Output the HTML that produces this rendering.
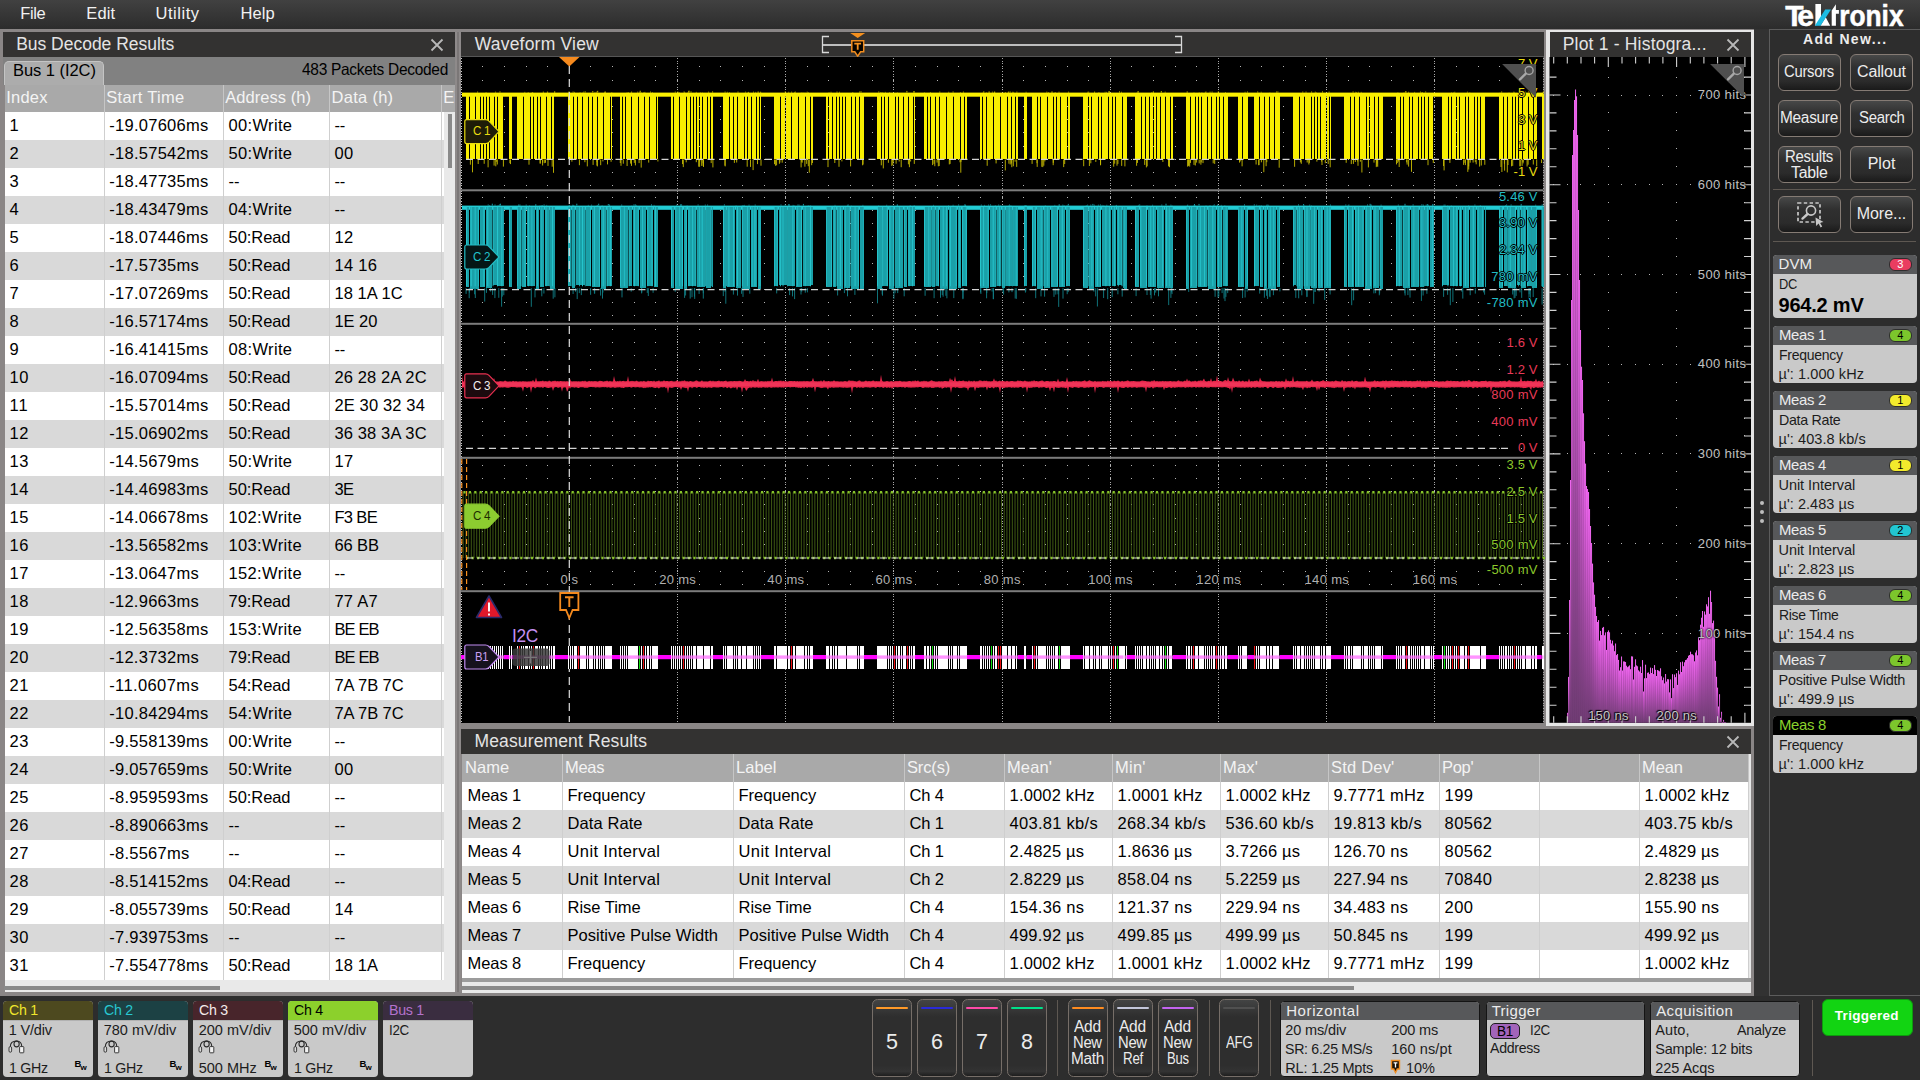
<!DOCTYPE html><html><head><meta charset="utf-8"><title>scope</title><style>
html,body{margin:0;padding:0}
body{width:1920px;height:1080px;overflow:hidden;position:relative;background:#2d2d2d;font-family:"Liberation Sans",sans-serif;}
.t{position:absolute;white-space:pre;line-height:20px;height:20px;}
svg{position:absolute;overflow:visible}
</style></head><body>
<div style="position:absolute;left:0px;top:0px;width:1920px;height:29px;background:linear-gradient(#414141,#2c2c2c);"></div>
<span class="t" style="left:20.30px;top:3.30px;font-size:16.5px;letter-spacing:-0.372px;color:#f2f2f2;">File</span>
<span class="t" style="left:86.30px;top:3.30px;font-size:16.5px;letter-spacing:0.154px;color:#f2f2f2;">Edit</span>
<span class="t" style="left:155.50px;top:3.30px;font-size:16.5px;letter-spacing:0.541px;color:#f2f2f2;">Utility</span>
<span class="t" style="left:240.50px;top:3.30px;font-size:16.5px;letter-spacing:0.065px;color:#f2f2f2;">Help</span>
<div style="position:absolute;left:0px;top:29px;width:1754px;height:967px;background:#8a8686;"></div>
<div style="position:absolute;left:1754px;top:29px;width:15px;height:967px;background:#323232;"></div>
<div style="position:absolute;left:3px;top:32px;width:452px;height:24.5px;background:#333231;"></div>
<span class="t" style="left:16.20px;top:34.00px;font-size:17.5px;letter-spacing:-0.022px;color:#e4e4e4;">Bus Decode Results</span>
<svg style="left:430px;top:38px" width="14" height="14"><path d="M1.5 1.5L12.5 12.5M12.5 1.5L1.5 12.5" stroke="#b8b8b8" stroke-width="1.8" fill="none"/></svg>
<div style="position:absolute;left:3px;top:56.5px;width:452px;height:28px;background:#818181;"></div>
<div style="position:absolute;left:4px;top:61px;width:100px;height:24px;background:#acacac;border-radius:5px 5px 0 0;border:1px solid #c4c4c4;border-bottom:none;box-sizing:border-box;"></div>
<span class="t" style="left:13.00px;top:59.80px;font-size:16.5px;letter-spacing:-0.055px;color:#000;">Bus 1 (I2C)</span>
<span class="t" style="left:301.72px;top:59.30px;font-size:16.5px;letter-spacing:-0.300px;color:#000;transform:scaleX(0.9375);transform-origin:0 50%;">483 Packets Decoded</span>
<div style="position:absolute;left:5px;top:84.5px;width:450px;height:27.5px;background:#a9a9a9;"></div>
<span class="t" style="left:6.30px;top:87.30px;font-size:16.5px;letter-spacing:0.186px;color:#f4f4f4;">Index</span>
<span class="t" style="left:106.30px;top:87.30px;font-size:16.5px;letter-spacing:0.294px;color:#f4f4f4;">Start Time</span>
<span class="t" style="left:225.30px;top:87.30px;font-size:16.5px;letter-spacing:0.040px;color:#f4f4f4;">Address (h)</span>
<span class="t" style="left:331.60px;top:87.30px;font-size:16.5px;letter-spacing:0.274px;color:#f4f4f4;">Data (h)</span>
<div style="position:absolute;left:441px;top:84.5px;width:13.5px;height:27px;overflow:hidden">
<span class="t" style="left:2.30px;top:2.80px;font-size:16.5px;letter-spacing:-0.021px;color:#f4f4f4;">Error</span>
</div>
<div style="position:absolute;left:5px;top:112px;width:439px;height:868px;background:#fff;"></div>
<div style="position:absolute;left:444px;top:112px;width:10.5px;height:880px;background:#e9e9e9;"></div>
<div style="position:absolute;left:5px;top:980px;width:439px;height:12px;background:#e9e9e9;"></div>
<span class="t" style="left:9.60px;top:115.30px;font-size:16.5px;letter-spacing:0.367px;color:#000;">1</span>
<span class="t" style="left:109.20px;top:115.30px;font-size:16.5px;letter-spacing:0.282px;color:#000;">-19.07606ms</span>
<span class="t" style="left:228.60px;top:115.30px;font-size:16.5px;letter-spacing:0.326px;color:#000;">00:Write</span>
<span class="t" style="left:334.40px;top:115.30px;font-size:16.5px;letter-spacing:-0.082px;color:#000;">--</span>
<div style="position:absolute;left:5px;top:140px;width:439px;height:28px;background:#d9d9d9;"></div>
<span class="t" style="left:9.60px;top:143.30px;font-size:16.5px;letter-spacing:0.367px;color:#000;">2</span>
<span class="t" style="left:109.20px;top:143.30px;font-size:16.5px;letter-spacing:0.282px;color:#000;">-18.57542ms</span>
<span class="t" style="left:228.60px;top:143.30px;font-size:16.5px;letter-spacing:0.326px;color:#000;">50:Write</span>
<span class="t" style="left:334.40px;top:143.30px;font-size:16.5px;letter-spacing:0.367px;color:#000;">00</span>
<span class="t" style="left:9.60px;top:171.30px;font-size:16.5px;letter-spacing:0.367px;color:#000;">3</span>
<span class="t" style="left:109.20px;top:171.30px;font-size:16.5px;letter-spacing:0.282px;color:#000;">-18.47735ms</span>
<span class="t" style="left:228.60px;top:171.30px;font-size:16.5px;letter-spacing:-0.082px;color:#000;">--</span>
<span class="t" style="left:334.40px;top:171.30px;font-size:16.5px;letter-spacing:-0.082px;color:#000;">--</span>
<div style="position:absolute;left:5px;top:196px;width:439px;height:28px;background:#d9d9d9;"></div>
<span class="t" style="left:9.60px;top:199.30px;font-size:16.5px;letter-spacing:0.367px;color:#000;">4</span>
<span class="t" style="left:109.20px;top:199.30px;font-size:16.5px;letter-spacing:0.282px;color:#000;">-18.43479ms</span>
<span class="t" style="left:228.60px;top:199.30px;font-size:16.5px;letter-spacing:0.326px;color:#000;">04:Write</span>
<span class="t" style="left:334.40px;top:199.30px;font-size:16.5px;letter-spacing:-0.082px;color:#000;">--</span>
<span class="t" style="left:9.60px;top:227.30px;font-size:16.5px;letter-spacing:0.367px;color:#000;">5</span>
<span class="t" style="left:109.20px;top:227.30px;font-size:16.5px;letter-spacing:0.282px;color:#000;">-18.07446ms</span>
<span class="t" style="left:228.60px;top:227.30px;font-size:16.5px;letter-spacing:-0.079px;color:#000;">50:Read</span>
<span class="t" style="left:334.40px;top:227.30px;font-size:16.5px;letter-spacing:0.367px;color:#000;">12</span>
<div style="position:absolute;left:5px;top:252px;width:439px;height:28px;background:#d9d9d9;"></div>
<span class="t" style="left:9.60px;top:255.30px;font-size:16.5px;letter-spacing:0.367px;color:#000;">6</span>
<span class="t" style="left:109.20px;top:255.30px;font-size:16.5px;letter-spacing:0.274px;color:#000;">-17.5735ms</span>
<span class="t" style="left:228.60px;top:255.30px;font-size:16.5px;letter-spacing:-0.079px;color:#000;">50:Read</span>
<span class="t" style="left:334.40px;top:255.30px;font-size:16.5px;letter-spacing:0.330px;color:#000;">14 16</span>
<span class="t" style="left:9.60px;top:283.30px;font-size:16.5px;letter-spacing:0.367px;color:#000;">7</span>
<span class="t" style="left:109.20px;top:283.30px;font-size:16.5px;letter-spacing:0.282px;color:#000;">-17.07269ms</span>
<span class="t" style="left:228.60px;top:283.30px;font-size:16.5px;letter-spacing:-0.079px;color:#000;">50:Read</span>
<span class="t" style="left:334.40px;top:283.30px;font-size:16.5px;letter-spacing:0.070px;color:#000;">18 1A 1C</span>
<div style="position:absolute;left:5px;top:308px;width:439px;height:28px;background:#d9d9d9;"></div>
<span class="t" style="left:9.60px;top:311.30px;font-size:16.5px;letter-spacing:0.367px;color:#000;">8</span>
<span class="t" style="left:109.20px;top:311.30px;font-size:16.5px;letter-spacing:0.282px;color:#000;">-16.57174ms</span>
<span class="t" style="left:228.60px;top:311.30px;font-size:16.5px;letter-spacing:-0.079px;color:#000;">50:Read</span>
<span class="t" style="left:334.40px;top:311.30px;font-size:16.5px;letter-spacing:-0.049px;color:#000;">1E 20</span>
<span class="t" style="left:9.60px;top:339.30px;font-size:16.5px;letter-spacing:0.367px;color:#000;">9</span>
<span class="t" style="left:109.20px;top:339.30px;font-size:16.5px;letter-spacing:0.282px;color:#000;">-16.41415ms</span>
<span class="t" style="left:228.60px;top:339.30px;font-size:16.5px;letter-spacing:0.326px;color:#000;">08:Write</span>
<span class="t" style="left:334.40px;top:339.30px;font-size:16.5px;letter-spacing:-0.082px;color:#000;">--</span>
<div style="position:absolute;left:5px;top:364px;width:439px;height:28px;background:#d9d9d9;"></div>
<span class="t" style="left:9.60px;top:367.30px;font-size:16.5px;letter-spacing:0.367px;color:#000;">10</span>
<span class="t" style="left:109.20px;top:367.30px;font-size:16.5px;letter-spacing:0.282px;color:#000;">-16.07094ms</span>
<span class="t" style="left:228.60px;top:367.30px;font-size:16.5px;letter-spacing:-0.079px;color:#000;">50:Read</span>
<span class="t" style="left:334.40px;top:367.30px;font-size:16.5px;letter-spacing:0.134px;color:#000;">26 28 2A 2C</span>
<span class="t" style="left:9.60px;top:395.30px;font-size:16.5px;letter-spacing:0.979px;color:#000;">11</span>
<span class="t" style="left:109.20px;top:395.30px;font-size:16.5px;letter-spacing:0.282px;color:#000;">-15.57014ms</span>
<span class="t" style="left:228.60px;top:395.30px;font-size:16.5px;letter-spacing:-0.079px;color:#000;">50:Read</span>
<span class="t" style="left:334.40px;top:395.30px;font-size:16.5px;letter-spacing:0.145px;color:#000;">2E 30 32 34</span>
<div style="position:absolute;left:5px;top:420px;width:439px;height:28px;background:#d9d9d9;"></div>
<span class="t" style="left:9.60px;top:423.30px;font-size:16.5px;letter-spacing:0.367px;color:#000;">12</span>
<span class="t" style="left:109.20px;top:423.30px;font-size:16.5px;letter-spacing:0.282px;color:#000;">-15.06902ms</span>
<span class="t" style="left:228.60px;top:423.30px;font-size:16.5px;letter-spacing:-0.079px;color:#000;">50:Read</span>
<span class="t" style="left:334.40px;top:423.30px;font-size:16.5px;letter-spacing:0.134px;color:#000;">36 38 3A 3C</span>
<span class="t" style="left:9.60px;top:451.30px;font-size:16.5px;letter-spacing:0.367px;color:#000;">13</span>
<span class="t" style="left:109.20px;top:451.30px;font-size:16.5px;letter-spacing:0.274px;color:#000;">-14.5679ms</span>
<span class="t" style="left:228.60px;top:451.30px;font-size:16.5px;letter-spacing:0.326px;color:#000;">50:Write</span>
<span class="t" style="left:334.40px;top:451.30px;font-size:16.5px;letter-spacing:0.367px;color:#000;">17</span>
<div style="position:absolute;left:5px;top:476px;width:439px;height:28px;background:#d9d9d9;"></div>
<span class="t" style="left:9.60px;top:479.30px;font-size:16.5px;letter-spacing:0.367px;color:#000;">14</span>
<span class="t" style="left:109.20px;top:479.30px;font-size:16.5px;letter-spacing:0.282px;color:#000;">-14.46983ms</span>
<span class="t" style="left:228.60px;top:479.30px;font-size:16.5px;letter-spacing:-0.079px;color:#000;">50:Read</span>
<span class="t" style="left:334.40px;top:479.30px;font-size:16.5px;letter-spacing:-0.580px;color:#000;">3E</span>
<span class="t" style="left:9.60px;top:507.30px;font-size:16.5px;letter-spacing:0.367px;color:#000;">15</span>
<span class="t" style="left:109.20px;top:507.30px;font-size:16.5px;letter-spacing:0.282px;color:#000;">-14.06678ms</span>
<span class="t" style="left:228.60px;top:507.30px;font-size:16.5px;letter-spacing:0.331px;color:#000;">102:Write</span>
<span class="t" style="left:334.40px;top:507.30px;font-size:16.5px;letter-spacing:-0.629px;color:#000;">F3 BE</span>
<div style="position:absolute;left:5px;top:532px;width:439px;height:28px;background:#d9d9d9;"></div>
<span class="t" style="left:9.60px;top:535.30px;font-size:16.5px;letter-spacing:0.367px;color:#000;">16</span>
<span class="t" style="left:109.20px;top:535.30px;font-size:16.5px;letter-spacing:0.282px;color:#000;">-13.56582ms</span>
<span class="t" style="left:228.60px;top:535.30px;font-size:16.5px;letter-spacing:0.331px;color:#000;">103:Write</span>
<span class="t" style="left:334.40px;top:535.30px;font-size:16.5px;letter-spacing:-0.102px;color:#000;">66 BB</span>
<span class="t" style="left:9.60px;top:563.30px;font-size:16.5px;letter-spacing:0.367px;color:#000;">17</span>
<span class="t" style="left:109.20px;top:563.30px;font-size:16.5px;letter-spacing:0.274px;color:#000;">-13.0647ms</span>
<span class="t" style="left:228.60px;top:563.30px;font-size:16.5px;letter-spacing:0.331px;color:#000;">152:Write</span>
<span class="t" style="left:334.40px;top:563.30px;font-size:16.5px;letter-spacing:-0.082px;color:#000;">--</span>
<div style="position:absolute;left:5px;top:588px;width:439px;height:28px;background:#d9d9d9;"></div>
<span class="t" style="left:9.60px;top:591.30px;font-size:16.5px;letter-spacing:0.367px;color:#000;">18</span>
<span class="t" style="left:109.20px;top:591.30px;font-size:16.5px;letter-spacing:0.274px;color:#000;">-12.9663ms</span>
<span class="t" style="left:228.60px;top:591.30px;font-size:16.5px;letter-spacing:-0.079px;color:#000;">79:Read</span>
<span class="t" style="left:334.40px;top:591.30px;font-size:16.5px;letter-spacing:0.290px;color:#000;">77 A7</span>
<span class="t" style="left:9.60px;top:619.30px;font-size:16.5px;letter-spacing:0.367px;color:#000;">19</span>
<span class="t" style="left:109.20px;top:619.30px;font-size:16.5px;letter-spacing:0.282px;color:#000;">-12.56358ms</span>
<span class="t" style="left:228.60px;top:619.30px;font-size:16.5px;letter-spacing:0.331px;color:#000;">153:Write</span>
<span class="t" style="left:334.40px;top:619.30px;font-size:16.5px;letter-spacing:-0.860px;color:#000;">BE EB</span>
<div style="position:absolute;left:5px;top:644px;width:439px;height:28px;background:#d9d9d9;"></div>
<span class="t" style="left:9.60px;top:647.30px;font-size:16.5px;letter-spacing:0.367px;color:#000;">20</span>
<span class="t" style="left:109.20px;top:647.30px;font-size:16.5px;letter-spacing:0.274px;color:#000;">-12.3732ms</span>
<span class="t" style="left:228.60px;top:647.30px;font-size:16.5px;letter-spacing:-0.079px;color:#000;">79:Read</span>
<span class="t" style="left:334.40px;top:647.30px;font-size:16.5px;letter-spacing:-0.860px;color:#000;">BE EB</span>
<span class="t" style="left:9.60px;top:675.30px;font-size:16.5px;letter-spacing:0.367px;color:#000;">21</span>
<span class="t" style="left:109.20px;top:675.30px;font-size:16.5px;letter-spacing:0.396px;color:#000;">-11.0607ms</span>
<span class="t" style="left:228.60px;top:675.30px;font-size:16.5px;letter-spacing:-0.079px;color:#000;">54:Read</span>
<span class="t" style="left:334.40px;top:675.30px;font-size:16.5px;letter-spacing:-0.065px;color:#000;">7A 7B 7C</span>
<div style="position:absolute;left:5px;top:700px;width:439px;height:28px;background:#d9d9d9;"></div>
<span class="t" style="left:9.60px;top:703.30px;font-size:16.5px;letter-spacing:0.367px;color:#000;">22</span>
<span class="t" style="left:109.20px;top:703.30px;font-size:16.5px;letter-spacing:0.282px;color:#000;">-10.84294ms</span>
<span class="t" style="left:228.60px;top:703.30px;font-size:16.5px;letter-spacing:0.326px;color:#000;">54:Write</span>
<span class="t" style="left:334.40px;top:703.30px;font-size:16.5px;letter-spacing:-0.065px;color:#000;">7A 7B 7C</span>
<span class="t" style="left:9.60px;top:731.30px;font-size:16.5px;letter-spacing:0.367px;color:#000;">23</span>
<span class="t" style="left:109.20px;top:731.30px;font-size:16.5px;letter-spacing:0.282px;color:#000;">-9.558139ms</span>
<span class="t" style="left:228.60px;top:731.30px;font-size:16.5px;letter-spacing:0.326px;color:#000;">00:Write</span>
<span class="t" style="left:334.40px;top:731.30px;font-size:16.5px;letter-spacing:-0.082px;color:#000;">--</span>
<div style="position:absolute;left:5px;top:756px;width:439px;height:28px;background:#d9d9d9;"></div>
<span class="t" style="left:9.60px;top:759.30px;font-size:16.5px;letter-spacing:0.367px;color:#000;">24</span>
<span class="t" style="left:109.20px;top:759.30px;font-size:16.5px;letter-spacing:0.282px;color:#000;">-9.057659ms</span>
<span class="t" style="left:228.60px;top:759.30px;font-size:16.5px;letter-spacing:0.326px;color:#000;">50:Write</span>
<span class="t" style="left:334.40px;top:759.30px;font-size:16.5px;letter-spacing:0.367px;color:#000;">00</span>
<span class="t" style="left:9.60px;top:787.30px;font-size:16.5px;letter-spacing:0.367px;color:#000;">25</span>
<span class="t" style="left:109.20px;top:787.30px;font-size:16.5px;letter-spacing:0.282px;color:#000;">-8.959593ms</span>
<span class="t" style="left:228.60px;top:787.30px;font-size:16.5px;letter-spacing:-0.079px;color:#000;">50:Read</span>
<span class="t" style="left:334.40px;top:787.30px;font-size:16.5px;letter-spacing:-0.082px;color:#000;">--</span>
<div style="position:absolute;left:5px;top:812px;width:439px;height:28px;background:#d9d9d9;"></div>
<span class="t" style="left:9.60px;top:815.30px;font-size:16.5px;letter-spacing:0.367px;color:#000;">26</span>
<span class="t" style="left:109.20px;top:815.30px;font-size:16.5px;letter-spacing:0.282px;color:#000;">-8.890663ms</span>
<span class="t" style="left:228.60px;top:815.30px;font-size:16.5px;letter-spacing:-0.082px;color:#000;">--</span>
<span class="t" style="left:334.40px;top:815.30px;font-size:16.5px;letter-spacing:-0.082px;color:#000;">--</span>
<span class="t" style="left:9.60px;top:843.30px;font-size:16.5px;letter-spacing:0.367px;color:#000;">27</span>
<span class="t" style="left:109.20px;top:843.30px;font-size:16.5px;letter-spacing:0.263px;color:#000;">-8.5567ms</span>
<span class="t" style="left:228.60px;top:843.30px;font-size:16.5px;letter-spacing:-0.082px;color:#000;">--</span>
<span class="t" style="left:334.40px;top:843.30px;font-size:16.5px;letter-spacing:-0.082px;color:#000;">--</span>
<div style="position:absolute;left:5px;top:868px;width:439px;height:28px;background:#d9d9d9;"></div>
<span class="t" style="left:9.60px;top:871.30px;font-size:16.5px;letter-spacing:0.367px;color:#000;">28</span>
<span class="t" style="left:109.20px;top:871.30px;font-size:16.5px;letter-spacing:0.282px;color:#000;">-8.514152ms</span>
<span class="t" style="left:228.60px;top:871.30px;font-size:16.5px;letter-spacing:-0.079px;color:#000;">04:Read</span>
<span class="t" style="left:334.40px;top:871.30px;font-size:16.5px;letter-spacing:-0.082px;color:#000;">--</span>
<span class="t" style="left:9.60px;top:899.30px;font-size:16.5px;letter-spacing:0.367px;color:#000;">29</span>
<span class="t" style="left:109.20px;top:899.30px;font-size:16.5px;letter-spacing:0.282px;color:#000;">-8.055739ms</span>
<span class="t" style="left:228.60px;top:899.30px;font-size:16.5px;letter-spacing:-0.079px;color:#000;">50:Read</span>
<span class="t" style="left:334.40px;top:899.30px;font-size:16.5px;letter-spacing:0.367px;color:#000;">14</span>
<div style="position:absolute;left:5px;top:924px;width:439px;height:28px;background:#d9d9d9;"></div>
<span class="t" style="left:9.60px;top:927.30px;font-size:16.5px;letter-spacing:0.367px;color:#000;">30</span>
<span class="t" style="left:109.20px;top:927.30px;font-size:16.5px;letter-spacing:0.282px;color:#000;">-7.939753ms</span>
<span class="t" style="left:228.60px;top:927.30px;font-size:16.5px;letter-spacing:-0.082px;color:#000;">--</span>
<span class="t" style="left:334.40px;top:927.30px;font-size:16.5px;letter-spacing:-0.082px;color:#000;">--</span>
<span class="t" style="left:9.60px;top:955.30px;font-size:16.5px;letter-spacing:0.367px;color:#000;">31</span>
<span class="t" style="left:109.20px;top:955.30px;font-size:16.5px;letter-spacing:0.282px;color:#000;">-7.554778ms</span>
<span class="t" style="left:228.60px;top:955.30px;font-size:16.5px;letter-spacing:-0.079px;color:#000;">50:Read</span>
<span class="t" style="left:334.40px;top:955.30px;font-size:16.5px;letter-spacing:0.108px;color:#000;">18 1A</span>
<div style="position:absolute;left:104px;top:84.5px;width:1px;height:27.5px;background:#c6c6c6;"></div>
<div style="position:absolute;left:104px;top:112px;width:1px;height:868px;background:#cfcfcf;"></div>
<div style="position:absolute;left:223px;top:84.5px;width:1px;height:27.5px;background:#c6c6c6;"></div>
<div style="position:absolute;left:223px;top:112px;width:1px;height:868px;background:#cfcfcf;"></div>
<div style="position:absolute;left:329px;top:84.5px;width:1px;height:27.5px;background:#c6c6c6;"></div>
<div style="position:absolute;left:329px;top:112px;width:1px;height:868px;background:#cfcfcf;"></div>
<div style="position:absolute;left:441px;top:84.5px;width:1px;height:27.5px;background:#c6c6c6;"></div>
<div style="position:absolute;left:441px;top:112px;width:1px;height:868px;background:#cfcfcf;"></div>
<div style="position:absolute;left:448px;top:114px;width:4px;height:53.5px;background:#8a8a8a;"></div>
<div style="position:absolute;left:4px;top:986px;width:216px;height:4px;background:#8a8a8a;"></div>
<div style="position:absolute;left:455px;top:32px;width:6px;height:960px;background:#8e8a8a;"></div>
<div style="position:absolute;left:457.2px;top:32px;width:2.2px;height:960px;background:#7b7777;"></div>
<div style="position:absolute;left:461px;top:32px;width:1082.5px;height:25px;background:#333231;"></div>
<div style="position:absolute;left:461px;top:56px;width:1082.5px;height:1px;background:#565656;"></div>
<span class="t" style="left:474.70px;top:34.00px;font-size:17.5px;letter-spacing:0.209px;color:#e4e4e4;">Waveform View</span>
<svg style="left:0;top:0" width="1920" height="60"><path d="M829 36.5H822.5V52.5H829M1175 36.5H1181.5V52.5H1175" stroke="#d8d8d8" stroke-width="1.3" fill="none"/><path d="M823 45H1181" stroke="#bebebe" stroke-width="1.8"/><path d="M850.2 33H865.2L857.7 38Z" fill="#f5901e"/><path d="M851.8 40.7H863.7V51.8H860.6L857.7 56.2L854.8 51.8H851.8Z" fill="#050300" stroke="#f08c1e" stroke-width="1.5"/><path d="M854.3 43.6H861.1M857.7 43.6V49.8" stroke="#f59220" stroke-width="1.8" fill="none"/></svg>
<svg style="left:0;top:0" width="1920" height="730" viewBox="0 0 1920 730"><rect x="461" y="57" width="1082.5" height="666" fill="#000"/><path d="M482 66.5h1M504 66.5h1M526 66.5h1M547 66.5h1M569 66.5h1M590 66.5h1M612 66.5h1M634 66.5h1M655 66.5h1M677 66.5h1M699 66.5h1M720 66.5h1M742 66.5h1M764 66.5h1M785 66.5h1M807 66.5h1M828 66.5h1M850 66.5h1M872 66.5h1M893 66.5h1M915 66.5h1M937 66.5h1M958 66.5h1M980 66.5h1M1002 66.5h1M1023 66.5h1M1045 66.5h1M1067 66.5h1M1088 66.5h1M1110 66.5h1M1131 66.5h1M1153 66.5h1M1175 66.5h1M1196 66.5h1M1218 66.5h1M1240 66.5h1M1261 66.5h1M1283 66.5h1M1305 66.5h1M1326 66.5h1M1348 66.5h1M1369 66.5h1M1391 66.5h1M1413 66.5h1M1434 66.5h1M1456 66.5h1M1478 66.5h1M1499 66.5h1M1521 66.5h1M482 80.5h1M504 80.5h1M526 80.5h1M547 80.5h1M569 80.5h1M590 80.5h1M612 80.5h1M634 80.5h1M655 80.5h1M677 80.5h1M699 80.5h1M720 80.5h1M742 80.5h1M764 80.5h1M785 80.5h1M807 80.5h1M828 80.5h1M850 80.5h1M872 80.5h1M893 80.5h1M915 80.5h1M937 80.5h1M958 80.5h1M980 80.5h1M1002 80.5h1M1023 80.5h1M1045 80.5h1M1067 80.5h1M1088 80.5h1M1110 80.5h1M1131 80.5h1M1153 80.5h1M1175 80.5h1M1196 80.5h1M1218 80.5h1M1240 80.5h1M1261 80.5h1M1283 80.5h1M1305 80.5h1M1326 80.5h1M1348 80.5h1M1369 80.5h1M1391 80.5h1M1413 80.5h1M1434 80.5h1M1456 80.5h1M1478 80.5h1M1499 80.5h1M1521 80.5h1M482 93.5h1M504 93.5h1M526 93.5h1M547 93.5h1M569 93.5h1M590 93.5h1M612 93.5h1M634 93.5h1M655 93.5h1M677 93.5h1M699 93.5h1M720 93.5h1M742 93.5h1M764 93.5h1M785 93.5h1M807 93.5h1M828 93.5h1M850 93.5h1M872 93.5h1M893 93.5h1M915 93.5h1M937 93.5h1M958 93.5h1M980 93.5h1M1002 93.5h1M1023 93.5h1M1045 93.5h1M1067 93.5h1M1088 93.5h1M1110 93.5h1M1131 93.5h1M1153 93.5h1M1175 93.5h1M1196 93.5h1M1218 93.5h1M1240 93.5h1M1261 93.5h1M1283 93.5h1M1305 93.5h1M1326 93.5h1M1348 93.5h1M1369 93.5h1M1391 93.5h1M1413 93.5h1M1434 93.5h1M1456 93.5h1M1478 93.5h1M1499 93.5h1M1521 93.5h1M482 106.5h1M504 106.5h1M526 106.5h1M547 106.5h1M569 106.5h1M590 106.5h1M612 106.5h1M634 106.5h1M655 106.5h1M677 106.5h1M699 106.5h1M720 106.5h1M742 106.5h1M764 106.5h1M785 106.5h1M807 106.5h1M828 106.5h1M850 106.5h1M872 106.5h1M893 106.5h1M915 106.5h1M937 106.5h1M958 106.5h1M980 106.5h1M1002 106.5h1M1023 106.5h1M1045 106.5h1M1067 106.5h1M1088 106.5h1M1110 106.5h1M1131 106.5h1M1153 106.5h1M1175 106.5h1M1196 106.5h1M1218 106.5h1M1240 106.5h1M1261 106.5h1M1283 106.5h1M1305 106.5h1M1326 106.5h1M1348 106.5h1M1369 106.5h1M1391 106.5h1M1413 106.5h1M1434 106.5h1M1456 106.5h1M1478 106.5h1M1499 106.5h1M1521 106.5h1M482 119.5h1M504 119.5h1M526 119.5h1M547 119.5h1M569 119.5h1M590 119.5h1M612 119.5h1M634 119.5h1M655 119.5h1M677 119.5h1M699 119.5h1M720 119.5h1M742 119.5h1M764 119.5h1M785 119.5h1M807 119.5h1M828 119.5h1M850 119.5h1M872 119.5h1M893 119.5h1M915 119.5h1M937 119.5h1M958 119.5h1M980 119.5h1M1002 119.5h1M1023 119.5h1M1045 119.5h1M1067 119.5h1M1088 119.5h1M1110 119.5h1M1131 119.5h1M1153 119.5h1M1175 119.5h1M1196 119.5h1M1218 119.5h1M1240 119.5h1M1261 119.5h1M1283 119.5h1M1305 119.5h1M1326 119.5h1M1348 119.5h1M1369 119.5h1M1391 119.5h1M1413 119.5h1M1434 119.5h1M1456 119.5h1M1478 119.5h1M1499 119.5h1M1521 119.5h1M482 132.5h1M504 132.5h1M526 132.5h1M547 132.5h1M569 132.5h1M590 132.5h1M612 132.5h1M634 132.5h1M655 132.5h1M677 132.5h1M699 132.5h1M720 132.5h1M742 132.5h1M764 132.5h1M785 132.5h1M807 132.5h1M828 132.5h1M850 132.5h1M872 132.5h1M893 132.5h1M915 132.5h1M937 132.5h1M958 132.5h1M980 132.5h1M1002 132.5h1M1023 132.5h1M1045 132.5h1M1067 132.5h1M1088 132.5h1M1110 132.5h1M1131 132.5h1M1153 132.5h1M1175 132.5h1M1196 132.5h1M1218 132.5h1M1240 132.5h1M1261 132.5h1M1283 132.5h1M1305 132.5h1M1326 132.5h1M1348 132.5h1M1369 132.5h1M1391 132.5h1M1413 132.5h1M1434 132.5h1M1456 132.5h1M1478 132.5h1M1499 132.5h1M1521 132.5h1M482 146.5h1M504 146.5h1M526 146.5h1M547 146.5h1M569 146.5h1M590 146.5h1M612 146.5h1M634 146.5h1M655 146.5h1M677 146.5h1M699 146.5h1M720 146.5h1M742 146.5h1M764 146.5h1M785 146.5h1M807 146.5h1M828 146.5h1M850 146.5h1M872 146.5h1M893 146.5h1M915 146.5h1M937 146.5h1M958 146.5h1M980 146.5h1M1002 146.5h1M1023 146.5h1M1045 146.5h1M1067 146.5h1M1088 146.5h1M1110 146.5h1M1131 146.5h1M1153 146.5h1M1175 146.5h1M1196 146.5h1M1218 146.5h1M1240 146.5h1M1261 146.5h1M1283 146.5h1M1305 146.5h1M1326 146.5h1M1348 146.5h1M1369 146.5h1M1391 146.5h1M1413 146.5h1M1434 146.5h1M1456 146.5h1M1478 146.5h1M1499 146.5h1M1521 146.5h1M482 159.5h1M504 159.5h1M526 159.5h1M547 159.5h1M569 159.5h1M590 159.5h1M612 159.5h1M634 159.5h1M655 159.5h1M677 159.5h1M699 159.5h1M720 159.5h1M742 159.5h1M764 159.5h1M785 159.5h1M807 159.5h1M828 159.5h1M850 159.5h1M872 159.5h1M893 159.5h1M915 159.5h1M937 159.5h1M958 159.5h1M980 159.5h1M1002 159.5h1M1023 159.5h1M1045 159.5h1M1067 159.5h1M1088 159.5h1M1110 159.5h1M1131 159.5h1M1153 159.5h1M1175 159.5h1M1196 159.5h1M1218 159.5h1M1240 159.5h1M1261 159.5h1M1283 159.5h1M1305 159.5h1M1326 159.5h1M1348 159.5h1M1369 159.5h1M1391 159.5h1M1413 159.5h1M1434 159.5h1M1456 159.5h1M1478 159.5h1M1499 159.5h1M1521 159.5h1M482 172.5h1M504 172.5h1M526 172.5h1M547 172.5h1M569 172.5h1M590 172.5h1M612 172.5h1M634 172.5h1M655 172.5h1M677 172.5h1M699 172.5h1M720 172.5h1M742 172.5h1M764 172.5h1M785 172.5h1M807 172.5h1M828 172.5h1M850 172.5h1M872 172.5h1M893 172.5h1M915 172.5h1M937 172.5h1M958 172.5h1M980 172.5h1M1002 172.5h1M1023 172.5h1M1045 172.5h1M1067 172.5h1M1088 172.5h1M1110 172.5h1M1131 172.5h1M1153 172.5h1M1175 172.5h1M1196 172.5h1M1218 172.5h1M1240 172.5h1M1261 172.5h1M1283 172.5h1M1305 172.5h1M1326 172.5h1M1348 172.5h1M1369 172.5h1M1391 172.5h1M1413 172.5h1M1434 172.5h1M1456 172.5h1M1478 172.5h1M1499 172.5h1M1521 172.5h1M482 185.5h1M504 185.5h1M526 185.5h1M547 185.5h1M569 185.5h1M590 185.5h1M612 185.5h1M634 185.5h1M655 185.5h1M677 185.5h1M699 185.5h1M720 185.5h1M742 185.5h1M764 185.5h1M785 185.5h1M807 185.5h1M828 185.5h1M850 185.5h1M872 185.5h1M893 185.5h1M915 185.5h1M937 185.5h1M958 185.5h1M980 185.5h1M1002 185.5h1M1023 185.5h1M1045 185.5h1M1067 185.5h1M1088 185.5h1M1110 185.5h1M1131 185.5h1M1153 185.5h1M1175 185.5h1M1196 185.5h1M1218 185.5h1M1240 185.5h1M1261 185.5h1M1283 185.5h1M1305 185.5h1M1326 185.5h1M1348 185.5h1M1369 185.5h1M1391 185.5h1M1413 185.5h1M1434 185.5h1M1456 185.5h1M1478 185.5h1M1499 185.5h1M1521 185.5h1M482 197.5h1M504 197.5h1M526 197.5h1M547 197.5h1M569 197.5h1M590 197.5h1M612 197.5h1M634 197.5h1M655 197.5h1M677 197.5h1M699 197.5h1M720 197.5h1M742 197.5h1M764 197.5h1M785 197.5h1M807 197.5h1M828 197.5h1M850 197.5h1M872 197.5h1M893 197.5h1M915 197.5h1M937 197.5h1M958 197.5h1M980 197.5h1M1002 197.5h1M1023 197.5h1M1045 197.5h1M1067 197.5h1M1088 197.5h1M1110 197.5h1M1131 197.5h1M1153 197.5h1M1175 197.5h1M1196 197.5h1M1218 197.5h1M1240 197.5h1M1261 197.5h1M1283 197.5h1M1305 197.5h1M1326 197.5h1M1348 197.5h1M1369 197.5h1M1391 197.5h1M1413 197.5h1M1434 197.5h1M1456 197.5h1M1478 197.5h1M1499 197.5h1M1521 197.5h1M482 210.5h1M504 210.5h1M526 210.5h1M547 210.5h1M569 210.5h1M590 210.5h1M612 210.5h1M634 210.5h1M655 210.5h1M677 210.5h1M699 210.5h1M720 210.5h1M742 210.5h1M764 210.5h1M785 210.5h1M807 210.5h1M828 210.5h1M850 210.5h1M872 210.5h1M893 210.5h1M915 210.5h1M937 210.5h1M958 210.5h1M980 210.5h1M1002 210.5h1M1023 210.5h1M1045 210.5h1M1067 210.5h1M1088 210.5h1M1110 210.5h1M1131 210.5h1M1153 210.5h1M1175 210.5h1M1196 210.5h1M1218 210.5h1M1240 210.5h1M1261 210.5h1M1283 210.5h1M1305 210.5h1M1326 210.5h1M1348 210.5h1M1369 210.5h1M1391 210.5h1M1413 210.5h1M1434 210.5h1M1456 210.5h1M1478 210.5h1M1499 210.5h1M1521 210.5h1M482 223.5h1M504 223.5h1M526 223.5h1M547 223.5h1M569 223.5h1M590 223.5h1M612 223.5h1M634 223.5h1M655 223.5h1M677 223.5h1M699 223.5h1M720 223.5h1M742 223.5h1M764 223.5h1M785 223.5h1M807 223.5h1M828 223.5h1M850 223.5h1M872 223.5h1M893 223.5h1M915 223.5h1M937 223.5h1M958 223.5h1M980 223.5h1M1002 223.5h1M1023 223.5h1M1045 223.5h1M1067 223.5h1M1088 223.5h1M1110 223.5h1M1131 223.5h1M1153 223.5h1M1175 223.5h1M1196 223.5h1M1218 223.5h1M1240 223.5h1M1261 223.5h1M1283 223.5h1M1305 223.5h1M1326 223.5h1M1348 223.5h1M1369 223.5h1M1391 223.5h1M1413 223.5h1M1434 223.5h1M1456 223.5h1M1478 223.5h1M1499 223.5h1M1521 223.5h1M482 236.5h1M504 236.5h1M526 236.5h1M547 236.5h1M569 236.5h1M590 236.5h1M612 236.5h1M634 236.5h1M655 236.5h1M677 236.5h1M699 236.5h1M720 236.5h1M742 236.5h1M764 236.5h1M785 236.5h1M807 236.5h1M828 236.5h1M850 236.5h1M872 236.5h1M893 236.5h1M915 236.5h1M937 236.5h1M958 236.5h1M980 236.5h1M1002 236.5h1M1023 236.5h1M1045 236.5h1M1067 236.5h1M1088 236.5h1M1110 236.5h1M1131 236.5h1M1153 236.5h1M1175 236.5h1M1196 236.5h1M1218 236.5h1M1240 236.5h1M1261 236.5h1M1283 236.5h1M1305 236.5h1M1326 236.5h1M1348 236.5h1M1369 236.5h1M1391 236.5h1M1413 236.5h1M1434 236.5h1M1456 236.5h1M1478 236.5h1M1499 236.5h1M1521 236.5h1M482 249.5h1M504 249.5h1M526 249.5h1M547 249.5h1M569 249.5h1M590 249.5h1M612 249.5h1M634 249.5h1M655 249.5h1M677 249.5h1M699 249.5h1M720 249.5h1M742 249.5h1M764 249.5h1M785 249.5h1M807 249.5h1M828 249.5h1M850 249.5h1M872 249.5h1M893 249.5h1M915 249.5h1M937 249.5h1M958 249.5h1M980 249.5h1M1002 249.5h1M1023 249.5h1M1045 249.5h1M1067 249.5h1M1088 249.5h1M1110 249.5h1M1131 249.5h1M1153 249.5h1M1175 249.5h1M1196 249.5h1M1218 249.5h1M1240 249.5h1M1261 249.5h1M1283 249.5h1M1305 249.5h1M1326 249.5h1M1348 249.5h1M1369 249.5h1M1391 249.5h1M1413 249.5h1M1434 249.5h1M1456 249.5h1M1478 249.5h1M1499 249.5h1M1521 249.5h1M482 263.5h1M504 263.5h1M526 263.5h1M547 263.5h1M569 263.5h1M590 263.5h1M612 263.5h1M634 263.5h1M655 263.5h1M677 263.5h1M699 263.5h1M720 263.5h1M742 263.5h1M764 263.5h1M785 263.5h1M807 263.5h1M828 263.5h1M850 263.5h1M872 263.5h1M893 263.5h1M915 263.5h1M937 263.5h1M958 263.5h1M980 263.5h1M1002 263.5h1M1023 263.5h1M1045 263.5h1M1067 263.5h1M1088 263.5h1M1110 263.5h1M1131 263.5h1M1153 263.5h1M1175 263.5h1M1196 263.5h1M1218 263.5h1M1240 263.5h1M1261 263.5h1M1283 263.5h1M1305 263.5h1M1326 263.5h1M1348 263.5h1M1369 263.5h1M1391 263.5h1M1413 263.5h1M1434 263.5h1M1456 263.5h1M1478 263.5h1M1499 263.5h1M1521 263.5h1M482 276.5h1M504 276.5h1M526 276.5h1M547 276.5h1M569 276.5h1M590 276.5h1M612 276.5h1M634 276.5h1M655 276.5h1M677 276.5h1M699 276.5h1M720 276.5h1M742 276.5h1M764 276.5h1M785 276.5h1M807 276.5h1M828 276.5h1M850 276.5h1M872 276.5h1M893 276.5h1M915 276.5h1M937 276.5h1M958 276.5h1M980 276.5h1M1002 276.5h1M1023 276.5h1M1045 276.5h1M1067 276.5h1M1088 276.5h1M1110 276.5h1M1131 276.5h1M1153 276.5h1M1175 276.5h1M1196 276.5h1M1218 276.5h1M1240 276.5h1M1261 276.5h1M1283 276.5h1M1305 276.5h1M1326 276.5h1M1348 276.5h1M1369 276.5h1M1391 276.5h1M1413 276.5h1M1434 276.5h1M1456 276.5h1M1478 276.5h1M1499 276.5h1M1521 276.5h1M482 289.5h1M504 289.5h1M526 289.5h1M547 289.5h1M569 289.5h1M590 289.5h1M612 289.5h1M634 289.5h1M655 289.5h1M677 289.5h1M699 289.5h1M720 289.5h1M742 289.5h1M764 289.5h1M785 289.5h1M807 289.5h1M828 289.5h1M850 289.5h1M872 289.5h1M893 289.5h1M915 289.5h1M937 289.5h1M958 289.5h1M980 289.5h1M1002 289.5h1M1023 289.5h1M1045 289.5h1M1067 289.5h1M1088 289.5h1M1110 289.5h1M1131 289.5h1M1153 289.5h1M1175 289.5h1M1196 289.5h1M1218 289.5h1M1240 289.5h1M1261 289.5h1M1283 289.5h1M1305 289.5h1M1326 289.5h1M1348 289.5h1M1369 289.5h1M1391 289.5h1M1413 289.5h1M1434 289.5h1M1456 289.5h1M1478 289.5h1M1499 289.5h1M1521 289.5h1M482 302.5h1M504 302.5h1M526 302.5h1M547 302.5h1M569 302.5h1M590 302.5h1M612 302.5h1M634 302.5h1M655 302.5h1M677 302.5h1M699 302.5h1M720 302.5h1M742 302.5h1M764 302.5h1M785 302.5h1M807 302.5h1M828 302.5h1M850 302.5h1M872 302.5h1M893 302.5h1M915 302.5h1M937 302.5h1M958 302.5h1M980 302.5h1M1002 302.5h1M1023 302.5h1M1045 302.5h1M1067 302.5h1M1088 302.5h1M1110 302.5h1M1131 302.5h1M1153 302.5h1M1175 302.5h1M1196 302.5h1M1218 302.5h1M1240 302.5h1M1261 302.5h1M1283 302.5h1M1305 302.5h1M1326 302.5h1M1348 302.5h1M1369 302.5h1M1391 302.5h1M1413 302.5h1M1434 302.5h1M1456 302.5h1M1478 302.5h1M1499 302.5h1M1521 302.5h1M482 315.5h1M504 315.5h1M526 315.5h1M547 315.5h1M569 315.5h1M590 315.5h1M612 315.5h1M634 315.5h1M655 315.5h1M677 315.5h1M699 315.5h1M720 315.5h1M742 315.5h1M764 315.5h1M785 315.5h1M807 315.5h1M828 315.5h1M850 315.5h1M872 315.5h1M893 315.5h1M915 315.5h1M937 315.5h1M958 315.5h1M980 315.5h1M1002 315.5h1M1023 315.5h1M1045 315.5h1M1067 315.5h1M1088 315.5h1M1110 315.5h1M1131 315.5h1M1153 315.5h1M1175 315.5h1M1196 315.5h1M1218 315.5h1M1240 315.5h1M1261 315.5h1M1283 315.5h1M1305 315.5h1M1326 315.5h1M1348 315.5h1M1369 315.5h1M1391 315.5h1M1413 315.5h1M1434 315.5h1M1456 315.5h1M1478 315.5h1M1499 315.5h1M1521 315.5h1M482 329.5h1M504 329.5h1M526 329.5h1M547 329.5h1M569 329.5h1M590 329.5h1M612 329.5h1M634 329.5h1M655 329.5h1M677 329.5h1M699 329.5h1M720 329.5h1M742 329.5h1M764 329.5h1M785 329.5h1M807 329.5h1M828 329.5h1M850 329.5h1M872 329.5h1M893 329.5h1M915 329.5h1M937 329.5h1M958 329.5h1M980 329.5h1M1002 329.5h1M1023 329.5h1M1045 329.5h1M1067 329.5h1M1088 329.5h1M1110 329.5h1M1131 329.5h1M1153 329.5h1M1175 329.5h1M1196 329.5h1M1218 329.5h1M1240 329.5h1M1261 329.5h1M1283 329.5h1M1305 329.5h1M1326 329.5h1M1348 329.5h1M1369 329.5h1M1391 329.5h1M1413 329.5h1M1434 329.5h1M1456 329.5h1M1478 329.5h1M1499 329.5h1M1521 329.5h1M482 342.5h1M504 342.5h1M526 342.5h1M547 342.5h1M569 342.5h1M590 342.5h1M612 342.5h1M634 342.5h1M655 342.5h1M677 342.5h1M699 342.5h1M720 342.5h1M742 342.5h1M764 342.5h1M785 342.5h1M807 342.5h1M828 342.5h1M850 342.5h1M872 342.5h1M893 342.5h1M915 342.5h1M937 342.5h1M958 342.5h1M980 342.5h1M1002 342.5h1M1023 342.5h1M1045 342.5h1M1067 342.5h1M1088 342.5h1M1110 342.5h1M1131 342.5h1M1153 342.5h1M1175 342.5h1M1196 342.5h1M1218 342.5h1M1240 342.5h1M1261 342.5h1M1283 342.5h1M1305 342.5h1M1326 342.5h1M1348 342.5h1M1369 342.5h1M1391 342.5h1M1413 342.5h1M1434 342.5h1M1456 342.5h1M1478 342.5h1M1499 342.5h1M1521 342.5h1M482 355.5h1M504 355.5h1M526 355.5h1M547 355.5h1M569 355.5h1M590 355.5h1M612 355.5h1M634 355.5h1M655 355.5h1M677 355.5h1M699 355.5h1M720 355.5h1M742 355.5h1M764 355.5h1M785 355.5h1M807 355.5h1M828 355.5h1M850 355.5h1M872 355.5h1M893 355.5h1M915 355.5h1M937 355.5h1M958 355.5h1M980 355.5h1M1002 355.5h1M1023 355.5h1M1045 355.5h1M1067 355.5h1M1088 355.5h1M1110 355.5h1M1131 355.5h1M1153 355.5h1M1175 355.5h1M1196 355.5h1M1218 355.5h1M1240 355.5h1M1261 355.5h1M1283 355.5h1M1305 355.5h1M1326 355.5h1M1348 355.5h1M1369 355.5h1M1391 355.5h1M1413 355.5h1M1434 355.5h1M1456 355.5h1M1478 355.5h1M1499 355.5h1M1521 355.5h1M482 369.5h1M504 369.5h1M526 369.5h1M547 369.5h1M569 369.5h1M590 369.5h1M612 369.5h1M634 369.5h1M655 369.5h1M677 369.5h1M699 369.5h1M720 369.5h1M742 369.5h1M764 369.5h1M785 369.5h1M807 369.5h1M828 369.5h1M850 369.5h1M872 369.5h1M893 369.5h1M915 369.5h1M937 369.5h1M958 369.5h1M980 369.5h1M1002 369.5h1M1023 369.5h1M1045 369.5h1M1067 369.5h1M1088 369.5h1M1110 369.5h1M1131 369.5h1M1153 369.5h1M1175 369.5h1M1196 369.5h1M1218 369.5h1M1240 369.5h1M1261 369.5h1M1283 369.5h1M1305 369.5h1M1326 369.5h1M1348 369.5h1M1369 369.5h1M1391 369.5h1M1413 369.5h1M1434 369.5h1M1456 369.5h1M1478 369.5h1M1499 369.5h1M1521 369.5h1M482 382.5h1M504 382.5h1M526 382.5h1M547 382.5h1M569 382.5h1M590 382.5h1M612 382.5h1M634 382.5h1M655 382.5h1M677 382.5h1M699 382.5h1M720 382.5h1M742 382.5h1M764 382.5h1M785 382.5h1M807 382.5h1M828 382.5h1M850 382.5h1M872 382.5h1M893 382.5h1M915 382.5h1M937 382.5h1M958 382.5h1M980 382.5h1M1002 382.5h1M1023 382.5h1M1045 382.5h1M1067 382.5h1M1088 382.5h1M1110 382.5h1M1131 382.5h1M1153 382.5h1M1175 382.5h1M1196 382.5h1M1218 382.5h1M1240 382.5h1M1261 382.5h1M1283 382.5h1M1305 382.5h1M1326 382.5h1M1348 382.5h1M1369 382.5h1M1391 382.5h1M1413 382.5h1M1434 382.5h1M1456 382.5h1M1478 382.5h1M1499 382.5h1M1521 382.5h1M482 395.5h1M504 395.5h1M526 395.5h1M547 395.5h1M569 395.5h1M590 395.5h1M612 395.5h1M634 395.5h1M655 395.5h1M677 395.5h1M699 395.5h1M720 395.5h1M742 395.5h1M764 395.5h1M785 395.5h1M807 395.5h1M828 395.5h1M850 395.5h1M872 395.5h1M893 395.5h1M915 395.5h1M937 395.5h1M958 395.5h1M980 395.5h1M1002 395.5h1M1023 395.5h1M1045 395.5h1M1067 395.5h1M1088 395.5h1M1110 395.5h1M1131 395.5h1M1153 395.5h1M1175 395.5h1M1196 395.5h1M1218 395.5h1M1240 395.5h1M1261 395.5h1M1283 395.5h1M1305 395.5h1M1326 395.5h1M1348 395.5h1M1369 395.5h1M1391 395.5h1M1413 395.5h1M1434 395.5h1M1456 395.5h1M1478 395.5h1M1499 395.5h1M1521 395.5h1M482 408.5h1M504 408.5h1M526 408.5h1M547 408.5h1M569 408.5h1M590 408.5h1M612 408.5h1M634 408.5h1M655 408.5h1M677 408.5h1M699 408.5h1M720 408.5h1M742 408.5h1M764 408.5h1M785 408.5h1M807 408.5h1M828 408.5h1M850 408.5h1M872 408.5h1M893 408.5h1M915 408.5h1M937 408.5h1M958 408.5h1M980 408.5h1M1002 408.5h1M1023 408.5h1M1045 408.5h1M1067 408.5h1M1088 408.5h1M1110 408.5h1M1131 408.5h1M1153 408.5h1M1175 408.5h1M1196 408.5h1M1218 408.5h1M1240 408.5h1M1261 408.5h1M1283 408.5h1M1305 408.5h1M1326 408.5h1M1348 408.5h1M1369 408.5h1M1391 408.5h1M1413 408.5h1M1434 408.5h1M1456 408.5h1M1478 408.5h1M1499 408.5h1M1521 408.5h1M482 421.5h1M504 421.5h1M526 421.5h1M547 421.5h1M569 421.5h1M590 421.5h1M612 421.5h1M634 421.5h1M655 421.5h1M677 421.5h1M699 421.5h1M720 421.5h1M742 421.5h1M764 421.5h1M785 421.5h1M807 421.5h1M828 421.5h1M850 421.5h1M872 421.5h1M893 421.5h1M915 421.5h1M937 421.5h1M958 421.5h1M980 421.5h1M1002 421.5h1M1023 421.5h1M1045 421.5h1M1067 421.5h1M1088 421.5h1M1110 421.5h1M1131 421.5h1M1153 421.5h1M1175 421.5h1M1196 421.5h1M1218 421.5h1M1240 421.5h1M1261 421.5h1M1283 421.5h1M1305 421.5h1M1326 421.5h1M1348 421.5h1M1369 421.5h1M1391 421.5h1M1413 421.5h1M1434 421.5h1M1456 421.5h1M1478 421.5h1M1499 421.5h1M1521 421.5h1M482 435.5h1M504 435.5h1M526 435.5h1M547 435.5h1M569 435.5h1M590 435.5h1M612 435.5h1M634 435.5h1M655 435.5h1M677 435.5h1M699 435.5h1M720 435.5h1M742 435.5h1M764 435.5h1M785 435.5h1M807 435.5h1M828 435.5h1M850 435.5h1M872 435.5h1M893 435.5h1M915 435.5h1M937 435.5h1M958 435.5h1M980 435.5h1M1002 435.5h1M1023 435.5h1M1045 435.5h1M1067 435.5h1M1088 435.5h1M1110 435.5h1M1131 435.5h1M1153 435.5h1M1175 435.5h1M1196 435.5h1M1218 435.5h1M1240 435.5h1M1261 435.5h1M1283 435.5h1M1305 435.5h1M1326 435.5h1M1348 435.5h1M1369 435.5h1M1391 435.5h1M1413 435.5h1M1434 435.5h1M1456 435.5h1M1478 435.5h1M1499 435.5h1M1521 435.5h1M482 448.5h1M504 448.5h1M526 448.5h1M547 448.5h1M569 448.5h1M590 448.5h1M612 448.5h1M634 448.5h1M655 448.5h1M677 448.5h1M699 448.5h1M720 448.5h1M742 448.5h1M764 448.5h1M785 448.5h1M807 448.5h1M828 448.5h1M850 448.5h1M872 448.5h1M893 448.5h1M915 448.5h1M937 448.5h1M958 448.5h1M980 448.5h1M1002 448.5h1M1023 448.5h1M1045 448.5h1M1067 448.5h1M1088 448.5h1M1110 448.5h1M1131 448.5h1M1153 448.5h1M1175 448.5h1M1196 448.5h1M1218 448.5h1M1240 448.5h1M1261 448.5h1M1283 448.5h1M1305 448.5h1M1326 448.5h1M1348 448.5h1M1369 448.5h1M1391 448.5h1M1413 448.5h1M1434 448.5h1M1456 448.5h1M1478 448.5h1M1499 448.5h1M1521 448.5h1M482 465.5h1M504 465.5h1M526 465.5h1M547 465.5h1M569 465.5h1M590 465.5h1M612 465.5h1M634 465.5h1M655 465.5h1M677 465.5h1M699 465.5h1M720 465.5h1M742 465.5h1M764 465.5h1M785 465.5h1M807 465.5h1M828 465.5h1M850 465.5h1M872 465.5h1M893 465.5h1M915 465.5h1M937 465.5h1M958 465.5h1M980 465.5h1M1002 465.5h1M1023 465.5h1M1045 465.5h1M1067 465.5h1M1088 465.5h1M1110 465.5h1M1131 465.5h1M1153 465.5h1M1175 465.5h1M1196 465.5h1M1218 465.5h1M1240 465.5h1M1261 465.5h1M1283 465.5h1M1305 465.5h1M1326 465.5h1M1348 465.5h1M1369 465.5h1M1391 465.5h1M1413 465.5h1M1434 465.5h1M1456 465.5h1M1478 465.5h1M1499 465.5h1M1521 465.5h1M482 478.5h1M504 478.5h1M526 478.5h1M547 478.5h1M569 478.5h1M590 478.5h1M612 478.5h1M634 478.5h1M655 478.5h1M677 478.5h1M699 478.5h1M720 478.5h1M742 478.5h1M764 478.5h1M785 478.5h1M807 478.5h1M828 478.5h1M850 478.5h1M872 478.5h1M893 478.5h1M915 478.5h1M937 478.5h1M958 478.5h1M980 478.5h1M1002 478.5h1M1023 478.5h1M1045 478.5h1M1067 478.5h1M1088 478.5h1M1110 478.5h1M1131 478.5h1M1153 478.5h1M1175 478.5h1M1196 478.5h1M1218 478.5h1M1240 478.5h1M1261 478.5h1M1283 478.5h1M1305 478.5h1M1326 478.5h1M1348 478.5h1M1369 478.5h1M1391 478.5h1M1413 478.5h1M1434 478.5h1M1456 478.5h1M1478 478.5h1M1499 478.5h1M1521 478.5h1M482 491.5h1M504 491.5h1M526 491.5h1M547 491.5h1M569 491.5h1M590 491.5h1M612 491.5h1M634 491.5h1M655 491.5h1M677 491.5h1M699 491.5h1M720 491.5h1M742 491.5h1M764 491.5h1M785 491.5h1M807 491.5h1M828 491.5h1M850 491.5h1M872 491.5h1M893 491.5h1M915 491.5h1M937 491.5h1M958 491.5h1M980 491.5h1M1002 491.5h1M1023 491.5h1M1045 491.5h1M1067 491.5h1M1088 491.5h1M1110 491.5h1M1131 491.5h1M1153 491.5h1M1175 491.5h1M1196 491.5h1M1218 491.5h1M1240 491.5h1M1261 491.5h1M1283 491.5h1M1305 491.5h1M1326 491.5h1M1348 491.5h1M1369 491.5h1M1391 491.5h1M1413 491.5h1M1434 491.5h1M1456 491.5h1M1478 491.5h1M1499 491.5h1M1521 491.5h1M482 504.5h1M504 504.5h1M526 504.5h1M547 504.5h1M569 504.5h1M590 504.5h1M612 504.5h1M634 504.5h1M655 504.5h1M677 504.5h1M699 504.5h1M720 504.5h1M742 504.5h1M764 504.5h1M785 504.5h1M807 504.5h1M828 504.5h1M850 504.5h1M872 504.5h1M893 504.5h1M915 504.5h1M937 504.5h1M958 504.5h1M980 504.5h1M1002 504.5h1M1023 504.5h1M1045 504.5h1M1067 504.5h1M1088 504.5h1M1110 504.5h1M1131 504.5h1M1153 504.5h1M1175 504.5h1M1196 504.5h1M1218 504.5h1M1240 504.5h1M1261 504.5h1M1283 504.5h1M1305 504.5h1M1326 504.5h1M1348 504.5h1M1369 504.5h1M1391 504.5h1M1413 504.5h1M1434 504.5h1M1456 504.5h1M1478 504.5h1M1499 504.5h1M1521 504.5h1M482 518.5h1M504 518.5h1M526 518.5h1M547 518.5h1M569 518.5h1M590 518.5h1M612 518.5h1M634 518.5h1M655 518.5h1M677 518.5h1M699 518.5h1M720 518.5h1M742 518.5h1M764 518.5h1M785 518.5h1M807 518.5h1M828 518.5h1M850 518.5h1M872 518.5h1M893 518.5h1M915 518.5h1M937 518.5h1M958 518.5h1M980 518.5h1M1002 518.5h1M1023 518.5h1M1045 518.5h1M1067 518.5h1M1088 518.5h1M1110 518.5h1M1131 518.5h1M1153 518.5h1M1175 518.5h1M1196 518.5h1M1218 518.5h1M1240 518.5h1M1261 518.5h1M1283 518.5h1M1305 518.5h1M1326 518.5h1M1348 518.5h1M1369 518.5h1M1391 518.5h1M1413 518.5h1M1434 518.5h1M1456 518.5h1M1478 518.5h1M1499 518.5h1M1521 518.5h1M482 531.5h1M504 531.5h1M526 531.5h1M547 531.5h1M569 531.5h1M590 531.5h1M612 531.5h1M634 531.5h1M655 531.5h1M677 531.5h1M699 531.5h1M720 531.5h1M742 531.5h1M764 531.5h1M785 531.5h1M807 531.5h1M828 531.5h1M850 531.5h1M872 531.5h1M893 531.5h1M915 531.5h1M937 531.5h1M958 531.5h1M980 531.5h1M1002 531.5h1M1023 531.5h1M1045 531.5h1M1067 531.5h1M1088 531.5h1M1110 531.5h1M1131 531.5h1M1153 531.5h1M1175 531.5h1M1196 531.5h1M1218 531.5h1M1240 531.5h1M1261 531.5h1M1283 531.5h1M1305 531.5h1M1326 531.5h1M1348 531.5h1M1369 531.5h1M1391 531.5h1M1413 531.5h1M1434 531.5h1M1456 531.5h1M1478 531.5h1M1499 531.5h1M1521 531.5h1M482 544.5h1M504 544.5h1M526 544.5h1M547 544.5h1M569 544.5h1M590 544.5h1M612 544.5h1M634 544.5h1M655 544.5h1M677 544.5h1M699 544.5h1M720 544.5h1M742 544.5h1M764 544.5h1M785 544.5h1M807 544.5h1M828 544.5h1M850 544.5h1M872 544.5h1M893 544.5h1M915 544.5h1M937 544.5h1M958 544.5h1M980 544.5h1M1002 544.5h1M1023 544.5h1M1045 544.5h1M1067 544.5h1M1088 544.5h1M1110 544.5h1M1131 544.5h1M1153 544.5h1M1175 544.5h1M1196 544.5h1M1218 544.5h1M1240 544.5h1M1261 544.5h1M1283 544.5h1M1305 544.5h1M1326 544.5h1M1348 544.5h1M1369 544.5h1M1391 544.5h1M1413 544.5h1M1434 544.5h1M1456 544.5h1M1478 544.5h1M1499 544.5h1M1521 544.5h1M482 557.5h1M504 557.5h1M526 557.5h1M547 557.5h1M569 557.5h1M590 557.5h1M612 557.5h1M634 557.5h1M655 557.5h1M677 557.5h1M699 557.5h1M720 557.5h1M742 557.5h1M764 557.5h1M785 557.5h1M807 557.5h1M828 557.5h1M850 557.5h1M872 557.5h1M893 557.5h1M915 557.5h1M937 557.5h1M958 557.5h1M980 557.5h1M1002 557.5h1M1023 557.5h1M1045 557.5h1M1067 557.5h1M1088 557.5h1M1110 557.5h1M1131 557.5h1M1153 557.5h1M1175 557.5h1M1196 557.5h1M1218 557.5h1M1240 557.5h1M1261 557.5h1M1283 557.5h1M1305 557.5h1M1326 557.5h1M1348 557.5h1M1369 557.5h1M1391 557.5h1M1413 557.5h1M1434 557.5h1M1456 557.5h1M1478 557.5h1M1499 557.5h1M1521 557.5h1M482 571.5h1M504 571.5h1M526 571.5h1M547 571.5h1M569 571.5h1M590 571.5h1M612 571.5h1M634 571.5h1M655 571.5h1M677 571.5h1M699 571.5h1M720 571.5h1M742 571.5h1M764 571.5h1M785 571.5h1M807 571.5h1M828 571.5h1M850 571.5h1M872 571.5h1M893 571.5h1M915 571.5h1M937 571.5h1M958 571.5h1M980 571.5h1M1002 571.5h1M1023 571.5h1M1045 571.5h1M1067 571.5h1M1088 571.5h1M1110 571.5h1M1131 571.5h1M1153 571.5h1M1175 571.5h1M1196 571.5h1M1218 571.5h1M1240 571.5h1M1261 571.5h1M1283 571.5h1M1305 571.5h1M1326 571.5h1M1348 571.5h1M1369 571.5h1M1391 571.5h1M1413 571.5h1M1434 571.5h1M1456 571.5h1M1478 571.5h1M1499 571.5h1M1521 571.5h1M482 584.5h1M504 584.5h1M526 584.5h1M547 584.5h1M569 584.5h1M590 584.5h1M612 584.5h1M634 584.5h1M655 584.5h1M677 584.5h1M699 584.5h1M720 584.5h1M742 584.5h1M764 584.5h1M785 584.5h1M807 584.5h1M828 584.5h1M850 584.5h1M872 584.5h1M893 584.5h1M915 584.5h1M937 584.5h1M958 584.5h1M980 584.5h1M1002 584.5h1M1023 584.5h1M1045 584.5h1M1067 584.5h1M1088 584.5h1M1110 584.5h1M1131 584.5h1M1153 584.5h1M1175 584.5h1M1196 584.5h1M1218 584.5h1M1240 584.5h1M1261 584.5h1M1283 584.5h1M1305 584.5h1M1326 584.5h1M1348 584.5h1M1369 584.5h1M1391 584.5h1M1413 584.5h1M1434 584.5h1M1456 584.5h1M1478 584.5h1M1499 584.5h1M1521 584.5h1" stroke="#b4b4b4" stroke-width="1" fill="none" shape-rendering="crispEdges"/><path d="M461.5 58V722" stroke="#a8a8a8" stroke-width="1" stroke-dasharray="1 1.6" fill="none" shape-rendering="crispEdges"/><path d="M677.5 58V722" stroke="#a8a8a8" stroke-width="1" stroke-dasharray="1 1.6" fill="none" shape-rendering="crispEdges"/><path d="M785.5 58V722" stroke="#a8a8a8" stroke-width="1" stroke-dasharray="1 1.6" fill="none" shape-rendering="crispEdges"/><path d="M893.5 58V722" stroke="#a8a8a8" stroke-width="1" stroke-dasharray="1 1.6" fill="none" shape-rendering="crispEdges"/><path d="M1002.5 58V722" stroke="#a8a8a8" stroke-width="1" stroke-dasharray="1 1.6" fill="none" shape-rendering="crispEdges"/><path d="M1110.5 58V722" stroke="#a8a8a8" stroke-width="1" stroke-dasharray="1 1.6" fill="none" shape-rendering="crispEdges"/><path d="M1218.5 58V722" stroke="#a8a8a8" stroke-width="1" stroke-dasharray="1 1.6" fill="none" shape-rendering="crispEdges"/><path d="M1326.5 58V722" stroke="#a8a8a8" stroke-width="1" stroke-dasharray="1 1.6" fill="none" shape-rendering="crispEdges"/><path d="M1434.5 58V722" stroke="#a8a8a8" stroke-width="1" stroke-dasharray="1 1.6" fill="none" shape-rendering="crispEdges"/><path d="M1543.5 58V722" stroke="#a8a8a8" stroke-width="1" stroke-dasharray="1 1.6" fill="none" shape-rendering="crispEdges"/><path d="M461.5 58V722" stroke="#c8c8c8" stroke-width="1" stroke-dasharray="1 1.6" fill="none" shape-rendering="crispEdges"/><rect x="462" y="92.6" width="1081.5" height="4.1" fill="#fbf000"/><path d="M466.0 94h3.0V159.4h-3.0zM470.0 94h5.0V159.4h-5.0zM476.0 94h4.0V159.4h-4.0zM481.0 94h2.0V159.4h-2.0zM484.0 94h2.0V159.4h-2.0zM487.0 94h2.0V159.4h-2.0zM490.0 94h4.0V159.4h-4.0zM495.0 94h2.0V159.4h-2.0zM498.0 94h5.0V159.4h-5.0zM509.0 94h3.0V159.4h-3.0zM517.0 94h6.0V159.4h-6.0zM524.0 94h6.0V159.4h-6.0zM531.0 94h2.0V159.4h-2.0zM534.0 94h3.0V159.4h-3.0zM538.0 94h2.0V159.4h-2.0zM541.0 94h5.0V159.4h-5.0zM547.0 94h4.0V159.4h-4.0zM552.0 94h2.0V159.4h-2.0zM568.0 94h5.0V159.4h-5.0zM574.0 94h3.0V159.4h-3.0zM578.0 94h4.0V159.4h-4.0zM583.0 94h5.0V159.4h-5.0zM589.0 94h3.0V159.4h-3.0zM593.0 94h4.0V159.4h-4.0zM598.0 94h5.0V159.4h-5.0zM604.0 94h6.0V159.4h-6.0zM611.0 94h1.0V159.4h-1.0zM620.0 94h2.0V159.4h-2.0zM623.0 94h2.0V159.4h-2.0zM626.0 94h5.0V159.4h-5.0zM632.0 94h6.0V159.4h-6.0zM639.0 94h5.0V159.4h-5.0zM645.0 94h4.0V159.4h-4.0zM650.0 94h6.0V159.4h-6.0zM657.0 94h1.0V159.4h-1.0zM671.0 94h2.0V159.4h-2.0zM674.0 94h5.0V159.4h-5.0zM680.0 94h6.0V159.4h-6.0zM687.0 94h3.0V159.4h-3.0zM691.0 94h2.0V159.4h-2.0zM694.0 94h2.0V159.4h-2.0zM697.0 94h2.0V159.4h-2.0zM700.0 94h2.0V159.4h-2.0zM703.0 94h4.0V159.4h-4.0zM708.0 94h2.0V159.4h-2.0zM711.0 94h2.0V159.4h-2.0zM723.0 94h6.0V159.4h-6.0zM730.0 94h3.0V159.4h-3.0zM734.0 94h3.0V159.4h-3.0zM738.0 94h6.0V159.4h-6.0zM745.0 94h2.0V159.4h-2.0zM748.0 94h3.0V159.4h-3.0zM752.0 94h4.0V159.4h-4.0zM757.0 94h2.0V159.4h-2.0zM760.0 94h1.0V159.4h-1.0zM774.0 94h6.0V159.4h-6.0zM781.0 94h4.0V159.4h-4.0zM786.0 94h5.0V159.4h-5.0zM792.0 94h6.0V159.4h-6.0zM799.0 94h6.0V159.4h-6.0zM806.0 94h4.0V159.4h-4.0zM811.0 94h2.0V159.4h-2.0zM826.0 94h2.0V159.4h-2.0zM829.0 94h3.0V159.4h-3.0zM833.0 94h3.0V159.4h-3.0zM837.0 94h2.0V159.4h-2.0zM840.0 94h2.0V159.4h-2.0zM843.0 94h2.0V159.4h-2.0zM846.0 94h5.0V159.4h-5.0zM852.0 94h3.0V159.4h-3.0zM856.0 94h3.0V159.4h-3.0zM860.0 94h4.0V159.4h-4.0zM877.0 94h4.0V159.4h-4.0zM882.0 94h2.0V159.4h-2.0zM885.0 94h3.0V159.4h-3.0zM889.0 94h6.0V159.4h-6.0zM896.0 94h2.0V159.4h-2.0zM899.0 94h4.0V159.4h-4.0zM904.0 94h4.0V159.4h-4.0zM909.0 94h4.0V159.4h-4.0zM914.0 94h1.0V159.4h-1.0zM924.0 94h3.0V159.4h-3.0zM928.0 94h2.0V159.4h-2.0zM931.0 94h4.0V159.4h-4.0zM936.0 94h3.0V159.4h-3.0zM940.0 94h6.0V159.4h-6.0zM947.0 94h6.0V159.4h-6.0zM954.0 94h6.0V159.4h-6.0zM961.0 94h3.0V159.4h-3.0zM965.0 94h2.0V159.4h-2.0zM980.0 94h2.0V159.4h-2.0zM983.0 94h3.0V159.4h-3.0zM987.0 94h6.0V159.4h-6.0zM994.0 94h6.0V159.4h-6.0zM1001.0 94h6.0V159.4h-6.0zM1008.0 94h3.0V159.4h-3.0zM1012.0 94h3.0V159.4h-3.0zM1016.0 94h2.0V159.4h-2.0zM1024.0 94h3.0V159.4h-3.0zM1032.0 94h5.0V159.4h-5.0zM1038.0 94h2.0V159.4h-2.0zM1041.0 94h6.0V159.4h-6.0zM1048.0 94h5.0V159.4h-5.0zM1054.0 94h2.0V159.4h-2.0zM1057.0 94h3.0V159.4h-3.0zM1061.0 94h6.0V159.4h-6.0zM1068.0 94h2.0V159.4h-2.0zM1083.0 94h5.0V159.4h-5.0zM1089.0 94h2.0V159.4h-2.0zM1092.0 94h6.0V159.4h-6.0zM1099.0 94h2.0V159.4h-2.0zM1102.0 94h6.0V159.4h-6.0zM1109.0 94h3.0V159.4h-3.0zM1113.0 94h2.0V159.4h-2.0zM1116.0 94h6.0V159.4h-6.0zM1123.0 94h1.0V159.4h-1.0zM1124.0 94h3.0V159.4h-3.0zM1135.0 94h6.0V159.4h-6.0zM1142.0 94h3.0V159.4h-3.0zM1146.0 94h3.0V159.4h-3.0zM1150.0 94h3.0V159.4h-3.0zM1154.0 94h2.0V159.4h-2.0zM1157.0 94h3.0V159.4h-3.0zM1161.0 94h4.0V159.4h-4.0zM1166.0 94h4.0V159.4h-4.0zM1171.0 94h2.0V159.4h-2.0zM1186.0 94h4.0V159.4h-4.0zM1191.0 94h4.0V159.4h-4.0zM1196.0 94h2.0V159.4h-2.0zM1199.0 94h2.0V159.4h-2.0zM1202.0 94h5.0V159.4h-5.0zM1208.0 94h3.0V159.4h-3.0zM1212.0 94h4.0V159.4h-4.0zM1217.0 94h2.0V159.4h-2.0zM1220.0 94h3.0V159.4h-3.0zM1224.0 94h4.0V159.4h-4.0zM1238.0 94h4.0V159.4h-4.0zM1243.0 94h5.0V159.4h-5.0zM1254.0 94h5.0V159.4h-5.0zM1260.0 94h4.0V159.4h-4.0zM1265.0 94h4.0V159.4h-4.0zM1270.0 94h4.0V159.4h-4.0zM1275.0 94h5.0V159.4h-5.0zM1293.0 94h6.0V159.4h-6.0zM1300.0 94h4.0V159.4h-4.0zM1305.0 94h6.0V159.4h-6.0zM1312.0 94h2.0V159.4h-2.0zM1315.0 94h2.0V159.4h-2.0zM1318.0 94h2.0V159.4h-2.0zM1321.0 94h5.0V159.4h-5.0zM1327.0 94h2.0V159.4h-2.0zM1330.0 94h1.0V159.4h-1.0zM1344.0 94h6.0V159.4h-6.0zM1351.0 94h3.0V159.4h-3.0zM1355.0 94h4.0V159.4h-4.0zM1360.0 94h6.0V159.4h-6.0zM1367.0 94h2.0V159.4h-2.0zM1370.0 94h4.0V159.4h-4.0zM1375.0 94h3.0V159.4h-3.0zM1379.0 94h4.0V159.4h-4.0zM1396.0 94h4.0V159.4h-4.0zM1401.0 94h2.0V159.4h-2.0zM1404.0 94h5.0V159.4h-5.0zM1410.0 94h2.0V159.4h-2.0zM1413.0 94h5.0V159.4h-5.0zM1419.0 94h2.0V159.4h-2.0zM1422.0 94h2.0V159.4h-2.0zM1425.0 94h3.0V159.4h-3.0zM1429.0 94h4.0V159.4h-4.0zM1442.0 94h6.0V159.4h-6.0zM1449.0 94h2.0V159.4h-2.0zM1452.0 94h4.0V159.4h-4.0zM1457.0 94h2.0V159.4h-2.0zM1460.0 94h5.0V159.4h-5.0zM1466.0 94h2.0V159.4h-2.0zM1469.0 94h5.0V159.4h-5.0zM1475.0 94h2.0V159.4h-2.0zM1478.0 94h2.0V159.4h-2.0zM1481.0 94h4.0V159.4h-4.0zM1499.0 94h4.0V159.4h-4.0zM1504.0 94h3.0V159.4h-3.0zM1508.0 94h4.0V159.4h-4.0zM1513.0 94h2.0V159.4h-2.0zM1516.0 94h2.0V159.4h-2.0zM1519.0 94h3.0V159.4h-3.0zM1523.0 94h5.0V159.4h-5.0zM1529.0 94h4.0V159.4h-4.0zM1534.0 94h3.0V159.4h-3.0zM1542.0 94h2.0V159.4h-2.0z" fill="#f8ee00" shape-rendering="crispEdges"/><path d="M470.4 159.4v5.3M472.5 159.4v12.9M478.2 159.4v4.6M484.2 159.4v4.4M488.1 159.4v7.9M494.1 159.4v6.2M495.8 159.4v6.9M496.3 159.4v2.4M497.3 159.4v5.1M503.4 159.4v7.2M509.9 159.4v3.8M510.5 159.4v4.7M529.0 159.4v5.3M540.2 159.4v3.9M540.2 159.4v4.3M542.6 159.4v3.2M542.6 159.4v6.1M544.3 159.4v3.8M545.5 159.4v3.4M548.0 159.4v6.5M552.2 159.4v7.3M553.5 159.4v13.4M571.9 159.4v2.3M579.4 159.4v5.8M584.9 159.4v2.8M587.3 159.4v7.0M593.1 159.4v5.5M596.9 159.4v6.2M597.0 159.4v2.8M597.4 159.4v7.0M600.7 159.4v5.8M602.9 159.4v2.0M607.5 159.4v5.0M611.1 159.4v2.4M620.3 159.4v3.6M621.0 159.4v6.4M623.3 159.4v4.3M627.1 159.4v6.6M630.6 159.4v4.2M631.5 159.4v6.5M634.3 159.4v3.5M635.4 159.4v6.0M639.1 159.4v3.7M641.2 159.4v8.2M648.7 159.4v3.2M657.9 159.4v2.1M682.5 159.4v4.7M683.3 159.4v7.7M686.2 159.4v2.9M696.3 159.4v2.8M698.7 159.4v7.3M699.6 159.4v7.4M699.7 159.4v2.0M701.7 159.4v6.5M703.1 159.4v3.9M703.1 159.4v6.5M703.5 159.4v7.6M711.2 159.4v3.7M712.9 159.4v8.0M724.9 159.4v6.2M725.2 159.4v7.0M734.4 159.4v3.5M736.7 159.4v3.1M747.2 159.4v7.3M750.5 159.4v7.5M753.1 159.4v10.7M757.5 159.4v4.7M761.0 159.4v6.3M774.5 159.4v4.8M775.6 159.4v6.4M776.6 159.4v5.9M779.4 159.4v4.4M779.9 159.4v3.2M782.2 159.4v3.3M801.1 159.4v8.0M801.8 159.4v2.5M802.1 159.4v3.4M804.9 159.4v7.3M806.7 159.4v4.5M808.3 159.4v6.8M809.3 159.4v13.3M811.7 159.4v5.8M812.5 159.4v3.6M828.0 159.4v7.7M834.8 159.4v3.6M839.0 159.4v7.4M841.9 159.4v2.0M850.6 159.4v7.0M862.6 159.4v5.9M863.1 159.4v5.1M881.3 159.4v5.9M883.3 159.4v9.0M888.4 159.4v3.4M891.8 159.4v6.5M892.8 159.4v5.8M893.2 159.4v2.4M896.1 159.4v4.3M899.2 159.4v2.1M901.2 159.4v7.8M908.4 159.4v4.9M909.4 159.4v7.8M910.6 159.4v2.1M914.3 159.4v4.5M932.6 159.4v5.7M934.0 159.4v4.5M934.8 159.4v6.8M937.1 159.4v3.2M938.3 159.4v6.9M939.2 159.4v6.6M949.3 159.4v5.0M950.1 159.4v4.5M960.0 159.4v2.9M960.8 159.4v13.3M961.0 159.4v2.4M987.2 159.4v6.4M996.1 159.4v4.0M1005.3 159.4v11.0M1008.9 159.4v4.3M1010.2 159.4v5.1M1011.3 159.4v4.1M1011.8 159.4v7.8M1013.3 159.4v6.9M1015.1 159.4v2.3M1016.7 159.4v7.5M1032.1 159.4v4.5M1037.0 159.4v3.8M1037.2 159.4v7.5M1041.8 159.4v7.4M1042.8 159.4v7.7M1043.8 159.4v6.3M1044.9 159.4v2.0M1053.2 159.4v5.8M1053.3 159.4v3.4M1063.7 159.4v7.7M1064.7 159.4v4.6M1083.7 159.4v6.8M1089.4 159.4v6.6M1090.8 159.4v3.9M1095.8 159.4v2.5M1100.5 159.4v5.9M1100.6 159.4v5.3M1113.7 159.4v7.3M1114.7 159.4v4.3M1117.0 159.4v6.3M1117.9 159.4v4.5M1121.7 159.4v6.5M1124.9 159.4v7.0M1136.6 159.4v6.4M1137.5 159.4v3.5M1144.7 159.4v5.5M1146.4 159.4v8.0M1147.2 159.4v6.9M1162.9 159.4v2.6M1168.6 159.4v7.0M1168.8 159.4v6.4M1169.5 159.4v7.8M1187.6 159.4v7.2M1188.6 159.4v6.7M1188.9 159.4v5.6M1189.7 159.4v7.2M1190.5 159.4v3.5M1194.0 159.4v5.5M1195.3 159.4v6.1M1196.6 159.4v3.2M1199.2 159.4v4.0M1200.9 159.4v5.3M1201.2 159.4v3.0M1203.0 159.4v3.7M1213.2 159.4v3.9M1214.7 159.4v4.5M1239.5 159.4v3.2M1240.3 159.4v2.0M1242.1 159.4v6.9M1256.1 159.4v5.1M1258.7 159.4v5.8M1259.0 159.4v5.7M1261.4 159.4v2.9M1263.8 159.4v12.8M1266.1 159.4v6.8M1266.8 159.4v2.8M1279.2 159.4v8.3M1294.6 159.4v7.4M1300.4 159.4v3.0M1301.3 159.4v4.4M1307.2 159.4v3.1M1308.9 159.4v5.1M1309.3 159.4v3.5M1316.9 159.4v2.2M1321.6 159.4v2.2M1322.0 159.4v5.6M1325.3 159.4v3.8M1328.2 159.4v4.6M1330.2 159.4v7.9M1346.2 159.4v3.4M1351.3 159.4v4.7M1353.4 159.4v4.5M1355.3 159.4v2.6M1357.7 159.4v2.2M1358.0 159.4v6.4M1360.4 159.4v2.3M1361.9 159.4v13.1M1368.4 159.4v8.0M1374.0 159.4v3.2M1376.3 159.4v7.7M1376.9 159.4v6.7M1377.1 159.4v4.1M1377.7 159.4v7.4M1396.5 159.4v5.0M1397.3 159.4v3.6M1398.6 159.4v2.2M1399.2 159.4v7.6M1406.7 159.4v3.0M1407.1 159.4v5.2M1408.6 159.4v7.2M1411.5 159.4v12.4M1428.0 159.4v5.8M1433.3 159.4v3.6M1443.5 159.4v6.6M1444.1 159.4v11.0M1449.9 159.4v3.5M1463.6 159.4v5.5M1464.9 159.4v3.4M1465.4 159.4v5.7M1467.8 159.4v12.5M1468.7 159.4v10.1M1468.7 159.4v7.0M1470.2 159.4v3.3M1473.1 159.4v3.2M1475.3 159.4v2.8M1476.2 159.4v4.9M1479.6 159.4v7.2M1481.3 159.4v6.1M1484.8 159.4v5.4M1501.0 159.4v7.6M1501.9 159.4v12.6M1504.4 159.4v4.4M1504.6 159.4v11.3M1507.3 159.4v13.0M1508.0 159.4v5.6M1511.5 159.4v6.9M1512.7 159.4v6.5M1520.0 159.4v6.7M1520.1 159.4v7.1M1522.1 159.4v6.5M1523.0 159.4v2.6M1523.1 159.4v4.0M1527.1 159.4v7.1M1528.1 159.4v5.3M1533.3 159.4v5.1M1536.7 159.4v7.8M1541.6 159.4v3.6" stroke="#c8bc00" stroke-width="0.9" fill="none"/><path d="M477.6 92.6v-1.0M486.1 92.6v-0.6M495.6 92.6v-0.9M500.0 92.6v-1.2M524.8 92.6v-0.7M528.2 92.6v-0.6M532.1 92.6v-0.4M532.7 92.6v-0.6M543.3 92.6v-1.0M543.4 92.6v-0.3M547.4 92.6v-0.9M547.7 92.6v-0.8M554.5 92.6v-1.0M554.8 92.6v-1.1M569.0 92.6v-0.8M569.1 92.6v-1.1M573.1 92.6v-1.0M574.5 92.6v-0.7M580.1 92.6v-0.5M582.3 92.6v-0.3M583.7 92.6v-0.9M585.2 92.6v-1.2M592.8 92.6v-1.5M595.0 92.6v-0.7M596.7 92.6v-0.9M597.7 92.6v-1.8M604.5 92.6v-0.8M605.4 92.6v-1.0M605.4 92.6v-0.7M611.8 92.6v-0.5M627.1 92.6v-0.5M628.5 92.6v-0.5M631.2 92.6v-0.4M631.6 92.6v-1.0M637.7 92.6v-0.9M639.8 92.6v-0.7M640.2 92.6v-1.9M641.1 92.6v-0.5M643.9 92.6v-0.6M644.9 92.6v-0.7M650.5 92.6v-1.0M652.3 92.6v-0.6M675.3 92.6v-1.0M677.7 92.6v-1.0M678.2 92.6v-0.7M679.3 92.6v-0.5M684.1 92.6v-1.1M684.8 92.6v-0.5M687.8 92.6v-0.4M688.6 92.6v-1.2M689.0 92.6v-2.0M691.0 92.6v-1.2M696.3 92.6v-0.7M700.3 92.6v-0.4M702.3 92.6v-0.3M708.6 92.6v-0.9M712.6 92.6v-1.2M725.1 92.6v-1.0M727.3 92.6v-0.8M729.5 92.6v-0.5M738.0 92.6v-1.0M745.6 92.6v-0.9M748.1 92.6v-0.6M748.5 92.6v-0.7M753.5 92.6v-0.9M755.7 92.6v-0.7M757.8 92.6v-0.9M758.6 92.6v-0.9M760.6 92.6v-0.7M760.7 92.6v-0.8M785.3 92.6v-1.3M788.7 92.6v-0.8M791.6 92.6v-0.9M794.5 92.6v-0.7M795.5 92.6v-0.9M801.2 92.6v-0.4M803.0 92.6v-0.4M805.0 92.6v-0.3M807.2 92.6v-0.9M808.4 92.6v-0.5M829.0 92.6v-0.5M831.0 92.6v-0.8M837.0 92.6v-1.0M839.5 92.6v-0.8M852.8 92.6v-0.6M859.6 92.6v-1.0M861.0 92.6v-1.3M878.8 92.6v-1.1M880.6 92.6v-0.5M881.5 92.6v-0.3M882.8 92.6v-0.5M885.4 92.6v-0.7M889.7 92.6v-0.6M897.4 92.6v-0.4M906.9 92.6v-1.7M914.0 92.6v-1.5M914.0 92.6v-1.2M924.4 92.6v-0.4M930.4 92.6v-0.6M939.8 92.6v-1.0M948.7 92.6v-0.8M953.1 92.6v-1.1M960.4 92.6v-0.5M963.4 92.6v-1.0M983.2 92.6v-0.5M983.8 92.6v-1.3M986.4 92.6v-0.4M989.1 92.6v-0.8M989.1 92.6v-1.1M992.4 92.6v-0.9M994.3 92.6v-0.7M994.6 92.6v-0.9M994.8 92.6v-0.8M1005.5 92.6v-0.6M1008.3 92.6v-0.7M1008.5 92.6v-0.9M1010.1 92.6v-1.1M1012.7 92.6v-0.8M1013.7 92.6v-0.7M1016.9 92.6v-1.0M1026.1 92.6v-0.8M1046.8 92.6v-0.9M1048.4 92.6v-0.6M1051.9 92.6v-0.9M1052.1 92.6v-1.0M1055.2 92.6v-0.3M1055.2 92.6v-0.5M1059.0 92.6v-0.9M1068.6 92.6v-0.9M1087.8 92.6v-0.8M1088.7 92.6v-0.9M1094.5 92.6v-0.4M1094.6 92.6v-1.0M1098.9 92.6v-0.6M1105.1 92.6v-0.8M1106.5 92.6v-0.7M1108.8 92.6v-0.9M1109.0 92.6v-1.4M1109.5 92.6v-1.0M1119.5 92.6v-1.2M1121.5 92.6v-0.8M1137.1 92.6v-0.4M1138.1 92.6v-0.7M1138.1 92.6v-1.6M1151.7 92.6v-0.4M1152.2 92.6v-0.3M1153.3 92.6v-1.0M1153.5 92.6v-1.0M1161.3 92.6v-1.6M1165.2 92.6v-0.9M1187.2 92.6v-1.2M1187.2 92.6v-0.3M1194.0 92.6v-0.4M1199.2 92.6v-0.4M1201.9 92.6v-0.4M1205.3 92.6v-0.7M1206.0 92.6v-1.0M1210.1 92.6v-0.9M1212.1 92.6v-1.0M1218.2 92.6v-0.8M1218.4 92.6v-1.2M1225.5 92.6v-0.6M1245.1 92.6v-0.8M1247.4 92.6v-1.1M1257.7 92.6v-1.1M1259.0 92.6v-0.3M1261.2 92.6v-0.8M1269.9 92.6v-0.3M1276.6 92.6v-1.1M1277.9 92.6v-1.1M1302.8 92.6v-1.0M1306.0 92.6v-1.0M1311.6 92.6v-1.1M1315.3 92.6v-0.9M1316.2 92.6v-0.5M1322.5 92.6v-1.2M1329.1 92.6v-1.0M1353.1 92.6v-1.1M1355.7 92.6v-0.8M1356.5 92.6v-0.5M1358.3 92.6v-0.8M1361.2 92.6v-0.7M1397.9 92.6v-0.4M1404.1 92.6v-0.4M1405.8 92.6v-1.3M1405.9 92.6v-1.2M1408.6 92.6v-0.8M1414.6 92.6v-0.7M1420.4 92.6v-1.0M1421.6 92.6v-0.3M1422.4 92.6v-0.6M1425.7 92.6v-1.1M1451.6 92.6v-0.4M1453.7 92.6v-0.4M1454.8 92.6v-0.8M1467.4 92.6v-0.9M1469.8 92.6v-0.4M1500.0 92.6v-0.3M1501.7 92.6v-1.1M1509.0 92.6v-0.3M1513.9 92.6v-0.9M1514.2 92.6v-0.4M1525.4 92.6v-0.9M1529.0 92.6v-1.7M1530.5 92.6v-0.9M1533.2 92.6v-0.5M1533.8 92.6v-1.5M1542.4 92.6v-0.3M1543.4 92.6v-1.1" stroke="#d8cc00" stroke-width="0.9" fill="none"/><rect x="462" y="205.6" width="1081.5" height="4.2" fill="#22ccd4"/><path d="M466.0 207h3.0V286.9h-3.0zM470.0 207h9.0V288.5h-9.0zM480.0 207h5.0V286.5h-5.0zM486.0 207h6.0V287.6h-6.0zM493.0 207h4.0V285.4h-4.0zM498.0 207h6.0V285.8h-6.0zM509.0 207h3.0V286.8h-3.0zM517.0 207h4.0V288.5h-4.0zM522.0 207h4.0V287.1h-4.0zM527.0 207h8.0V285.6h-8.0zM536.0 207h3.0V288.7h-3.0zM540.0 207h4.0V287.1h-4.0zM545.0 207h4.0V286.0h-4.0zM550.0 207h5.0V289.1h-5.0zM568.0 207h3.0V286.3h-3.0zM572.0 207h3.0V288.0h-3.0zM576.0 207h9.0V285.3h-9.0zM586.0 207h5.0V285.7h-5.0zM592.0 207h8.0V287.3h-8.0zM601.0 207h5.0V288.8h-5.0zM607.0 207h5.0V285.7h-5.0zM620.0 207h8.0V288.0h-8.0zM629.0 207h3.0V285.5h-3.0zM633.0 207h6.0V286.3h-6.0zM640.0 207h6.0V288.0h-6.0zM647.0 207h6.0V286.0h-6.0zM654.0 207h4.0V286.8h-4.0zM671.0 207h3.0V288.4h-3.0zM675.0 207h8.0V288.6h-8.0zM684.0 207h3.0V288.7h-3.0zM688.0 207h8.0V286.2h-8.0zM697.0 207h8.0V286.6h-8.0zM706.0 207h5.0V287.5h-5.0zM712.0 207h1.0V286.9h-1.0zM723.0 207h3.0V288.0h-3.0zM727.0 207h8.0V286.5h-8.0zM736.0 207h5.0V288.1h-5.0zM742.0 207h8.0V288.9h-8.0zM751.0 207h6.0V287.3h-6.0zM758.0 207h3.0V289.0h-3.0zM774.0 207h4.0V285.6h-4.0zM779.0 207h8.0V285.3h-8.0zM788.0 207h7.0V286.0h-7.0zM796.0 207h6.0V287.4h-6.0zM803.0 207h7.0V285.6h-7.0zM811.0 207h2.0V285.4h-2.0zM826.0 207h6.0V287.2h-6.0zM833.0 207h3.0V286.8h-3.0zM837.0 207h6.0V288.6h-6.0zM844.0 207h6.0V288.1h-6.0zM851.0 207h8.0V288.9h-8.0zM860.0 207h4.0V288.5h-4.0zM877.0 207h5.0V288.9h-5.0zM883.0 207h5.0V286.1h-5.0zM889.0 207h5.0V289.0h-5.0zM895.0 207h8.0V288.4h-8.0zM904.0 207h3.0V287.2h-3.0zM908.0 207h7.0V286.2h-7.0zM924.0 207h7.0V286.6h-7.0zM932.0 207h3.0V286.9h-3.0zM936.0 207h3.0V285.7h-3.0zM940.0 207h8.0V288.9h-8.0zM949.0 207h8.0V288.6h-8.0zM958.0 207h3.0V287.7h-3.0zM962.0 207h5.0V286.3h-5.0zM980.0 207h9.0V287.6h-9.0zM990.0 207h6.0V286.9h-6.0zM997.0 207h4.0V286.4h-4.0zM1002.0 207h3.0V287.5h-3.0zM1006.0 207h6.0V286.2h-6.0zM1013.0 207h5.0V285.8h-5.0zM1024.0 207h3.0V286.3h-3.0zM1032.0 207h4.0V286.1h-4.0zM1037.0 207h6.0V288.5h-6.0zM1044.0 207h6.0V287.7h-6.0zM1051.0 207h7.0V287.0h-7.0zM1059.0 207h6.0V287.0h-6.0zM1066.0 207h4.0V286.1h-4.0zM1083.0 207h5.0V287.5h-5.0zM1089.0 207h5.0V288.6h-5.0zM1095.0 207h6.0V287.1h-6.0zM1102.0 207h9.0V286.4h-9.0zM1112.0 207h4.0V285.5h-4.0zM1117.0 207h5.0V285.4h-5.0zM1123.0 207h1.0V288.1h-1.0zM1124.0 207h3.0V288.9h-3.0zM1135.0 207h4.0V286.5h-4.0zM1140.0 207h7.0V287.6h-7.0zM1148.0 207h8.0V287.2h-8.0zM1157.0 207h7.0V288.2h-7.0zM1165.0 207h8.0V288.0h-8.0zM1186.0 207h3.0V288.6h-3.0zM1190.0 207h7.0V287.5h-7.0zM1198.0 207h9.0V287.4h-9.0zM1208.0 207h8.0V288.6h-8.0zM1217.0 207h5.0V287.0h-5.0zM1223.0 207h5.0V286.3h-5.0zM1238.0 207h6.0V286.7h-6.0zM1245.0 207h3.0V288.5h-3.0zM1254.0 207h5.0V285.9h-5.0zM1260.0 207h3.0V287.4h-3.0zM1264.0 207h3.0V288.8h-3.0zM1268.0 207h8.0V288.5h-8.0zM1277.0 207h3.0V286.9h-3.0zM1293.0 207h3.0V285.4h-3.0zM1297.0 207h6.0V288.8h-6.0zM1304.0 207h6.0V289.1h-6.0zM1311.0 207h6.0V287.9h-6.0zM1318.0 207h5.0V287.5h-5.0zM1324.0 207h7.0V287.8h-7.0zM1344.0 207h3.0V286.7h-3.0zM1348.0 207h6.0V287.4h-6.0zM1355.0 207h9.0V287.1h-9.0zM1365.0 207h7.0V289.1h-7.0zM1373.0 207h6.0V288.4h-6.0zM1380.0 207h3.0V289.0h-3.0zM1396.0 207h6.0V285.6h-6.0zM1403.0 207h7.0V288.4h-7.0zM1411.0 207h8.0V286.8h-8.0zM1420.0 207h4.0V287.2h-4.0zM1425.0 207h4.0V285.9h-4.0zM1430.0 207h4.0V286.6h-4.0zM1442.0 207h7.0V285.4h-7.0zM1450.0 207h8.0V286.4h-8.0zM1459.0 207h3.0V286.4h-3.0zM1463.0 207h6.0V287.8h-6.0zM1470.0 207h6.0V287.4h-6.0zM1477.0 207h7.0V287.3h-7.0zM1485.0 207h1.0V286.8h-1.0zM1499.0 207h4.0V288.2h-4.0zM1504.0 207h3.0V285.9h-3.0zM1508.0 207h8.0V287.6h-8.0zM1517.0 207h3.0V285.2h-3.0zM1521.0 207h5.0V288.0h-5.0zM1527.0 207h4.0V286.2h-4.0zM1532.0 207h5.0V287.5h-5.0zM1542.0 207h2.0V286.7h-2.0z" fill="#1aa0a8" shape-rendering="crispEdges"/><path d="M466.0 207h1.1V286.2h-1.1zM470.6 207h1.1V286.2h-1.1zM474.7 207h0.9V286.2h-0.9zM478.0 207h0.7V286.2h-0.7zM483.5 207h1.0V286.2h-1.0zM487.2 207h1.1V286.2h-1.1zM492.6 207h0.8V286.2h-0.8zM497.0 207h1.1V286.2h-1.1zM501.3 207h1.1V286.2h-1.1zM509.0 207h0.9V286.2h-0.9zM517.0 207h0.8V286.2h-0.8zM520.4 207h1.1V286.2h-1.1zM524.6 207h1.0V286.2h-1.0zM528.0 207h0.8V286.2h-0.8zM531.5 207h0.8V286.2h-0.8zM537.2 207h0.8V286.2h-0.8zM541.5 207h0.7V286.2h-0.7zM545.6 207h0.9V286.2h-0.9zM549.3 207h0.7V286.2h-0.7zM552.0 207h1.0V286.2h-1.0zM568.5 207h0.8V286.2h-0.8zM571.5 207h0.8V286.2h-0.8zM574.6 207h0.7V286.2h-0.7zM579.1 207h0.8V286.2h-0.8zM582.0 207h1.0V286.2h-1.0zM584.8 207h0.8V286.2h-0.8zM590.1 207h0.8V286.2h-0.8zM593.9 207h1.0V286.2h-1.0zM599.2 207h0.8V286.2h-0.8zM602.7 207h1.0V286.2h-1.0zM606.5 207h1.1V286.2h-1.1zM609.8 207h1.1V286.2h-1.1zM620.0 207h0.8V286.2h-0.8zM623.9 207h0.8V286.2h-0.8zM628.6 207h0.8V286.2h-0.8zM634.1 207h0.9V286.2h-0.9zM637.8 207h0.8V286.2h-0.8zM642.2 207h0.8V286.2h-0.8zM647.5 207h0.7V286.2h-0.7zM651.6 207h0.9V286.2h-0.9zM655.0 207h1.0V286.2h-1.0zM671.0 207h1.0V286.2h-1.0zM675.4 207h0.8V286.2h-0.8zM679.1 207h0.7V286.2h-0.7zM682.0 207h1.0V286.2h-1.0zM685.7 207h1.0V286.2h-1.0zM688.5 207h0.9V286.2h-0.9zM692.2 207h0.9V286.2h-0.9zM695.6 207h0.7V286.2h-0.7zM698.9 207h0.8V286.2h-0.8zM701.7 207h1.0V286.2h-1.0zM705.2 207h0.9V286.2h-0.9zM710.7 207h1.0V286.2h-1.0zM723.0 207h1.0V286.2h-1.0zM726.0 207h0.8V286.2h-0.8zM728.4 207h1.0V286.2h-1.0zM733.2 207h0.8V286.2h-0.8zM737.0 207h1.0V286.2h-1.0zM741.9 207h0.8V286.2h-0.8zM747.2 207h0.8V286.2h-0.8zM751.7 207h0.8V286.2h-0.8zM754.4 207h1.1V286.2h-1.1zM759.5 207h1.0V286.2h-1.0zM774.0 207h0.7V286.2h-0.7zM776.8 207h0.8V286.2h-0.8zM780.1 207h0.9V286.2h-0.9zM782.6 207h0.8V286.2h-0.8zM787.2 207h0.8V286.2h-0.8zM792.4 207h0.9V286.2h-0.9zM797.3 207h0.8V286.2h-0.8zM801.1 207h1.0V286.2h-1.0zM804.8 207h0.7V286.2h-0.7zM810.0 207h1.0V286.2h-1.0zM826.0 207h0.7V286.2h-0.7zM831.2 207h0.9V286.2h-0.9zM833.8 207h0.8V286.2h-0.8zM836.5 207h1.0V286.2h-1.0zM839.8 207h1.1V286.2h-1.1zM844.9 207h0.7V286.2h-0.7zM849.6 207h0.9V286.2h-0.9zM854.6 207h1.0V286.2h-1.0zM858.1 207h0.7V286.2h-0.7zM863.6 207h0.4V286.2h-0.4zM877.0 207h1.0V286.2h-1.0zM882.1 207h1.0V286.2h-1.0zM886.8 207h0.9V286.2h-0.9zM889.4 207h1.0V286.2h-1.0zM893.3 207h0.9V286.2h-0.9zM899.0 207h0.8V286.2h-0.8zM903.9 207h0.7V286.2h-0.7zM908.6 207h1.0V286.2h-1.0zM912.0 207h0.9V286.2h-0.9zM924.0 207h1.0V286.2h-1.0zM928.4 207h0.8V286.2h-0.8zM930.9 207h0.8V286.2h-0.8zM934.7 207h0.8V286.2h-0.8zM938.0 207h0.8V286.2h-0.8zM942.7 207h1.0V286.2h-1.0zM946.0 207h0.8V286.2h-0.8zM950.1 207h0.9V286.2h-0.9zM955.8 207h0.8V286.2h-0.8zM959.2 207h1.1V286.2h-1.1zM962.2 207h0.9V286.2h-0.9zM965.8 207h1.0V286.2h-1.0zM980.0 207h1.0V286.2h-1.0zM983.1 207h1.0V286.2h-1.0zM987.7 207h0.9V286.2h-0.9zM992.7 207h1.0V286.2h-1.0zM995.7 207h0.8V286.2h-0.8zM999.2 207h0.8V286.2h-0.8zM1001.7 207h0.8V286.2h-0.8zM1004.7 207h1.0V286.2h-1.0zM1008.8 207h0.7V286.2h-0.7zM1012.2 207h0.9V286.2h-0.9zM1015.8 207h0.8V286.2h-0.8zM1024.0 207h0.7V286.2h-0.7zM1032.0 207h1.0V286.2h-1.0zM1034.8 207h1.0V286.2h-1.0zM1040.7 207h0.9V286.2h-0.9zM1043.5 207h0.9V286.2h-0.9zM1047.4 207h0.8V286.2h-0.8zM1051.6 207h0.7V286.2h-0.7zM1057.0 207h1.0V286.2h-1.0zM1061.7 207h1.1V286.2h-1.1zM1066.5 207h0.8V286.2h-0.8zM1069.7 207h0.3V286.2h-0.3zM1083.0 207h1.0V286.2h-1.0zM1088.4 207h0.8V286.2h-0.8zM1091.4 207h1.0V286.2h-1.0zM1096.8 207h1.1V286.2h-1.1zM1100.0 207h1.0V286.2h-1.0zM1105.4 207h1.0V286.2h-1.0zM1109.1 207h0.8V286.2h-0.8zM1114.2 207h0.8V286.2h-0.8zM1117.8 207h0.9V286.2h-0.9zM1121.5 207h1.0V286.2h-1.0zM1124.5 207h0.7V286.2h-0.7zM1135.0 207h1.0V286.2h-1.0zM1140.3 207h1.0V286.2h-1.0zM1146.0 207h1.1V286.2h-1.1zM1150.3 207h0.9V286.2h-0.9zM1153.2 207h0.8V286.2h-0.8zM1157.6 207h0.7V286.2h-0.7zM1162.2 207h0.8V286.2h-0.8zM1166.0 207h1.1V286.2h-1.1zM1168.9 207h0.7V286.2h-0.7zM1172.7 207h0.3V286.2h-0.3zM1186.0 207h0.7V286.2h-0.7zM1191.1 207h1.0V286.2h-1.0zM1196.4 207h0.9V286.2h-0.9zM1199.8 207h1.0V286.2h-1.0zM1204.1 207h0.9V286.2h-0.9zM1207.6 207h0.9V286.2h-0.9zM1212.3 207h1.0V286.2h-1.0zM1218.0 207h0.8V286.2h-0.8zM1221.3 207h0.9V286.2h-0.9zM1225.7 207h0.8V286.2h-0.8zM1238.0 207h0.7V286.2h-0.7zM1241.4 207h0.9V286.2h-0.9zM1247.2 207h0.8V286.2h-0.8zM1254.0 207h1.1V286.2h-1.1zM1260.0 207h0.9V286.2h-0.9zM1265.2 207h0.7V286.2h-0.7zM1269.8 207h0.9V286.2h-0.9zM1273.3 207h0.9V286.2h-0.9zM1279.1 207h0.9V286.2h-0.9zM1293.0 207h0.8V286.2h-0.8zM1296.5 207h1.1V286.2h-1.1zM1299.2 207h0.8V286.2h-0.8zM1303.8 207h0.9V286.2h-0.9zM1306.5 207h1.0V286.2h-1.0zM1310.3 207h0.9V286.2h-0.9zM1314.2 207h0.9V286.2h-0.9zM1318.5 207h0.9V286.2h-0.9zM1321.3 207h0.8V286.2h-0.8zM1326.7 207h0.9V286.2h-0.9zM1329.5 207h1.0V286.2h-1.0zM1344.0 207h0.7V286.2h-0.7zM1348.1 207h0.8V286.2h-0.8zM1352.1 207h0.9V286.2h-0.9zM1355.3 207h0.9V286.2h-0.9zM1358.1 207h0.9V286.2h-0.9zM1362.6 207h0.7V286.2h-0.7zM1366.3 207h0.7V286.2h-0.7zM1370.0 207h1.0V286.2h-1.0zM1374.5 207h1.0V286.2h-1.0zM1379.6 207h0.7V286.2h-0.7zM1396.0 207h1.0V286.2h-1.0zM1398.8 207h1.0V286.2h-1.0zM1402.7 207h0.8V286.2h-0.8zM1408.4 207h0.9V286.2h-0.9zM1413.5 207h0.8V286.2h-0.8zM1418.5 207h0.7V286.2h-0.7zM1421.5 207h0.8V286.2h-0.8zM1423.9 207h0.9V286.2h-0.9zM1427.1 207h0.8V286.2h-0.8zM1431.9 207h0.9V286.2h-0.9zM1442.0 207h0.9V286.2h-0.9zM1447.5 207h0.9V286.2h-0.9zM1453.1 207h1.0V286.2h-1.0zM1456.3 207h1.0V286.2h-1.0zM1460.0 207h1.0V286.2h-1.0zM1464.9 207h1.0V286.2h-1.0zM1467.8 207h0.8V286.2h-0.8zM1472.7 207h1.1V286.2h-1.1zM1477.8 207h0.7V286.2h-0.7zM1482.2 207h0.7V286.2h-0.7zM1499.0 207h1.0V286.2h-1.0zM1501.9 207h1.1V286.2h-1.1zM1506.9 207h0.8V286.2h-0.8zM1509.8 207h0.9V286.2h-0.9zM1515.1 207h0.9V286.2h-0.9zM1518.0 207h0.7V286.2h-0.7zM1520.6 207h1.0V286.2h-1.0zM1523.7 207h0.9V286.2h-0.9zM1527.2 207h1.0V286.2h-1.0zM1531.0 207h0.8V286.2h-0.8zM1536.3 207h0.7V286.2h-0.7zM1541.5 207h1.0V286.2h-1.0z" fill="#26c4cc"/><path d="M466.1 288.2v5.7M469.2 288.2v10.0M469.4 288.2v4.5M474.6 288.2v6.1M475.3 288.2v9.8M484.7 288.2v13.4M486.5 288.2v4.7M490.6 288.2v3.3M492.6 288.2v6.7M494.9 288.2v9.9M498.8 288.2v9.6M501.6 288.2v18.5M502.3 288.2v8.4M503.8 288.2v7.0M531.3 288.2v18.6M535.0 288.2v9.2M541.8 288.2v8.1M543.9 288.2v5.3M553.2 288.2v10.5M554.9 288.2v9.1M573.1 288.2v5.8M575.5 288.2v3.5M577.2 288.2v10.9M579.3 288.2v4.9M581.3 288.2v6.9M590.6 288.2v6.6M594.4 288.2v5.4M594.7 288.2v5.4M600.6 288.2v7.4M602.5 288.2v10.4M602.9 288.2v4.4M622.0 288.2v9.2M631.2 288.2v3.5M641.6 288.2v5.2M641.8 288.2v4.3M647.3 288.2v4.7M648.3 288.2v7.8M653.1 288.2v4.6M675.2 288.2v3.6M684.6 288.2v9.7M685.6 288.2v7.3M690.2 288.2v10.4M692.0 288.2v9.0M694.4 288.2v8.4M694.7 288.2v10.7M699.1 288.2v5.7M703.3 288.2v5.1M703.3 288.2v10.4M723.3 288.2v7.9M725.1 288.2v3.7M725.8 288.2v15.5M733.4 288.2v6.4M737.5 288.2v7.4M741.6 288.2v5.6M743.0 288.2v8.7M749.8 288.2v5.5M776.7 288.2v5.2M789.6 288.2v6.9M792.5 288.2v8.2M794.6 288.2v10.9M801.0 288.2v6.3M801.7 288.2v3.5M805.3 288.2v4.5M807.4 288.2v4.2M837.6 288.2v7.3M844.4 288.2v4.9M847.5 288.2v8.1M854.9 288.2v6.7M877.5 288.2v15.1M882.2 288.2v6.2M882.5 288.2v7.5M893.9 288.2v10.6M895.1 288.2v5.0M897.7 288.2v4.9M904.2 288.2v8.1M925.1 288.2v7.6M934.1 288.2v10.0M940.5 288.2v9.6M942.3 288.2v6.9M943.1 288.2v8.5M945.9 288.2v7.6M946.9 288.2v10.1M953.8 288.2v9.9M962.9 288.2v11.0M963.0 288.2v3.9M963.0 288.2v10.3M980.5 288.2v4.3M980.9 288.2v5.7M986.6 288.2v10.1M986.8 288.2v4.9M992.1 288.2v3.3M993.3 288.2v11.0M993.4 288.2v10.9M1003.0 288.2v4.0M1003.6 288.2v6.4M1008.9 288.2v4.2M1012.0 288.2v3.9M1015.2 288.2v10.3M1016.3 288.2v10.7M1025.4 288.2v4.4M1025.8 288.2v3.3M1035.7 288.2v10.0M1041.0 288.2v8.2M1044.6 288.2v8.5M1054.0 288.2v8.7M1055.8 288.2v6.4M1058.0 288.2v6.1M1058.7 288.2v18.7M1063.0 288.2v10.4M1067.2 288.2v6.0M1068.2 288.2v3.9M1093.9 288.2v3.4M1095.7 288.2v8.2M1097.4 288.2v18.3M1103.6 288.2v9.8M1107.7 288.2v11.0M1112.2 288.2v8.9M1117.9 288.2v6.1M1122.2 288.2v8.4M1136.1 288.2v7.9M1147.0 288.2v6.8M1150.4 288.2v6.8M1151.1 288.2v10.4M1154.5 288.2v7.2M1155.7 288.2v4.4M1158.5 288.2v8.1M1168.7 288.2v16.9M1170.9 288.2v9.7M1171.5 288.2v4.2M1172.0 288.2v5.9M1188.7 288.2v3.7M1215.1 288.2v8.6M1218.0 288.2v9.4M1218.8 288.2v8.4M1222.1 288.2v4.9M1224.0 288.2v10.3M1225.0 288.2v12.9M1225.9 288.2v8.7M1227.7 288.2v4.9M1242.6 288.2v9.9M1245.1 288.2v9.3M1247.2 288.2v3.4M1259.7 288.2v5.4M1264.4 288.2v9.5M1266.6 288.2v7.6M1267.6 288.2v10.8M1269.7 288.2v8.3M1270.0 288.2v9.0M1273.4 288.2v7.0M1279.9 288.2v3.2M1295.8 288.2v9.7M1298.7 288.2v10.1M1301.8 288.2v7.1M1306.9 288.2v8.9M1307.0 288.2v8.4M1313.7 288.2v15.6M1314.8 288.2v3.6M1315.3 288.2v3.7M1319.1 288.2v3.4M1324.7 288.2v11.7M1330.1 288.2v6.3M1351.7 288.2v17.0M1353.6 288.2v12.1M1373.9 288.2v5.2M1375.6 288.2v5.0M1379.3 288.2v7.1M1379.6 288.2v5.4M1404.8 288.2v5.1M1405.1 288.2v7.3M1407.9 288.2v6.9M1410.0 288.2v9.4M1421.4 288.2v12.7M1423.1 288.2v7.3M1426.9 288.2v5.6M1443.6 288.2v8.7M1447.6 288.2v6.6M1450.3 288.2v17.0M1452.9 288.2v13.8M1461.9 288.2v3.6M1462.8 288.2v10.4M1470.2 288.2v7.0M1475.3 288.2v5.4M1483.6 288.2v4.2M1484.6 288.2v6.5M1512.7 288.2v6.3M1514.1 288.2v10.2M1514.8 288.2v3.5M1515.0 288.2v9.7M1516.2 288.2v7.7M1520.0 288.2v4.2M1521.7 288.2v9.7M1529.0 288.2v10.8M1529.2 288.2v6.0M1530.3 288.2v12.5M1533.2 288.2v8.8M1542.1 288.2v16.4" stroke="#118088" stroke-width="0.9" fill="none"/><path d="M488.2 205.6v-1.1M489.6 205.6v-0.6M492.3 205.6v-1.9M495.0 205.6v-1.1M498.1 205.6v-0.6M499.4 205.6v-1.1M500.4 205.6v-1.9M518.7 205.6v-1.1M518.9 205.6v-0.6M520.0 205.6v-1.0M526.2 205.6v-1.0M529.5 205.6v-0.4M535.7 205.6v-0.8M535.8 205.6v-1.3M540.0 205.6v-0.4M541.8 205.6v-0.6M542.5 205.6v-0.5M544.1 205.6v-1.1M546.7 205.6v-0.7M569.0 205.6v-0.7M569.5 205.6v-0.7M572.6 205.6v-0.8M573.4 205.6v-0.7M574.0 205.6v-0.5M576.8 205.6v-1.9M588.3 205.6v-0.7M591.6 205.6v-0.9M597.2 205.6v-0.4M597.3 205.6v-0.7M598.7 205.6v-1.9M602.1 205.6v-0.5M608.3 205.6v-1.6M609.4 205.6v-0.8M609.6 205.6v-0.9M621.7 205.6v-1.0M631.8 205.6v-0.3M633.9 205.6v-1.1M635.1 205.6v-1.0M635.7 205.6v-1.0M636.6 205.6v-0.5M651.5 205.6v-1.2M654.1 205.6v-0.7M676.6 205.6v-0.9M680.5 205.6v-1.1M680.9 205.6v-0.9M681.6 205.6v-1.2M687.1 205.6v-0.4M698.1 205.6v-1.1M705.3 205.6v-1.0M707.6 205.6v-1.0M724.4 205.6v-1.2M736.1 205.6v-0.4M742.3 205.6v-0.5M743.3 205.6v-0.5M744.4 205.6v-0.7M749.0 205.6v-0.9M755.2 205.6v-1.0M781.0 205.6v-1.1M785.2 205.6v-1.1M788.8 205.6v-1.1M788.8 205.6v-1.3M789.3 205.6v-1.0M793.0 205.6v-0.7M794.0 205.6v-0.6M797.9 205.6v-1.0M799.1 205.6v-0.9M803.4 205.6v-1.7M808.0 205.6v-0.3M808.9 205.6v-0.5M810.7 205.6v-0.5M835.0 205.6v-0.7M847.4 205.6v-0.8M848.3 205.6v-1.0M851.3 205.6v-0.3M862.9 205.6v-0.7M878.7 205.6v-0.4M886.7 205.6v-0.8M897.2 205.6v-1.1M897.5 205.6v-0.9M910.2 205.6v-0.6M914.2 205.6v-0.6M933.5 205.6v-0.7M948.5 205.6v-0.4M953.1 205.6v-0.8M958.6 205.6v-1.1M964.2 205.6v-0.3M964.8 205.6v-1.2M965.4 205.6v-0.8M965.6 205.6v-0.7M981.3 205.6v-1.0M984.5 205.6v-0.7M988.6 205.6v-1.0M990.6 205.6v-1.2M995.3 205.6v-0.5M998.7 205.6v-1.0M1000.4 205.6v-0.4M1008.8 205.6v-0.4M1009.5 205.6v-1.0M1010.9 205.6v-0.6M1024.8 205.6v-0.6M1025.7 205.6v-0.6M1026.2 205.6v-0.5M1045.3 205.6v-0.5M1054.8 205.6v-0.7M1058.9 205.6v-1.0M1059.5 205.6v-1.0M1062.8 205.6v-0.9M1064.1 205.6v-0.6M1067.1 205.6v-0.6M1068.3 205.6v-1.7M1086.3 205.6v-0.6M1087.6 205.6v-0.9M1090.8 205.6v-1.0M1092.9 205.6v-1.7M1094.4 205.6v-0.9M1098.4 205.6v-0.9M1100.4 205.6v-1.1M1102.1 205.6v-0.7M1103.8 205.6v-0.5M1106.8 205.6v-0.8M1116.1 205.6v-0.4M1116.4 205.6v-0.7M1138.4 205.6v-0.7M1139.7 205.6v-1.1M1147.0 205.6v-0.4M1152.6 205.6v-0.8M1161.8 205.6v-1.0M1166.0 205.6v-1.9M1170.9 205.6v-0.9M1172.1 205.6v-0.4M1187.3 205.6v-0.5M1187.7 205.6v-0.9M1194.1 205.6v-0.6M1194.4 205.6v-1.1M1194.5 205.6v-1.5M1195.7 205.6v-0.4M1199.0 205.6v-1.7M1206.0 205.6v-0.4M1210.0 205.6v-0.6M1213.3 205.6v-0.5M1214.3 205.6v-1.1M1217.4 205.6v-0.3M1217.5 205.6v-0.8M1217.7 205.6v-0.9M1221.3 205.6v-0.7M1224.8 205.6v-0.5M1244.5 205.6v-1.2M1254.3 205.6v-1.2M1256.7 205.6v-0.9M1259.1 205.6v-0.6M1261.2 205.6v-0.6M1266.5 205.6v-0.8M1267.4 205.6v-0.9M1268.6 205.6v-0.8M1298.5 205.6v-1.2M1303.6 205.6v-1.6M1304.6 205.6v-0.3M1309.7 205.6v-0.9M1311.4 205.6v-0.4M1330.5 205.6v-1.0M1345.8 205.6v-1.1M1348.2 205.6v-0.7M1348.9 205.6v-1.0M1367.5 205.6v-1.1M1370.1 205.6v-1.8M1370.6 205.6v-0.8M1371.5 205.6v-0.9M1381.1 205.6v-0.9M1398.3 205.6v-1.0M1405.0 205.6v-1.8M1405.0 205.6v-0.5M1406.9 205.6v-0.3M1413.1 205.6v-1.2M1421.9 205.6v-1.3M1423.5 205.6v-0.9M1426.1 205.6v-0.9M1427.2 205.6v-1.1M1427.7 205.6v-1.4M1428.6 205.6v-0.7M1432.6 205.6v-0.9M1432.9 205.6v-1.6M1444.0 205.6v-0.9M1445.1 205.6v-0.9M1447.7 205.6v-0.4M1451.3 205.6v-0.4M1468.7 205.6v-0.5M1474.9 205.6v-1.0M1480.3 205.6v-0.6M1505.5 205.6v-0.6M1506.6 205.6v-1.1M1511.1 205.6v-1.1M1521.1 205.6v-0.5M1521.2 205.6v-1.7M1535.7 205.6v-0.9M1542.2 205.6v-1.3" stroke="#1ca8b0" stroke-width="0.9" fill="none"/><polygon points="462,375.2 463,381.3 464,381.5 465,376.5 466,381.3 467,381.4 468,381.1 469,380.9 470,381.3 471,378.3 472,381.3 473,380.9 474,381.5 475,381.6 476,380.5 477,380.7 478,381.3 479,380.7 480,380.6 481,378.7 482,381.1 483,380.8 484,381.4 485,380.1 486,381.2 487,380.8 488,381.5 489,381.2 490,381.2 491,376.8 492,381.5 493,381.1 494,377.9 495,381.1 496,381.4 497,381.4 498,381.6 499,381.5 500,380.9 501,381.2 502,381.2 503,381.4 504,381.2 505,380.4 506,381.0 507,381.6 508,381.6 509,381.6 510,381.2 511,381.5 512,381.6 513,380.7 514,381.2 515,381.4 516,380.9 517,381.6 518,381.4 519,381.6 520,381.2 521,381.6 522,381.4 523,380.9 524,381.5 525,381.2 526,381.4 527,381.5 528,381.4 529,381.2 530,381.4 531,381.0 532,381.5 533,379.7 534,381.4 535,381.4 536,377.6 537,381.6 538,380.9 539,381.6 540,381.1 541,381.2 542,381.0 543,380.6 544,381.4 545,381.1 546,381.2 547,381.3 548,381.6 549,380.4 550,381.0 551,381.6 552,381.5 553,380.7 554,381.2 555,380.6 556,381.2 557,381.2 558,381.1 559,381.5 560,381.1 561,380.9 562,381.3 563,381.3 564,381.2 565,381.2 566,381.6 567,381.0 568,381.5 569,381.6 570,378.7 571,381.3 572,381.3 573,381.4 574,380.9 575,381.5 576,380.9 577,381.4 578,381.3 579,381.3 580,381.6 581,381.3 582,381.3 583,380.7 584,381.5 585,380.6 586,381.4 587,381.4 588,381.5 589,380.8 590,381.3 591,381.2 592,381.0 593,381.6 594,381.1 595,381.3 596,381.1 597,381.4 598,381.6 599,381.1 600,380.7 601,381.1 602,381.1 603,381.4 604,381.4 605,381.1 606,381.3 607,380.6 608,381.2 609,381.6 610,380.7 611,381.6 612,381.3 613,381.4 614,376.0 615,380.4 616,381.4 617,381.2 618,381.1 619,381.6 620,380.6 621,381.6 622,381.1 623,380.9 624,380.7 625,381.5 626,381.1 627,381.3 628,376.0 629,381.4 630,381.0 631,381.3 632,380.8 633,381.3 634,380.9 635,381.4 636,380.7 637,380.8 638,381.4 639,381.5 640,381.5 641,381.1 642,381.4 643,381.3 644,380.7 645,381.5 646,381.5 647,381.6 648,380.4 649,381.3 650,380.9 651,381.0 652,381.1 653,381.6 654,380.6 655,381.4 656,381.4 657,381.0 658,381.3 659,380.3 660,381.6 661,381.2 662,381.3 663,381.3 664,380.2 665,381.3 666,381.1 667,381.1 668,380.9 669,381.5 670,381.1 671,381.1 672,380.8 673,381.4 674,381.3 675,381.6 676,381.0 677,380.2 678,381.3 679,381.6 680,381.0 681,381.4 682,380.6 683,381.2 684,380.4 685,380.4 686,381.6 687,380.9 688,381.4 689,381.4 690,380.9 691,381.0 692,381.4 693,381.4 694,381.6 695,381.0 696,380.4 697,380.5 698,381.3 699,381.6 700,381.5 701,381.2 702,380.2 703,381.4 704,381.3 705,381.4 706,381.3 707,381.4 708,381.6 709,380.9 710,380.7 711,380.7 712,381.6 713,380.6 714,381.5 715,381.0 716,381.6 717,381.0 718,381.0 719,380.6 720,381.3 721,381.3 722,380.9 723,381.5 724,380.9 725,381.1 726,380.6 727,381.4 728,381.5 729,381.3 730,381.2 731,380.9 732,381.3 733,381.2 734,381.1 735,380.9 736,381.3 737,381.0 738,381.3 739,380.7 740,381.1 741,381.1 742,381.5 743,381.4 744,381.2 745,379.0 746,381.1 747,380.9 748,381.1 749,381.5 750,381.0 751,380.8 752,381.6 753,379.8 754,381.4 755,380.8 756,381.4 757,381.2 758,378.7 759,381.5 760,381.6 761,381.1 762,381.3 763,381.3 764,381.5 765,381.3 766,381.3 767,381.4 768,380.8 769,381.5 770,380.8 771,381.2 772,377.6 773,381.5 774,381.4 775,380.9 776,380.9 777,381.0 778,381.3 779,380.6 780,381.3 781,380.2 782,381.5 783,380.8 784,381.0 785,381.6 786,381.0 787,381.5 788,381.4 789,381.1 790,381.1 791,380.9 792,381.1 793,381.2 794,381.0 795,381.1 796,381.5 797,381.0 798,381.3 799,381.4 800,381.0 801,381.5 802,381.0 803,381.5 804,380.8 805,381.5 806,381.0 807,381.3 808,381.0 809,381.5 810,381.3 811,381.2 812,380.7 813,377.7 814,381.0 815,381.2 816,381.2 817,381.2 818,381.5 819,381.0 820,381.4 821,380.3 822,381.6 823,381.3 824,379.8 825,381.5 826,381.0 827,381.5 828,381.0 829,381.1 830,381.4 831,381.3 832,381.3 833,381.2 834,380.3 835,381.2 836,381.3 837,381.2 838,381.3 839,381.4 840,381.6 841,381.2 842,381.5 843,381.6 844,381.3 845,381.1 846,381.3 847,381.5 848,381.2 849,380.1 850,381.0 851,380.6 852,381.1 853,380.5 854,381.3 855,381.1 856,381.4 857,381.4 858,381.0 859,380.6 860,380.5 861,381.4 862,381.5 863,381.4 864,381.4 865,381.0 866,380.6 867,381.3 868,381.3 869,381.0 870,381.3 871,381.2 872,381.0 873,380.5 874,380.8 875,381.5 876,381.1 877,381.2 878,381.3 879,381.3 880,381.3 881,374.7 882,380.6 883,381.4 884,381.5 885,381.4 886,381.2 887,381.0 888,381.2 889,381.6 890,381.4 891,381.1 892,381.2 893,381.6 894,381.5 895,381.0 896,381.2 897,380.9 898,381.2 899,381.1 900,380.8 901,381.3 902,381.5 903,381.5 904,381.2 905,381.4 906,381.5 907,381.5 908,381.3 909,381.1 910,381.1 911,381.2 912,381.6 913,380.4 914,381.6 915,380.3 916,381.0 917,381.2 918,380.3 919,381.6 920,381.5 921,381.4 922,380.9 923,381.5 924,380.4 925,381.4 926,380.8 927,381.4 928,381.5 929,381.4 930,380.9 931,380.5 932,380.2 933,381.3 934,380.9 935,381.4 936,381.4 937,381.4 938,381.5 939,381.1 940,381.5 941,381.2 942,381.3 943,381.5 944,381.0 945,381.1 946,381.0 947,381.2 948,381.3 949,381.3 950,377.8 951,380.4 952,379.1 953,381.0 954,381.0 955,375.9 956,381.3 957,381.1 958,381.4 959,380.5 960,381.0 961,381.1 962,380.9 963,380.6 964,380.8 965,381.4 966,380.9 967,381.4 968,381.5 969,380.3 970,381.5 971,381.0 972,381.2 973,381.6 974,380.6 975,381.2 976,381.5 977,381.1 978,381.5 979,380.6 980,380.4 981,380.6 982,381.1 983,381.2 984,380.4 985,380.9 986,380.8 987,380.7 988,381.4 989,381.0 990,381.5 991,381.2 992,381.2 993,381.0 994,378.3 995,381.3 996,380.3 997,381.4 998,381.3 999,380.9 1000,380.6 1001,381.5 1002,380.8 1003,380.9 1004,381.1 1005,381.6 1006,381.3 1007,380.8 1008,381.2 1009,381.5 1010,381.3 1011,380.9 1012,381.0 1013,381.1 1014,381.4 1015,381.2 1016,381.6 1017,381.0 1018,380.3 1019,381.3 1020,380.6 1021,380.9 1022,381.1 1023,381.5 1024,381.1 1025,380.5 1026,381.3 1027,381.2 1028,381.4 1029,381.6 1030,381.3 1031,381.5 1032,380.5 1033,381.4 1034,380.0 1035,381.3 1036,381.0 1037,380.9 1038,381.5 1039,381.3 1040,380.9 1041,380.8 1042,380.6 1043,380.8 1044,381.4 1045,381.5 1046,381.1 1047,381.0 1048,381.0 1049,381.3 1050,381.4 1051,380.9 1052,381.5 1053,381.0 1054,381.0 1055,380.9 1056,381.4 1057,381.6 1058,378.4 1059,381.5 1060,381.4 1061,381.5 1062,381.1 1063,381.1 1064,381.4 1065,381.4 1066,381.6 1067,376.9 1068,381.4 1069,381.6 1070,381.5 1071,381.4 1072,381.4 1073,380.9 1074,381.1 1075,381.4 1076,380.7 1077,381.3 1078,381.3 1079,381.2 1080,381.3 1081,381.5 1082,381.3 1083,381.1 1084,380.7 1085,380.2 1086,381.4 1087,381.3 1088,381.2 1089,380.3 1090,380.5 1091,380.9 1092,381.3 1093,381.4 1094,381.5 1095,380.7 1096,381.6 1097,381.6 1098,381.2 1099,381.6 1100,381.3 1101,381.6 1102,381.3 1103,380.8 1104,381.6 1105,381.0 1106,381.6 1107,381.2 1108,380.4 1109,381.6 1110,380.8 1111,381.0 1112,381.3 1113,381.6 1114,380.4 1115,381.0 1116,381.2 1117,381.1 1118,380.5 1119,381.1 1120,381.6 1121,381.4 1122,380.7 1123,381.3 1124,381.5 1125,381.0 1126,381.3 1127,380.6 1128,380.5 1129,381.1 1130,381.6 1131,381.1 1132,381.2 1133,381.1 1134,380.9 1135,381.3 1136,381.3 1137,381.6 1138,381.3 1139,381.4 1140,381.3 1141,381.0 1142,380.4 1143,380.7 1144,380.8 1145,380.9 1146,381.1 1147,381.4 1148,381.3 1149,381.5 1150,381.4 1151,381.5 1152,380.5 1153,381.5 1154,380.0 1155,381.0 1156,381.5 1157,380.7 1158,381.6 1159,381.2 1160,381.2 1161,381.2 1162,381.3 1163,380.8 1164,381.4 1165,381.1 1166,381.3 1167,381.2 1168,381.3 1169,381.3 1170,381.0 1171,380.9 1172,381.5 1173,381.3 1174,381.3 1175,381.3 1176,381.5 1177,381.2 1178,380.5 1179,380.6 1180,381.4 1181,381.1 1182,381.4 1183,381.4 1184,380.9 1185,380.5 1186,381.2 1187,378.5 1188,381.2 1189,380.3 1190,381.1 1191,381.4 1192,381.4 1193,380.9 1194,381.5 1195,380.4 1196,381.3 1197,381.5 1198,381.1 1199,380.4 1200,381.1 1201,380.1 1202,381.3 1203,380.0 1204,378.4 1205,381.1 1206,381.2 1207,381.4 1208,380.9 1209,380.8 1210,381.2 1211,377.9 1212,381.4 1213,381.1 1214,380.8 1215,380.7 1216,381.1 1217,375.4 1218,381.1 1219,380.4 1220,381.0 1221,381.1 1222,381.4 1223,381.4 1224,380.5 1225,380.3 1226,379.9 1227,381.3 1228,377.1 1229,380.8 1230,380.9 1231,381.5 1232,380.8 1233,377.4 1234,380.2 1235,381.5 1236,381.1 1237,381.3 1238,381.5 1239,380.3 1240,381.3 1241,381.6 1242,381.1 1243,380.4 1244,381.4 1245,381.6 1246,381.0 1247,381.4 1248,381.4 1249,378.5 1250,381.5 1251,381.3 1252,381.1 1253,381.6 1254,381.1 1255,380.8 1256,381.0 1257,380.3 1258,381.5 1259,381.2 1260,377.6 1261,380.1 1262,381.0 1263,381.2 1264,381.3 1265,381.2 1266,381.6 1267,381.5 1268,381.4 1269,381.6 1270,381.4 1271,380.9 1272,381.5 1273,381.2 1274,381.5 1275,381.4 1276,380.7 1277,381.3 1278,381.5 1279,380.9 1280,381.4 1281,381.4 1282,380.8 1283,381.6 1284,381.4 1285,381.5 1286,378.3 1287,381.3 1288,380.5 1289,381.2 1290,381.3 1291,380.8 1292,380.9 1293,376.1 1294,381.4 1295,381.4 1296,381.3 1297,380.8 1298,380.7 1299,381.5 1300,381.0 1301,381.4 1302,380.9 1303,381.4 1304,380.9 1305,381.6 1306,381.0 1307,380.7 1308,381.4 1309,381.6 1310,381.5 1311,381.0 1312,379.4 1313,381.3 1314,381.5 1315,381.5 1316,381.3 1317,381.0 1318,381.1 1319,381.6 1320,381.4 1321,381.0 1322,381.1 1323,380.1 1324,380.7 1325,381.3 1326,381.3 1327,381.3 1328,381.0 1329,381.5 1330,381.3 1331,381.6 1332,381.0 1333,381.2 1334,381.5 1335,380.7 1336,380.4 1337,381.1 1338,381.3 1339,381.2 1340,381.4 1341,381.6 1342,380.0 1343,381.1 1344,381.4 1345,380.8 1346,381.4 1347,381.4 1348,381.0 1349,381.3 1350,381.1 1351,381.4 1352,380.1 1353,381.3 1354,381.4 1355,381.0 1356,381.1 1357,380.8 1358,381.5 1359,381.5 1360,381.5 1361,381.4 1362,381.2 1363,381.2 1364,381.4 1365,376.6 1366,380.7 1367,381.5 1368,381.4 1369,381.6 1370,381.6 1371,381.4 1372,381.3 1373,381.4 1374,380.8 1375,380.3 1376,381.5 1377,381.0 1378,380.9 1379,381.5 1380,381.2 1381,381.2 1382,381.0 1383,380.5 1384,381.0 1385,380.9 1386,380.2 1387,381.0 1388,381.2 1389,380.8 1390,381.1 1391,380.8 1392,380.3 1393,381.1 1394,380.8 1395,380.7 1396,381.1 1397,381.0 1398,380.7 1399,381.2 1400,381.2 1401,380.7 1402,381.5 1403,380.3 1404,381.3 1405,380.8 1406,380.6 1407,381.1 1408,381.3 1409,381.1 1410,381.1 1411,380.8 1412,381.5 1413,381.0 1414,381.3 1415,380.9 1416,381.2 1417,380.4 1418,380.6 1419,381.4 1420,380.0 1421,380.9 1422,381.5 1423,380.7 1424,381.3 1425,381.3 1426,381.1 1427,381.5 1428,380.7 1429,381.0 1430,380.9 1431,380.5 1432,381.3 1433,381.4 1434,381.6 1435,381.1 1436,381.1 1437,380.7 1438,381.4 1439,381.4 1440,381.4 1441,381.2 1442,381.4 1443,380.9 1444,381.5 1445,381.6 1446,380.9 1447,380.6 1448,380.7 1449,381.1 1450,381.0 1451,380.4 1452,381.3 1453,381.0 1454,381.1 1455,381.1 1456,381.2 1457,381.1 1458,380.9 1459,381.4 1460,381.5 1461,381.3 1462,381.0 1463,380.4 1464,381.5 1465,381.0 1466,380.6 1467,381.5 1468,380.2 1469,380.1 1470,380.5 1471,381.4 1472,381.5 1473,381.2 1474,380.6 1475,381.2 1476,381.1 1477,381.0 1478,381.4 1479,381.5 1480,381.5 1481,380.9 1482,381.0 1483,381.0 1484,380.9 1485,381.1 1486,380.4 1487,381.6 1488,381.4 1489,381.1 1490,381.2 1491,381.0 1492,381.4 1493,381.2 1494,381.4 1495,381.4 1496,381.5 1497,381.4 1498,381.6 1499,381.4 1500,381.0 1501,381.1 1502,381.5 1503,380.7 1504,381.3 1505,380.6 1506,381.6 1507,381.6 1508,381.0 1509,380.0 1510,380.5 1511,381.3 1512,381.2 1513,381.5 1514,381.3 1515,381.5 1516,381.6 1517,381.5 1518,381.6 1519,381.2 1520,381.1 1521,375.8 1522,381.0 1523,381.3 1524,381.1 1525,380.8 1526,381.6 1527,380.7 1528,380.7 1529,380.9 1530,381.0 1531,380.8 1532,381.2 1533,381.6 1534,381.2 1535,381.1 1536,378.4 1537,381.4 1538,381.3 1539,380.6 1540,381.4 1541,381.6 1542,381.5 1543,380.8 1543,387.9 1542,387.0 1541,387.8 1540,387.5 1539,387.5 1538,387.9 1537,387.4 1536,387.3 1535,387.5 1534,388.2 1533,388.1 1532,387.1 1531,390.8 1530,388.0 1529,387.0 1528,387.4 1527,387.6 1526,388.1 1525,388.0 1524,388.1 1523,388.3 1522,387.5 1521,387.8 1520,387.4 1519,387.2 1518,387.2 1517,387.5 1516,387.1 1515,387.8 1514,387.3 1513,387.2 1512,387.3 1511,387.5 1510,387.6 1509,387.1 1508,387.3 1507,387.1 1506,387.2 1505,388.1 1504,387.4 1503,387.2 1502,387.8 1501,387.6 1500,387.2 1499,387.4 1498,387.8 1497,387.2 1496,387.8 1495,387.5 1494,387.0 1493,387.2 1492,387.7 1491,393.5 1490,387.2 1489,387.2 1488,387.5 1487,388.1 1486,387.3 1485,387.1 1484,387.6 1483,387.2 1482,387.4 1481,387.7 1480,387.2 1479,387.0 1478,387.8 1477,387.9 1476,387.2 1475,387.3 1474,387.8 1473,388.4 1472,387.4 1471,387.1 1470,387.3 1469,387.1 1468,388.2 1467,387.0 1466,387.2 1465,387.6 1464,387.4 1463,387.3 1462,387.5 1461,387.0 1460,387.1 1459,387.5 1458,387.1 1457,387.6 1456,387.2 1455,387.6 1454,387.6 1453,387.6 1452,387.0 1451,387.3 1450,387.7 1449,387.5 1448,387.5 1447,388.1 1446,387.5 1445,388.1 1444,387.3 1443,388.1 1442,387.3 1441,387.5 1440,387.6 1439,387.9 1438,387.6 1437,387.2 1436,387.6 1435,387.1 1434,387.6 1433,387.3 1432,387.1 1431,387.0 1430,387.1 1429,387.2 1428,387.8 1427,387.2 1426,388.9 1425,387.5 1424,387.8 1423,387.3 1422,388.6 1421,387.3 1420,387.3 1419,387.1 1418,387.1 1417,387.2 1416,387.5 1415,388.0 1414,387.4 1413,387.3 1412,387.7 1411,388.2 1410,387.0 1409,387.2 1408,387.6 1407,387.3 1406,387.3 1405,387.6 1404,387.4 1403,387.0 1402,387.0 1401,387.1 1400,387.4 1399,387.6 1398,387.3 1397,387.4 1396,387.1 1395,387.1 1394,387.5 1393,387.8 1392,387.3 1391,387.5 1390,387.6 1389,388.0 1388,387.5 1387,387.5 1386,387.5 1385,390.2 1384,387.4 1383,387.5 1382,387.4 1381,387.7 1380,387.6 1379,387.1 1378,387.0 1377,387.0 1376,387.7 1375,387.5 1374,387.2 1373,387.1 1372,387.5 1371,387.5 1370,392.7 1369,388.1 1368,388.0 1367,387.4 1366,387.6 1365,387.2 1364,387.3 1363,387.5 1362,387.2 1361,387.7 1360,387.2 1359,387.7 1358,387.0 1357,387.7 1356,387.1 1355,389.6 1354,387.2 1353,388.0 1352,387.3 1351,387.1 1350,388.0 1349,387.1 1348,387.8 1347,387.1 1346,388.2 1345,387.6 1344,391.9 1343,387.4 1342,387.1 1341,388.0 1340,387.0 1339,388.1 1338,387.1 1337,387.5 1336,387.4 1335,387.8 1334,388.3 1333,387.6 1332,388.0 1331,387.3 1330,387.6 1329,387.3 1328,387.3 1327,387.0 1326,387.3 1325,388.3 1324,387.4 1323,387.3 1322,387.6 1321,387.1 1320,387.6 1319,390.2 1318,387.1 1317,391.3 1316,387.6 1315,387.3 1314,387.1 1313,387.6 1312,387.1 1311,387.0 1310,388.0 1309,387.4 1308,387.8 1307,388.5 1306,387.2 1305,387.8 1304,387.3 1303,390.2 1302,388.0 1301,387.4 1300,387.8 1299,387.8 1298,387.6 1297,387.4 1296,387.5 1295,387.3 1294,387.1 1293,387.2 1292,387.6 1291,387.0 1290,388.1 1289,387.0 1288,387.1 1287,387.6 1286,387.3 1285,390.1 1284,387.2 1283,387.0 1282,387.4 1281,387.7 1280,387.4 1279,388.0 1278,387.8 1277,387.9 1276,387.3 1275,387.1 1274,387.8 1273,388.2 1272,387.5 1271,387.0 1270,387.0 1269,387.4 1268,388.4 1267,388.1 1266,387.0 1265,387.0 1264,387.0 1263,388.0 1262,387.0 1261,387.7 1260,387.4 1259,387.7 1258,387.3 1257,387.1 1256,387.5 1255,387.7 1254,387.5 1253,387.1 1252,387.7 1251,388.1 1250,387.1 1249,387.4 1248,387.6 1247,387.5 1246,387.2 1245,387.9 1244,387.4 1243,387.4 1242,387.4 1241,387.7 1240,387.5 1239,387.4 1238,387.4 1237,387.5 1236,387.0 1235,387.3 1234,387.9 1233,387.3 1232,393.0 1231,387.3 1230,389.8 1229,388.1 1228,388.1 1227,387.5 1226,387.2 1225,387.3 1224,387.0 1223,387.5 1222,387.2 1221,387.6 1220,387.1 1219,387.4 1218,387.2 1217,387.1 1216,387.4 1215,387.3 1214,387.2 1213,387.3 1212,387.2 1211,387.0 1210,387.0 1209,388.0 1208,387.2 1207,387.7 1206,387.3 1205,387.1 1204,387.4 1203,387.8 1202,387.1 1201,387.2 1200,387.2 1199,387.6 1198,387.2 1197,387.1 1196,388.1 1195,387.1 1194,387.0 1193,387.2 1192,387.5 1191,387.5 1190,387.1 1189,387.2 1188,387.6 1187,387.1 1186,387.8 1185,387.7 1184,387.2 1183,387.0 1182,387.5 1181,387.2 1180,387.6 1179,387.1 1178,387.3 1177,387.4 1176,387.3 1175,388.0 1174,387.6 1173,387.3 1172,387.7 1171,388.2 1170,387.2 1169,387.2 1168,387.4 1167,388.0 1166,388.1 1165,387.6 1164,390.3 1163,387.1 1162,387.2 1161,387.6 1160,387.2 1159,387.4 1158,387.3 1157,387.1 1156,387.3 1155,387.6 1154,387.5 1153,388.7 1152,387.2 1151,387.1 1150,387.9 1149,387.5 1148,387.7 1147,387.1 1146,392.6 1145,387.2 1144,387.9 1143,387.1 1142,387.6 1141,387.1 1140,387.5 1139,387.3 1138,387.4 1137,387.8 1136,387.8 1135,387.1 1134,387.4 1133,387.2 1132,387.9 1131,387.2 1130,387.3 1129,387.3 1128,387.9 1127,387.5 1126,387.1 1125,387.5 1124,388.1 1123,388.0 1122,387.7 1121,387.7 1120,387.1 1119,387.4 1118,393.0 1117,387.2 1116,387.5 1115,387.4 1114,387.5 1113,387.9 1112,387.3 1111,387.9 1110,387.3 1109,387.5 1108,387.1 1107,387.4 1106,387.1 1105,387.5 1104,387.7 1103,387.9 1102,387.0 1101,387.2 1100,387.0 1099,387.0 1098,387.7 1097,387.4 1096,387.2 1095,393.3 1094,387.1 1093,387.1 1092,387.6 1091,387.1 1090,387.2 1089,387.4 1088,387.8 1087,387.1 1086,388.0 1085,387.4 1084,388.3 1083,387.2 1082,387.3 1081,387.3 1080,387.2 1079,387.9 1078,387.8 1077,387.5 1076,387.2 1075,387.2 1074,387.1 1073,388.1 1072,387.7 1071,387.4 1070,387.3 1069,387.1 1068,392.9 1067,387.5 1066,387.9 1065,388.2 1064,387.2 1063,387.9 1062,387.3 1061,387.4 1060,387.4 1059,387.9 1058,387.7 1057,387.7 1056,387.4 1055,387.1 1054,392.6 1053,387.8 1052,387.9 1051,387.8 1050,391.2 1049,387.7 1048,387.5 1047,387.9 1046,388.0 1045,387.6 1044,387.0 1043,387.3 1042,387.5 1041,387.4 1040,387.3 1039,388.2 1038,387.2 1037,387.0 1036,387.2 1035,387.2 1034,387.6 1033,387.1 1032,387.9 1031,387.6 1030,387.9 1029,387.7 1028,387.5 1027,392.8 1026,387.1 1025,387.7 1024,387.0 1023,388.4 1022,387.4 1021,387.0 1020,387.0 1019,387.4 1018,387.7 1017,387.6 1016,387.4 1015,387.4 1014,388.0 1013,387.1 1012,388.0 1011,387.5 1010,387.2 1009,387.3 1008,387.3 1007,387.7 1006,387.3 1005,387.8 1004,388.1 1003,388.2 1002,387.8 1001,387.2 1000,392.9 999,387.9 998,387.1 997,387.3 996,387.4 995,387.1 994,388.4 993,387.9 992,387.1 991,387.7 990,387.9 989,387.9 988,387.1 987,390.5 986,387.2 985,387.1 984,387.5 983,387.4 982,387.3 981,387.5 980,387.3 979,387.7 978,388.1 977,387.5 976,387.8 975,391.2 974,387.5 973,387.1 972,387.7 971,387.0 970,387.8 969,387.8 968,391.1 967,387.8 966,388.3 965,387.2 964,387.7 963,387.2 962,388.2 961,387.8 960,388.2 959,387.8 958,387.8 957,387.1 956,387.7 955,387.8 954,387.1 953,387.4 952,387.5 951,392.9 950,387.6 949,387.4 948,387.2 947,387.6 946,388.0 945,387.1 944,388.1 943,388.0 942,388.9 941,387.0 940,387.9 939,387.4 938,387.2 937,387.2 936,387.6 935,387.3 934,387.9 933,387.8 932,388.1 931,387.7 930,387.0 929,387.7 928,387.5 927,387.6 926,387.5 925,387.2 924,387.8 923,388.1 922,387.8 921,387.1 920,387.0 919,387.1 918,387.5 917,387.3 916,387.2 915,387.6 914,387.5 913,387.4 912,387.5 911,387.8 910,387.4 909,387.5 908,387.5 907,387.1 906,387.3 905,388.0 904,387.3 903,387.1 902,387.4 901,387.1 900,387.1 899,387.3 898,387.2 897,387.5 896,387.1 895,387.2 894,387.2 893,387.6 892,388.9 891,387.0 890,387.9 889,387.5 888,387.2 887,388.0 886,387.6 885,387.0 884,387.8 883,388.0 882,387.2 881,387.0 880,387.6 879,387.2 878,387.0 877,387.1 876,388.0 875,387.5 874,387.3 873,387.0 872,387.6 871,387.3 870,387.9 869,387.3 868,387.5 867,387.3 866,387.2 865,387.2 864,387.6 863,388.0 862,387.6 861,387.3 860,387.7 859,387.5 858,387.0 857,388.3 856,387.2 855,387.1 854,387.3 853,387.4 852,393.6 851,387.2 850,387.5 849,387.5 848,387.7 847,387.8 846,387.8 845,387.5 844,387.6 843,387.9 842,387.3 841,387.8 840,387.1 839,387.6 838,387.6 837,387.5 836,387.5 835,387.6 834,387.8 833,387.7 832,387.3 831,387.6 830,387.9 829,387.3 828,389.7 827,388.0 826,387.2 825,387.8 824,387.2 823,388.0 822,387.8 821,388.2 820,387.6 819,387.4 818,387.1 817,387.2 816,387.3 815,392.5 814,387.0 813,387.3 812,387.9 811,387.2 810,387.4 809,387.3 808,387.2 807,388.2 806,387.0 805,387.2 804,388.4 803,387.1 802,387.7 801,388.0 800,387.8 799,387.6 798,388.1 797,387.0 796,387.7 795,387.1 794,387.0 793,387.2 792,387.1 791,387.2 790,387.6 789,387.0 788,387.0 787,387.3 786,387.6 785,387.0 784,387.7 783,387.5 782,387.3 781,387.8 780,387.0 779,387.4 778,387.6 777,387.4 776,387.3 775,387.5 774,387.4 773,387.2 772,387.7 771,387.8 770,387.6 769,387.1 768,387.8 767,387.6 766,387.4 765,387.7 764,387.2 763,387.2 762,387.6 761,387.9 760,387.3 759,388.0 758,387.4 757,387.6 756,387.3 755,388.0 754,387.3 753,387.6 752,387.3 751,388.5 750,387.1 749,388.2 748,388.0 747,390.3 746,390.8 745,387.9 744,387.8 743,387.7 742,392.8 741,387.6 740,387.6 739,387.3 738,387.3 737,390.3 736,387.0 735,388.1 734,387.6 733,387.5 732,387.7 731,388.4 730,387.9 729,387.1 728,387.8 727,388.3 726,387.2 725,387.0 724,387.8 723,387.5 722,387.1 721,387.0 720,387.3 719,387.3 718,387.7 717,387.2 716,387.7 715,387.0 714,387.6 713,387.0 712,388.0 711,387.8 710,387.5 709,387.4 708,387.3 707,388.3 706,387.2 705,387.5 704,388.0 703,387.5 702,387.4 701,387.7 700,387.0 699,387.1 698,387.1 697,387.9 696,387.4 695,387.1 694,387.2 693,387.3 692,388.6 691,387.1 690,387.6 689,387.2 688,391.9 687,387.7 686,388.2 685,387.7 684,387.8 683,387.2 682,387.4 681,390.1 680,387.4 679,387.6 678,387.5 677,387.3 676,387.0 675,387.1 674,387.2 673,387.5 672,387.9 671,387.8 670,387.4 669,387.6 668,393.4 667,387.3 666,388.5 665,387.2 664,387.1 663,387.6 662,387.2 661,387.3 660,387.4 659,388.6 658,387.9 657,387.2 656,388.1 655,388.0 654,387.8 653,387.5 652,387.0 651,387.3 650,387.4 649,387.1 648,387.9 647,387.1 646,388.2 645,387.4 644,388.2 643,387.7 642,387.5 641,387.2 640,387.4 639,387.5 638,387.1 637,387.2 636,387.2 635,387.4 634,387.1 633,387.1 632,387.6 631,387.8 630,387.1 629,387.1 628,387.3 627,387.3 626,387.2 625,387.2 624,388.1 623,388.0 622,387.6 621,387.9 620,387.1 619,387.4 618,387.3 617,387.5 616,387.4 615,387.9 614,387.6 613,387.3 612,387.4 611,387.7 610,387.7 609,387.3 608,387.3 607,387.8 606,387.1 605,387.2 604,387.3 603,387.1 602,387.2 601,387.3 600,387.4 599,387.5 598,387.2 597,387.2 596,387.5 595,387.6 594,387.0 593,387.3 592,387.1 591,387.1 590,387.0 589,387.3 588,387.5 587,388.1 586,387.4 585,387.9 584,387.5 583,387.2 582,387.3 581,387.3 580,387.3 579,387.9 578,388.0 577,387.6 576,387.3 575,387.5 574,387.7 573,387.1 572,387.6 571,387.1 570,388.7 569,387.1 568,390.2 567,391.7 566,388.1 565,387.1 564,387.7 563,387.5 562,391.8 561,387.3 560,387.3 559,387.5 558,387.9 557,387.3 556,387.1 555,387.3 554,387.8 553,391.1 552,387.2 551,387.4 550,387.5 549,387.9 548,387.9 547,387.8 546,387.5 545,387.1 544,387.1 543,388.2 542,387.2 541,387.2 540,387.6 539,387.3 538,387.2 537,387.0 536,387.7 535,388.5 534,387.3 533,387.1 532,387.7 531,393.0 530,387.3 529,387.2 528,387.4 527,388.2 526,387.3 525,387.1 524,387.0 523,391.7 522,387.9 521,387.2 520,387.2 519,387.4 518,387.2 517,387.8 516,387.3 515,387.2 514,387.0 513,387.2 512,387.1 511,387.1 510,387.4 509,387.4 508,388.1 507,387.6 506,387.7 505,387.1 504,387.6 503,387.2 502,387.7 501,387.0 500,387.9 499,387.1 498,387.3 497,387.6 496,388.0 495,387.5 494,387.1 493,387.7 492,388.5 491,387.5 490,387.8 489,388.8 488,390.5 487,387.5 486,387.6 485,387.4 484,387.5 483,387.7 482,387.3 481,387.6 480,388.6 479,387.1 478,387.4 477,387.3 476,387.5 475,387.1 474,388.1 473,387.5 472,387.8 471,387.1 470,388.0 469,387.9 468,387.2 467,387.6 466,387.6 465,392.9 464,387.2 463,387.6 462,387.9" fill="#e4264a"/><rect x="462" y="382.3" width="1081.5" height="4.0" fill="#f03458"/><path d="M463.20 492.3V558.0M465.90 492.3V558.0M468.61 492.3V558.0M471.31 492.3V558.0M474.02 492.3V558.0M476.72 492.3V558.0M479.43 492.3V558.0M482.13 492.3V558.0M484.84 492.3V558.0M487.54 492.3V558.0M490.25 492.3V558.0M492.95 492.3V558.0M495.66 492.3V558.0M498.36 492.3V558.0M501.07 492.3V558.0M503.77 492.3V558.0M506.48 492.3V558.0M509.18 492.3V558.0M511.89 492.3V558.0M514.59 492.3V558.0M517.30 492.3V558.0M520.00 492.3V558.0M522.71 492.3V558.0M525.41 492.3V558.0M528.12 492.3V558.0M530.82 492.3V558.0M533.53 492.3V558.0M536.24 492.3V558.0M538.94 492.3V558.0M541.65 492.3V558.0M544.35 492.3V558.0M547.06 492.3V558.0M549.76 492.3V558.0M552.47 492.3V558.0M555.17 492.3V558.0M557.88 492.3V558.0M560.58 492.3V558.0M563.29 492.3V558.0M565.99 492.3V558.0M568.70 492.3V558.0M571.40 492.3V558.0M574.11 492.3V558.0M576.81 492.3V558.0M579.52 492.3V558.0M582.22 492.3V558.0M584.93 492.3V558.0M587.63 492.3V558.0M590.34 492.3V558.0M593.04 492.3V558.0M595.75 492.3V558.0M598.45 492.3V558.0M601.16 492.3V558.0M603.86 492.3V558.0M606.57 492.3V558.0M609.27 492.3V558.0M611.98 492.3V558.0M614.68 492.3V558.0M617.39 492.3V558.0M620.09 492.3V558.0M622.80 492.3V558.0M625.50 492.3V558.0M628.21 492.3V558.0M630.91 492.3V558.0M633.62 492.3V558.0M636.32 492.3V558.0M639.03 492.3V558.0M641.73 492.3V558.0M644.44 492.3V558.0M647.14 492.3V558.0M649.85 492.3V558.0M652.55 492.3V558.0M655.26 492.3V558.0M657.96 492.3V558.0M660.67 492.3V558.0M663.37 492.3V558.0M666.08 492.3V558.0M668.78 492.3V558.0M671.49 492.3V558.0M674.19 492.3V558.0M676.90 492.3V558.0M679.60 492.3V558.0M682.31 492.3V558.0M685.01 492.3V558.0M687.72 492.3V558.0M690.42 492.3V558.0M693.13 492.3V558.0M695.83 492.3V558.0M698.54 492.3V558.0M701.24 492.3V558.0M703.95 492.3V558.0M706.65 492.3V558.0M709.36 492.3V558.0M712.06 492.3V558.0M714.77 492.3V558.0M717.47 492.3V558.0M720.18 492.3V558.0M722.88 492.3V558.0M725.59 492.3V558.0M728.29 492.3V558.0M731.00 492.3V558.0M733.70 492.3V558.0M736.41 492.3V558.0M739.11 492.3V558.0M741.82 492.3V558.0M744.52 492.3V558.0M747.23 492.3V558.0M749.93 492.3V558.0M752.64 492.3V558.0M755.34 492.3V558.0M758.05 492.3V558.0M760.75 492.3V558.0M763.46 492.3V558.0M766.16 492.3V558.0M768.87 492.3V558.0M771.57 492.3V558.0M774.28 492.3V558.0M776.98 492.3V558.0M779.69 492.3V558.0M782.39 492.3V558.0M785.10 492.3V558.0M787.80 492.3V558.0M790.51 492.3V558.0M793.21 492.3V558.0M795.92 492.3V558.0M798.62 492.3V558.0M801.33 492.3V558.0M804.03 492.3V558.0M806.74 492.3V558.0M809.44 492.3V558.0M812.15 492.3V558.0M814.85 492.3V558.0M817.56 492.3V558.0M820.26 492.3V558.0M822.97 492.3V558.0M825.67 492.3V558.0M828.38 492.3V558.0M831.08 492.3V558.0M833.79 492.3V558.0M836.49 492.3V558.0M839.20 492.3V558.0M841.90 492.3V558.0M844.61 492.3V558.0M847.31 492.3V558.0M850.02 492.3V558.0M852.72 492.3V558.0M855.43 492.3V558.0M858.13 492.3V558.0M860.84 492.3V558.0M863.54 492.3V558.0M866.25 492.3V558.0M868.95 492.3V558.0M871.66 492.3V558.0M874.36 492.3V558.0M877.07 492.3V558.0M879.77 492.3V558.0M882.48 492.3V558.0M885.18 492.3V558.0M887.89 492.3V558.0M890.59 492.3V558.0M893.30 492.3V558.0M896.00 492.3V558.0M898.71 492.3V558.0M901.41 492.3V558.0M904.12 492.3V558.0M906.82 492.3V558.0M909.53 492.3V558.0M912.23 492.3V558.0M914.94 492.3V558.0M917.64 492.3V558.0M920.35 492.3V558.0M923.05 492.3V558.0M925.76 492.3V558.0M928.46 492.3V558.0M931.17 492.3V558.0M933.87 492.3V558.0M936.58 492.3V558.0M939.28 492.3V558.0M941.99 492.3V558.0M944.69 492.3V558.0M947.40 492.3V558.0M950.10 492.3V558.0M952.81 492.3V558.0M955.51 492.3V558.0M958.22 492.3V558.0M960.92 492.3V558.0M963.63 492.3V558.0M966.33 492.3V558.0M969.04 492.3V558.0M971.74 492.3V558.0M974.45 492.3V558.0M977.15 492.3V558.0M979.86 492.3V558.0M982.56 492.3V558.0M985.27 492.3V558.0M987.97 492.3V558.0M990.68 492.3V558.0M993.38 492.3V558.0M996.09 492.3V558.0M998.79 492.3V558.0M1001.50 492.3V558.0M1004.20 492.3V558.0M1006.91 492.3V558.0M1009.61 492.3V558.0M1012.32 492.3V558.0M1015.02 492.3V558.0M1017.73 492.3V558.0M1020.43 492.3V558.0M1023.14 492.3V558.0M1025.84 492.3V558.0M1028.55 492.3V558.0M1031.25 492.3V558.0M1033.96 492.3V558.0M1036.66 492.3V558.0M1039.37 492.3V558.0M1042.07 492.3V558.0M1044.78 492.3V558.0M1047.48 492.3V558.0M1050.19 492.3V558.0M1052.89 492.3V558.0M1055.60 492.3V558.0M1058.30 492.3V558.0M1061.01 492.3V558.0M1063.71 492.3V558.0M1066.42 492.3V558.0M1069.12 492.3V558.0M1071.83 492.3V558.0M1074.53 492.3V558.0M1077.24 492.3V558.0M1079.94 492.3V558.0M1082.65 492.3V558.0M1085.35 492.3V558.0M1088.06 492.3V558.0M1090.76 492.3V558.0M1093.47 492.3V558.0M1096.17 492.3V558.0M1098.88 492.3V558.0M1101.58 492.3V558.0M1104.29 492.3V558.0M1106.99 492.3V558.0M1109.70 492.3V558.0M1112.40 492.3V558.0M1115.11 492.3V558.0M1117.81 492.3V558.0M1120.52 492.3V558.0M1123.22 492.3V558.0M1125.93 492.3V558.0M1128.63 492.3V558.0M1131.34 492.3V558.0M1134.04 492.3V558.0M1136.75 492.3V558.0M1139.45 492.3V558.0M1142.16 492.3V558.0M1144.86 492.3V558.0M1147.57 492.3V558.0M1150.27 492.3V558.0M1152.98 492.3V558.0M1155.68 492.3V558.0M1158.39 492.3V558.0M1161.09 492.3V558.0M1163.80 492.3V558.0M1166.50 492.3V558.0M1169.21 492.3V558.0M1171.91 492.3V558.0M1174.62 492.3V558.0M1177.32 492.3V558.0M1180.03 492.3V558.0M1182.73 492.3V558.0M1185.44 492.3V558.0M1188.14 492.3V558.0M1190.85 492.3V558.0M1193.55 492.3V558.0M1196.26 492.3V558.0M1198.96 492.3V558.0M1201.67 492.3V558.0M1204.37 492.3V558.0M1207.08 492.3V558.0M1209.78 492.3V558.0M1212.49 492.3V558.0M1215.19 492.3V558.0M1217.90 492.3V558.0M1220.60 492.3V558.0M1223.31 492.3V558.0M1226.01 492.3V558.0M1228.72 492.3V558.0M1231.42 492.3V558.0M1234.13 492.3V558.0M1236.83 492.3V558.0M1239.54 492.3V558.0M1242.24 492.3V558.0M1244.95 492.3V558.0M1247.65 492.3V558.0M1250.36 492.3V558.0M1253.06 492.3V558.0M1255.77 492.3V558.0M1258.47 492.3V558.0M1261.18 492.3V558.0M1263.88 492.3V558.0M1266.59 492.3V558.0M1269.29 492.3V558.0M1272.00 492.3V558.0M1274.70 492.3V558.0M1277.41 492.3V558.0M1280.11 492.3V558.0M1282.82 492.3V558.0M1285.52 492.3V558.0M1288.23 492.3V558.0M1290.93 492.3V558.0M1293.64 492.3V558.0M1296.34 492.3V558.0M1299.05 492.3V558.0M1301.75 492.3V558.0M1304.45 492.3V558.0M1307.16 492.3V558.0M1309.86 492.3V558.0M1312.57 492.3V558.0M1315.27 492.3V558.0M1317.98 492.3V558.0M1320.68 492.3V558.0M1323.39 492.3V558.0M1326.09 492.3V558.0M1328.80 492.3V558.0M1331.50 492.3V558.0M1334.21 492.3V558.0M1336.91 492.3V558.0M1339.62 492.3V558.0M1342.32 492.3V558.0M1345.03 492.3V558.0M1347.73 492.3V558.0M1350.44 492.3V558.0M1353.14 492.3V558.0M1355.85 492.3V558.0M1358.55 492.3V558.0M1361.26 492.3V558.0M1363.96 492.3V558.0M1366.67 492.3V558.0M1369.37 492.3V558.0M1372.08 492.3V558.0M1374.78 492.3V558.0M1377.49 492.3V558.0M1380.19 492.3V558.0M1382.90 492.3V558.0M1385.60 492.3V558.0M1388.31 492.3V558.0M1391.01 492.3V558.0M1393.72 492.3V558.0M1396.42 492.3V558.0M1399.13 492.3V558.0M1401.83 492.3V558.0M1404.54 492.3V558.0M1407.24 492.3V558.0M1409.95 492.3V558.0M1412.65 492.3V558.0M1415.36 492.3V558.0M1418.06 492.3V558.0M1420.77 492.3V558.0M1423.47 492.3V558.0M1426.18 492.3V558.0M1428.88 492.3V558.0M1431.59 492.3V558.0M1434.29 492.3V558.0M1437.00 492.3V558.0M1439.70 492.3V558.0M1442.41 492.3V558.0M1445.11 492.3V558.0M1447.82 492.3V558.0M1450.52 492.3V558.0M1453.23 492.3V558.0M1455.93 492.3V558.0M1458.64 492.3V558.0M1461.34 492.3V558.0M1464.05 492.3V558.0M1466.75 492.3V558.0M1469.46 492.3V558.0M1472.16 492.3V558.0M1474.87 492.3V558.0M1477.57 492.3V558.0M1480.28 492.3V558.0M1482.98 492.3V558.0M1485.69 492.3V558.0M1488.39 492.3V558.0M1491.10 492.3V558.0M1493.80 492.3V558.0M1496.51 492.3V558.0M1499.21 492.3V558.0M1501.92 492.3V558.0M1504.62 492.3V558.0M1507.33 492.3V558.0M1510.03 492.3V558.0M1512.74 492.3V558.0M1515.44 492.3V558.0M1518.15 492.3V558.0M1520.85 492.3V558.0M1523.56 492.3V558.0M1526.26 492.3V558.0M1528.97 492.3V558.0M1531.67 492.3V558.0M1534.38 492.3V558.0M1537.08 492.3V558.0M1539.79 492.3V558.0M1542.49 492.3V558.0" stroke="#4e6e18" stroke-width="0.8" fill="none"/><path d="M463.40 492.3h2.21M468.81 492.3h2.21M474.22 492.3h2.21M479.63 492.3h2.21M485.04 492.3h2.21M490.45 492.3h2.21M495.86 492.3h2.21M501.27 492.3h2.21M506.68 492.3h2.21M512.09 492.3h2.21M517.50 492.3h2.21M522.91 492.3h2.21M528.32 492.3h2.21M533.73 492.3h2.21M539.14 492.3h2.21M544.55 492.3h2.21M549.96 492.3h2.21M555.37 492.3h2.21M560.78 492.3h2.21M566.19 492.3h2.21M571.60 492.3h2.21M577.01 492.3h2.21M582.42 492.3h2.21M587.83 492.3h2.21M593.24 492.3h2.21M598.65 492.3h2.21M604.06 492.3h2.21M609.47 492.3h2.21M614.88 492.3h2.21M620.29 492.3h2.21M625.70 492.3h2.21M631.11 492.3h2.21M636.52 492.3h2.21M641.93 492.3h2.21M647.34 492.3h2.21M652.75 492.3h2.21M658.16 492.3h2.21M663.57 492.3h2.21M668.98 492.3h2.21M674.39 492.3h2.21M679.80 492.3h2.21M685.21 492.3h2.21M690.62 492.3h2.21M696.03 492.3h2.21M701.44 492.3h2.21M706.85 492.3h2.21M712.26 492.3h2.21M717.67 492.3h2.21M723.08 492.3h2.21M728.49 492.3h2.21M733.90 492.3h2.21M739.31 492.3h2.21M744.72 492.3h2.21M750.13 492.3h2.21M755.54 492.3h2.21M760.95 492.3h2.21M766.36 492.3h2.21M771.77 492.3h2.21M777.18 492.3h2.21M782.59 492.3h2.21M788.00 492.3h2.21M793.41 492.3h2.21M798.82 492.3h2.21M804.23 492.3h2.21M809.64 492.3h2.21M815.05 492.3h2.21M820.46 492.3h2.21M825.87 492.3h2.21M831.28 492.3h2.21M836.69 492.3h2.21M842.10 492.3h2.21M847.51 492.3h2.21M852.92 492.3h2.21M858.33 492.3h2.21M863.74 492.3h2.21M869.15 492.3h2.21M874.56 492.3h2.21M879.97 492.3h2.21M885.38 492.3h2.21M890.79 492.3h2.21M896.20 492.3h2.21M901.61 492.3h2.21M907.02 492.3h2.21M912.43 492.3h2.21M917.84 492.3h2.21M923.25 492.3h2.21M928.66 492.3h2.21M934.07 492.3h2.21M939.48 492.3h2.21M944.89 492.3h2.21M950.30 492.3h2.21M955.71 492.3h2.21M961.12 492.3h2.21M966.53 492.3h2.21M971.94 492.3h2.21M977.35 492.3h2.21M982.76 492.3h2.21M988.17 492.3h2.21M993.58 492.3h2.21M998.99 492.3h2.21M1004.40 492.3h2.21M1009.81 492.3h2.21M1015.22 492.3h2.21M1020.63 492.3h2.21M1026.04 492.3h2.21M1031.45 492.3h2.21M1036.86 492.3h2.21M1042.27 492.3h2.21M1047.68 492.3h2.21M1053.09 492.3h2.21M1058.50 492.3h2.21M1063.91 492.3h2.21M1069.32 492.3h2.21M1074.73 492.3h2.21M1080.14 492.3h2.21M1085.55 492.3h2.21M1090.96 492.3h2.21M1096.37 492.3h2.21M1101.78 492.3h2.21M1107.19 492.3h2.21M1112.60 492.3h2.21M1118.01 492.3h2.21M1123.42 492.3h2.21M1128.83 492.3h2.21M1134.24 492.3h2.21M1139.65 492.3h2.21M1145.06 492.3h2.21M1150.47 492.3h2.21M1155.88 492.3h2.21M1161.29 492.3h2.21M1166.70 492.3h2.21M1172.11 492.3h2.21M1177.52 492.3h2.21M1182.93 492.3h2.21M1188.34 492.3h2.21M1193.75 492.3h2.21M1199.16 492.3h2.21M1204.57 492.3h2.21M1209.98 492.3h2.21M1215.39 492.3h2.21M1220.80 492.3h2.21M1226.21 492.3h2.21M1231.62 492.3h2.21M1237.03 492.3h2.21M1242.44 492.3h2.21M1247.85 492.3h2.21M1253.26 492.3h2.21M1258.67 492.3h2.21M1264.08 492.3h2.21M1269.49 492.3h2.21M1274.90 492.3h2.21M1280.31 492.3h2.21M1285.72 492.3h2.21M1291.13 492.3h2.21M1296.54 492.3h2.21M1301.95 492.3h2.21M1307.36 492.3h2.21M1312.77 492.3h2.21M1318.18 492.3h2.21M1323.59 492.3h2.21M1329.00 492.3h2.21M1334.41 492.3h2.21M1339.82 492.3h2.21M1345.23 492.3h2.21M1350.64 492.3h2.21M1356.05 492.3h2.21M1361.46 492.3h2.21M1366.87 492.3h2.21M1372.28 492.3h2.21M1377.69 492.3h2.21M1383.10 492.3h2.21M1388.51 492.3h2.21M1393.92 492.3h2.21M1399.33 492.3h2.21M1404.74 492.3h2.21M1410.15 492.3h2.21M1415.56 492.3h2.21M1420.97 492.3h2.21M1426.38 492.3h2.21M1431.79 492.3h2.21M1437.20 492.3h2.21M1442.61 492.3h2.21M1448.02 492.3h2.21M1453.43 492.3h2.21M1458.84 492.3h2.21M1464.25 492.3h2.21M1469.66 492.3h2.21M1475.07 492.3h2.21M1480.48 492.3h2.21M1485.89 492.3h2.21M1491.30 492.3h2.21M1496.71 492.3h2.21M1502.12 492.3h2.21M1507.53 492.3h2.21M1512.94 492.3h2.21M1518.35 492.3h2.21M1523.76 492.3h2.21M1529.17 492.3h2.21M1534.58 492.3h2.21M1539.99 492.3h2.21" stroke="#88c42a" stroke-width="2.6" fill="none"/><path d="M466.10 558.0h2.21M471.51 558.0h2.21M476.92 558.0h2.21M482.33 558.0h2.21M487.74 558.0h2.21M493.15 558.0h2.21M498.56 558.0h2.21M503.97 558.0h2.21M509.38 558.0h2.21M514.79 558.0h2.21M520.20 558.0h2.21M525.61 558.0h2.21M531.02 558.0h2.21M536.44 558.0h2.21M541.85 558.0h2.21M547.26 558.0h2.21M552.67 558.0h2.21M558.08 558.0h2.21M563.49 558.0h2.21M568.90 558.0h2.21M574.31 558.0h2.21M579.72 558.0h2.21M585.13 558.0h2.21M590.54 558.0h2.21M595.95 558.0h2.21M601.36 558.0h2.21M606.77 558.0h2.21M612.18 558.0h2.21M617.59 558.0h2.21M623.00 558.0h2.21M628.41 558.0h2.21M633.82 558.0h2.21M639.23 558.0h2.21M644.64 558.0h2.21M650.05 558.0h2.21M655.46 558.0h2.21M660.87 558.0h2.21M666.28 558.0h2.21M671.69 558.0h2.21M677.10 558.0h2.21M682.51 558.0h2.21M687.92 558.0h2.21M693.33 558.0h2.21M698.74 558.0h2.21M704.15 558.0h2.21M709.56 558.0h2.21M714.97 558.0h2.21M720.38 558.0h2.21M725.79 558.0h2.21M731.20 558.0h2.21M736.61 558.0h2.21M742.02 558.0h2.21M747.43 558.0h2.21M752.84 558.0h2.21M758.25 558.0h2.21M763.66 558.0h2.21M769.07 558.0h2.21M774.48 558.0h2.21M779.89 558.0h2.21M785.30 558.0h2.21M790.71 558.0h2.21M796.12 558.0h2.21M801.53 558.0h2.21M806.94 558.0h2.21M812.35 558.0h2.21M817.76 558.0h2.21M823.17 558.0h2.21M828.58 558.0h2.21M833.99 558.0h2.21M839.40 558.0h2.21M844.81 558.0h2.21M850.22 558.0h2.21M855.63 558.0h2.21M861.04 558.0h2.21M866.45 558.0h2.21M871.86 558.0h2.21M877.27 558.0h2.21M882.68 558.0h2.21M888.09 558.0h2.21M893.50 558.0h2.21M898.91 558.0h2.21M904.32 558.0h2.21M909.73 558.0h2.21M915.14 558.0h2.21M920.55 558.0h2.21M925.96 558.0h2.21M931.37 558.0h2.21M936.78 558.0h2.21M942.19 558.0h2.21M947.60 558.0h2.21M953.01 558.0h2.21M958.42 558.0h2.21M963.83 558.0h2.21M969.24 558.0h2.21M974.65 558.0h2.21M980.06 558.0h2.21M985.47 558.0h2.21M990.88 558.0h2.21M996.29 558.0h2.21M1001.70 558.0h2.21M1007.11 558.0h2.21M1012.52 558.0h2.21M1017.93 558.0h2.21M1023.34 558.0h2.21M1028.75 558.0h2.21M1034.16 558.0h2.21M1039.57 558.0h2.21M1044.98 558.0h2.21M1050.39 558.0h2.21M1055.80 558.0h2.21M1061.21 558.0h2.21M1066.62 558.0h2.21M1072.03 558.0h2.21M1077.44 558.0h2.21M1082.85 558.0h2.21M1088.26 558.0h2.21M1093.67 558.0h2.21M1099.08 558.0h2.21M1104.49 558.0h2.21M1109.90 558.0h2.21M1115.31 558.0h2.21M1120.72 558.0h2.21M1126.13 558.0h2.21M1131.54 558.0h2.21M1136.95 558.0h2.21M1142.36 558.0h2.21M1147.77 558.0h2.21M1153.18 558.0h2.21M1158.59 558.0h2.21M1164.00 558.0h2.21M1169.41 558.0h2.21M1174.82 558.0h2.21M1180.23 558.0h2.21M1185.64 558.0h2.21M1191.05 558.0h2.21M1196.46 558.0h2.21M1201.87 558.0h2.21M1207.28 558.0h2.21M1212.69 558.0h2.21M1218.10 558.0h2.21M1223.51 558.0h2.21M1228.92 558.0h2.21M1234.33 558.0h2.21M1239.74 558.0h2.21M1245.15 558.0h2.21M1250.56 558.0h2.21M1255.97 558.0h2.21M1261.38 558.0h2.21M1266.79 558.0h2.21M1272.20 558.0h2.21M1277.61 558.0h2.21M1283.02 558.0h2.21M1288.43 558.0h2.21M1293.84 558.0h2.21M1299.25 558.0h2.21M1304.65 558.0h2.21M1310.06 558.0h2.21M1315.47 558.0h2.21M1320.88 558.0h2.21M1326.29 558.0h2.21M1331.70 558.0h2.21M1337.11 558.0h2.21M1342.52 558.0h2.21M1347.93 558.0h2.21M1353.34 558.0h2.21M1358.75 558.0h2.21M1364.16 558.0h2.21M1369.57 558.0h2.21M1374.98 558.0h2.21M1380.39 558.0h2.21M1385.80 558.0h2.21M1391.21 558.0h2.21M1396.62 558.0h2.21M1402.03 558.0h2.21M1407.44 558.0h2.21M1412.85 558.0h2.21M1418.26 558.0h2.21M1423.67 558.0h2.21M1429.08 558.0h2.21M1434.49 558.0h2.21M1439.90 558.0h2.21M1445.31 558.0h2.21M1450.72 558.0h2.21M1456.13 558.0h2.21M1461.54 558.0h2.21M1466.95 558.0h2.21M1472.36 558.0h2.21M1477.77 558.0h2.21M1483.18 558.0h2.21M1488.59 558.0h2.21M1494.00 558.0h2.21M1499.41 558.0h2.21M1504.82 558.0h2.21M1510.23 558.0h2.21M1515.64 558.0h2.21M1521.05 558.0h2.21M1526.46 558.0h2.21M1531.87 558.0h2.21M1537.28 558.0h2.21M1542.69 558.0h2.21" stroke="#88c42a" stroke-width="2.6" fill="none"/><rect x="461" y="189.3" width="1082.5" height="2" fill="#7c7c7c"/><rect x="461" y="322.8" width="1082.5" height="2" fill="#7c7c7c"/><rect x="461" y="456.8" width="1082.5" height="2" fill="#7c7c7c"/><rect x="461" y="590.2" width="1082.5" height="2" fill="#7c7c7c"/><path d="M466 159.4H1534" stroke="#d4d4d4" stroke-width="1.2" stroke-dasharray="7 4.5" fill="none"/><path d="M466 289.6H1534" stroke="#d4d4d4" stroke-width="1.2" stroke-dasharray="7 4.5" fill="none"/><path d="M466 448.4H1512" stroke="#d4d4d4" stroke-width="1.2" stroke-dasharray="7 4.5" fill="none"/><path d="M466 558.0H1534" stroke="#d4d4d4" stroke-width="1.2" stroke-dasharray="7 4.5" fill="none"/><path d="M569.3 66V722" stroke="#dcdcdc" stroke-width="1.2" stroke-dasharray="8 5" fill="none"/><path d="M461.8 459V590M466.6 459V590" stroke="#f8901e" stroke-width="1.2" stroke-dasharray="5 3" fill="none"/><path d="M559 57H579.5L569.3 66.5Z" fill="#f58a1e"/><rect x="461" y="655" width="1082.5" height="4.2" fill="#ff00ff"/><rect x="486" y="646" width="18" height="23" fill="#000"/><rect x="486" y="646" width="18" height="23" fill="#000"/><rect x="509" y="646" width="3" height="23" fill="#000"/><rect x="517" y="646" width="38" height="23" fill="#000"/><rect x="568.5" y="646" width="43.5" height="23" fill="#000"/><rect x="620" y="646" width="38" height="23" fill="#000"/><rect x="671" y="646" width="42" height="23" fill="#000"/><rect x="723" y="646" width="38" height="23" fill="#000"/><rect x="774" y="646" width="39" height="23" fill="#000"/><rect x="826" y="646" width="38" height="23" fill="#000"/><rect x="877" y="646" width="38" height="23" fill="#000"/><rect x="924" y="646" width="43" height="23" fill="#000"/><rect x="980" y="646" width="38" height="23" fill="#000"/><rect x="1024" y="646" width="3" height="23" fill="#000"/><rect x="1032" y="646" width="38" height="23" fill="#000"/><rect x="1083" y="646" width="40.5" height="23" fill="#000"/><rect x="1124.5" y="646" width="2.5" height="23" fill="#000"/><rect x="1135" y="646" width="38" height="23" fill="#000"/><rect x="1186" y="646" width="42" height="23" fill="#000"/><rect x="1238" y="646" width="10" height="23" fill="#000"/><rect x="1254" y="646" width="26" height="23" fill="#000"/><rect x="1293" y="646" width="38" height="23" fill="#000"/><rect x="1344" y="646" width="39" height="23" fill="#000"/><rect x="1396" y="646" width="38" height="23" fill="#000"/><rect x="1442" y="646" width="44" height="23" fill="#000"/><rect x="1499" y="646" width="38" height="23" fill="#000"/><rect x="1541.5" y="646" width="2.0" height="23" fill="#000"/><rect x="461" y="655" width="1082.5" height="4.2" fill="#ff00ff" opacity="0"/><path d="M486 646h1v23h-1zM488 646h1v23h-1zM490 646h1v23h-1zM492 646h1v23h-1zM494 646h1v23h-1zM496 646h1v23h-1zM498 646h1v23h-1zM500 646h1v23h-1zM502 646h1v23h-1zM509 646h1v23h-1zM511 646h1v23h-1zM517 646h1v23h-1zM521 646h1v23h-1zM523 646h1v23h-1zM525 646h3v23h-3zM529 646h1v23h-1zM531 646h1v23h-1zM535 646h3v23h-3zM539 646h1v23h-1zM541 646h1v23h-1zM543 646h2v23h-2zM546 646h2v23h-2zM549 646h1v23h-1zM551 646h1v23h-1zM553 646h2v23h-2zM568 646h1v23h-1zM570 646h1v23h-1zM572 646h1v23h-1zM574 646h3v23h-3zM580 646h6v23h-6zM587 646h1v23h-1zM589 646h4v23h-4zM594 646h1v23h-1zM596 646h2v23h-2zM599 646h1v23h-1zM601 646h1v23h-1zM603 646h1v23h-1zM605 646h7v23h-7zM620 646h1v23h-1zM622 646h1v23h-1zM624 646h1v23h-1zM626 646h1v23h-1zM628 646h10v23h-10zM641 646h1v23h-1zM645 646h1v23h-1zM647 646h2v23h-2zM650 646h1v23h-1zM652 646h6v23h-6zM671 646h1v23h-1zM673 646h1v23h-1zM675 646h1v23h-1zM677 646h1v23h-1zM679 646h1v23h-1zM681 646h1v23h-1zM685 646h1v23h-1zM687 646h1v23h-1zM689 646h1v23h-1zM691 646h1v23h-1zM693 646h3v23h-3zM697 646h6v23h-6zM704 646h6v23h-6zM711 646h2v23h-2zM723 646h1v23h-1zM725 646h1v23h-1zM727 646h6v23h-6zM734 646h1v23h-1zM736 646h1v23h-1zM738 646h3v23h-3zM742 646h4v23h-4zM747 646h6v23h-6zM754 646h1v23h-1zM756 646h1v23h-1zM758 646h1v23h-1zM760 646h1v23h-1zM774 646h2v23h-2zM777 646h10v23h-10zM788 646h2v23h-2zM793 646h2v23h-2zM796 646h8v23h-8zM805 646h2v23h-2zM808 646h1v23h-1zM810 646h3v23h-3zM826 646h3v23h-3zM830 646h2v23h-2zM833 646h1v23h-1zM835 646h2v23h-2zM838 646h8v23h-8zM847 646h10v23h-10zM858 646h1v23h-1zM860 646h4v23h-4zM877 646h10v23h-10zM888 646h1v23h-1zM890 646h1v23h-1zM892 646h1v23h-1zM896 646h1v23h-1zM898 646h2v23h-2zM901 646h1v23h-1zM903 646h3v23h-3zM909 646h1v23h-1zM911 646h1v23h-1zM913 646h2v23h-2zM924 646h2v23h-2zM927 646h2v23h-2zM930 646h1v23h-1zM934 646h1v23h-1zM936 646h1v23h-1zM938 646h10v23h-10zM949 646h1v23h-1zM951 646h1v23h-1zM953 646h4v23h-4zM958 646h1v23h-1zM960 646h7v23h-7zM980 646h2v23h-2zM983 646h1v23h-1zM985 646h1v23h-1zM987 646h1v23h-1zM989 646h1v23h-1zM993 646h1v23h-1zM995 646h2v23h-2zM1002 646h5v23h-5zM1008 646h3v23h-3zM1012 646h3v23h-3zM1016 646h1v23h-1zM1024 646h2v23h-2zM1032 646h1v23h-1zM1036 646h1v23h-1zM1038 646h8v23h-8zM1047 646h1v23h-1zM1049 646h1v23h-1zM1051 646h1v23h-1zM1053 646h1v23h-1zM1055 646h3v23h-3zM1061 646h9v23h-9zM1083 646h1v23h-1zM1085 646h4v23h-4zM1090 646h3v23h-3zM1094 646h1v23h-1zM1096 646h3v23h-3zM1100 646h1v23h-1zM1102 646h6v23h-6zM1109 646h1v23h-1zM1111 646h1v23h-1zM1115 646h1v23h-1zM1119 646h5v23h-5zM1124 646h1v23h-1zM1126 646h1v23h-1zM1135 646h1v23h-1zM1137 646h1v23h-1zM1139 646h1v23h-1zM1141 646h1v23h-1zM1143 646h3v23h-3zM1147 646h2v23h-2zM1150 646h1v23h-1zM1152 646h1v23h-1zM1154 646h1v23h-1zM1156 646h3v23h-3zM1160 646h2v23h-2zM1163 646h1v23h-1zM1167 646h1v23h-1zM1169 646h3v23h-3zM1186 646h1v23h-1zM1188 646h2v23h-2zM1191 646h1v23h-1zM1195 646h3v23h-3zM1199 646h5v23h-5zM1205 646h1v23h-1zM1207 646h1v23h-1zM1209 646h1v23h-1zM1211 646h1v23h-1zM1213 646h2v23h-2zM1218 646h1v23h-1zM1220 646h1v23h-1zM1222 646h2v23h-2zM1225 646h2v23h-2zM1238 646h1v23h-1zM1240 646h1v23h-1zM1242 646h5v23h-5zM1256 646h1v23h-1zM1258 646h1v23h-1zM1260 646h6v23h-6zM1267 646h2v23h-2zM1270 646h2v23h-2zM1273 646h6v23h-6zM1293 646h1v23h-1zM1295 646h1v23h-1zM1297 646h3v23h-3zM1301 646h3v23h-3zM1305 646h1v23h-1zM1307 646h1v23h-1zM1309 646h1v23h-1zM1311 646h1v23h-1zM1313 646h1v23h-1zM1315 646h5v23h-5zM1321 646h1v23h-1zM1323 646h2v23h-2zM1326 646h5v23h-5zM1344 646h1v23h-1zM1346 646h1v23h-1zM1348 646h2v23h-2zM1351 646h1v23h-1zM1353 646h8v23h-8zM1362 646h1v23h-1zM1364 646h4v23h-4zM1369 646h1v23h-1zM1371 646h1v23h-1zM1373 646h1v23h-1zM1375 646h6v23h-6zM1382 646h1v23h-1zM1396 646h1v23h-1zM1398 646h1v23h-1zM1400 646h1v23h-1zM1402 646h3v23h-3zM1408 646h2v23h-2zM1411 646h1v23h-1zM1413 646h1v23h-1zM1415 646h1v23h-1zM1417 646h1v23h-1zM1419 646h1v23h-1zM1421 646h3v23h-3zM1425 646h5v23h-5zM1431 646h1v23h-1zM1433 646h1v23h-1zM1442 646h1v23h-1zM1446 646h1v23h-1zM1448 646h1v23h-1zM1450 646h1v23h-1zM1454 646h1v23h-1zM1456 646h1v23h-1zM1460 646h4v23h-4zM1465 646h2v23h-2zM1470 646h10v23h-10zM1481 646h5v23h-5zM1499 646h1v23h-1zM1501 646h1v23h-1zM1503 646h1v23h-1zM1505 646h2v23h-2zM1508 646h1v23h-1zM1510 646h1v23h-1zM1512 646h1v23h-1zM1516 646h1v23h-1zM1518 646h1v23h-1zM1520 646h1v23h-1zM1522 646h3v23h-3zM1526 646h5v23h-5zM1532 646h2v23h-2zM1535 646h2v23h-2zM1542 646h2v23h-2z" fill="#fff" shape-rendering="crispEdges"/><path d="M519 646h1v23h-1zM533 646h1v23h-1zM578 646h1v23h-1zM643 646h1v23h-1zM683 646h1v23h-1zM791 646h1v23h-1zM894 646h1v23h-1zM907 646h1v23h-1zM998 646h1v23h-1zM1000 646h1v23h-1zM1034 646h1v23h-1zM1113 646h1v23h-1zM1193 646h1v23h-1zM1216 646h1v23h-1zM1254 646h1v23h-1zM1406 646h1v23h-1zM1452 646h1v23h-1zM1458 646h1v23h-1zM1468 646h1v23h-1zM1514 646h1v23h-1z" fill="#f01010" shape-rendering="crispEdges"/><path d="M639 646h1v23h-1zM932 646h1v23h-1zM991 646h1v23h-1zM1059 646h1v23h-1zM1117 646h1v23h-1zM1165 646h1v23h-1zM1444 646h1v23h-1z" fill="#10e010" shape-rendering="crispEdges"/><rect x="486" y="655.4" width="18" height="3.4" fill="#ff70ff" opacity="0.75"/><rect x="509" y="655.4" width="3" height="3.4" fill="#ff70ff" opacity="0.75"/><rect x="517" y="655.4" width="38" height="3.4" fill="#ff70ff" opacity="0.75"/><rect x="568.5" y="655.4" width="43.5" height="3.4" fill="#ff70ff" opacity="0.75"/><rect x="620" y="655.4" width="38" height="3.4" fill="#ff70ff" opacity="0.75"/><rect x="671" y="655.4" width="42" height="3.4" fill="#ff70ff" opacity="0.75"/><rect x="723" y="655.4" width="38" height="3.4" fill="#ff70ff" opacity="0.75"/><rect x="774" y="655.4" width="39" height="3.4" fill="#ff70ff" opacity="0.75"/><rect x="826" y="655.4" width="38" height="3.4" fill="#ff70ff" opacity="0.75"/><rect x="877" y="655.4" width="38" height="3.4" fill="#ff70ff" opacity="0.75"/><rect x="924" y="655.4" width="43" height="3.4" fill="#ff70ff" opacity="0.75"/><rect x="980" y="655.4" width="38" height="3.4" fill="#ff70ff" opacity="0.75"/><rect x="1024" y="655.4" width="3" height="3.4" fill="#ff70ff" opacity="0.75"/><rect x="1032" y="655.4" width="38" height="3.4" fill="#ff70ff" opacity="0.75"/><rect x="1083" y="655.4" width="40.5" height="3.4" fill="#ff70ff" opacity="0.75"/><rect x="1124.5" y="655.4" width="2.5" height="3.4" fill="#ff70ff" opacity="0.75"/><rect x="1135" y="655.4" width="38" height="3.4" fill="#ff70ff" opacity="0.75"/><rect x="1186" y="655.4" width="42" height="3.4" fill="#ff70ff" opacity="0.75"/><rect x="1238" y="655.4" width="10" height="3.4" fill="#ff70ff" opacity="0.75"/><rect x="1254" y="655.4" width="26" height="3.4" fill="#ff70ff" opacity="0.75"/><rect x="1293" y="655.4" width="38" height="3.4" fill="#ff70ff" opacity="0.75"/><rect x="1344" y="655.4" width="39" height="3.4" fill="#ff70ff" opacity="0.75"/><rect x="1396" y="655.4" width="38" height="3.4" fill="#ff70ff" opacity="0.75"/><rect x="1442" y="655.4" width="44" height="3.4" fill="#ff70ff" opacity="0.75"/><rect x="1499" y="655.4" width="38" height="3.4" fill="#ff70ff" opacity="0.75"/><rect x="1541.5" y="655.4" width="2.0" height="3.4" fill="#ff70ff" opacity="0.75"/><rect x="512.5" y="648.5" width="37" height="17.5" rx="3" fill="#3a3a3a" opacity="0.85"/><path d="M524 657.3H537M530.5 651V663.5" stroke="#777" stroke-width="1.2"/><path d="M489 596L501.5 617.5H476.5Z" fill="#e0182a" stroke="#2a2a6a" stroke-width="1.6" stroke-linejoin="round"/><path d="M489 602.5V611.5M489 613.5V615.4" stroke="#fff" stroke-width="1.9"/><path d="M560.2 593H578.4V610H572.6L569.3 618L566 610H560.2Z" fill="#000" stroke="#f58a1e" stroke-width="1.8"/><path d="M565 597.2H573.6M569.3 597.2V607" stroke="#f58a1e" stroke-width="1.9" fill="none"/><path d="M466.5 119.6H485.5Q487.5 119.6 489 121.1L499 131.6L489 142.1Q487.5 143.6 485.5 143.6H466.5Q464.8 143.6 464.8 141.6V121.6Q464.8 119.6 466.5 119.6Z" fill="#1e1c08" stroke="#e8dc10" stroke-width="1.2"/><path d="M466.5 245H485.5Q487.5 245 489 246.5L499 257L489 267.5Q487.5 269 485.5 269H466.5Q464.8 269 464.8 267V247Q464.8 245 466.5 245Z" fill="#051616" stroke="#22bcc4" stroke-width="1.2"/><path d="M466.5 373.8H485.5Q487.5 373.8 489 375.3L499 385.8L489 396.3Q487.5 397.8 485.5 397.8H466.5Q464.8 397.8 464.8 395.8V375.8Q464.8 373.8 466.5 373.8Z" fill="#1c0a0e" stroke="#e83050" stroke-width="1.2"/><path d="M466.5 504.20000000000005H485.5Q487.5 504.20000000000005 489 505.70000000000005L499 516.2L489 526.7Q487.5 528.2 485.5 528.2H466.5Q464.8 528.2 464.8 526.2V506.20000000000005Q464.8 504.20000000000005 466.5 504.20000000000005Z" fill="#8ccc30" stroke="#8ccc30" stroke-width="1.2"/><path d="M466.5 645H485.5Q487.5 645 489 646.5L499 657L489 667.5Q487.5 669 485.5 669H466.5Q464.8 669 464.8 667V647Q464.8 645 466.5 645Z" fill="#16121e" stroke="#c08cf0" stroke-width="1.2"/><path d="M1502.3 64H1534.8Q1536 64 1536 65.2V97.6Z" fill="#4f4f4f"/><circle cx="1529.1" cy="70.5" r="4" fill="none" stroke="#a4a4a4" stroke-width="1.4"/><path d="M1525.8 73.6L1520 79.4" stroke="#a8a8a8" stroke-width="2.3" stroke-linecap="round"/></svg>
<span class="t" style="left:1517.89px;top:54.00px;font-size:13.0px;letter-spacing:0.048px;color:#e8dc10;text-shadow:-1px 0 #000,1px 0 #000,0 1px #000,0 -1px #000;">7 V</span>
<span class="t" style="left:1517.89px;top:82.50px;font-size:13.0px;letter-spacing:0.048px;color:#e8dc10;text-shadow:-1px 0 #000,1px 0 #000,0 1px #000,0 -1px #000;">5 V</span>
<span class="t" style="left:1517.89px;top:109.50px;font-size:13.0px;letter-spacing:0.048px;color:#e8dc10;text-shadow:-1px 0 #000,1px 0 #000,0 1px #000,0 -1px #000;">3 V</span>
<span class="t" style="left:1517.89px;top:136.00px;font-size:13.0px;letter-spacing:0.048px;color:#e8dc10;text-shadow:-1px 0 #000,1px 0 #000,0 1px #000,0 -1px #000;">1 V</span>
<span class="t" style="left:1513.55px;top:162.00px;font-size:13.0px;letter-spacing:0.037px;color:#e8dc10;text-shadow:-1px 0 #000,1px 0 #000,0 1px #000,0 -1px #000;">-1 V</span>
<span class="t" style="left:1498.95px;top:187.00px;font-size:13.0px;letter-spacing:0.193px;color:#22bcc4;text-shadow:-1px 0 #000,1px 0 #000,0 1px #000,0 -1px #000;">5.46 V</span>
<span class="t" style="left:1498.95px;top:213.30px;font-size:13.0px;letter-spacing:0.193px;color:#22bcc4;text-shadow:-1px 0 #000,1px 0 #000,0 1px #000,0 -1px #000;">3.90 V</span>
<span class="t" style="left:1498.95px;top:240.00px;font-size:13.0px;letter-spacing:0.193px;color:#22bcc4;text-shadow:-1px 0 #000,1px 0 #000,0 1px #000,0 -1px #000;">2.34 V</span>
<span class="t" style="left:1491.19px;top:266.60px;font-size:13.0px;letter-spacing:0.303px;color:#22bcc4;text-shadow:-1px 0 #000,1px 0 #000,0 1px #000,0 -1px #000;">780 mV</span>
<span class="t" style="left:1486.81px;top:292.60px;font-size:13.0px;letter-spacing:0.259px;color:#22bcc4;text-shadow:-1px 0 #000,1px 0 #000,0 1px #000,0 -1px #000;">-780 mV</span>
<span class="t" style="left:1506.54px;top:333.00px;font-size:13.0px;letter-spacing:0.151px;color:#e83a58;text-shadow:-1px 0 #000,1px 0 #000,0 1px #000,0 -1px #000;">1.6 V</span>
<span class="t" style="left:1506.54px;top:359.50px;font-size:13.0px;letter-spacing:0.151px;color:#e83a58;text-shadow:-1px 0 #000,1px 0 #000,0 1px #000,0 -1px #000;">1.2 V</span>
<span class="t" style="left:1491.19px;top:385.30px;font-size:13.0px;letter-spacing:0.303px;color:#e83a58;text-shadow:-1px 0 #000,1px 0 #000,0 1px #000,0 -1px #000;">800 mV</span>
<span class="t" style="left:1491.19px;top:411.80px;font-size:13.0px;letter-spacing:0.303px;color:#e83a58;text-shadow:-1px 0 #000,1px 0 #000,0 1px #000,0 -1px #000;">400 mV</span>
<span class="t" style="left:1517.89px;top:438.30px;font-size:13.0px;letter-spacing:0.048px;color:#e83a58;text-shadow:-1px 0 #000,1px 0 #000,0 1px #000,0 -1px #000;">0 V</span>
<span class="t" style="left:1506.54px;top:455.20px;font-size:13.0px;letter-spacing:0.151px;color:#8cc82c;text-shadow:-1px 0 #000,1px 0 #000,0 1px #000,0 -1px #000;">3.5 V</span>
<span class="t" style="left:1506.54px;top:481.80px;font-size:13.0px;letter-spacing:0.151px;color:#8cc82c;text-shadow:-1px 0 #000,1px 0 #000,0 1px #000,0 -1px #000;">2.5 V</span>
<span class="t" style="left:1506.54px;top:508.60px;font-size:13.0px;letter-spacing:0.151px;color:#8cc82c;text-shadow:-1px 0 #000,1px 0 #000,0 1px #000,0 -1px #000;">1.5 V</span>
<span class="t" style="left:1491.19px;top:535.00px;font-size:13.0px;letter-spacing:0.303px;color:#8cc82c;text-shadow:-1px 0 #000,1px 0 #000,0 1px #000,0 -1px #000;">500 mV</span>
<span class="t" style="left:1486.81px;top:560.40px;font-size:13.0px;letter-spacing:0.259px;color:#8cc82c;text-shadow:-1px 0 #000,1px 0 #000,0 1px #000,0 -1px #000;">-500 mV</span>
<span class="t" style="left:560.51px;top:569.60px;font-size:13.0px;letter-spacing:0.120px;color:#b0b0b0;text-shadow:-1px 0 #000,1px 0 #000,0 1px #000,0 -1px #000;">0 s</span>
<span class="t" style="left:659.15px;top:569.60px;font-size:13.0px;letter-spacing:0.325px;color:#b0b0b0;text-shadow:-1px 0 #000,1px 0 #000,0 1px #000,0 -1px #000;">20 ms</span>
<span class="t" style="left:767.35px;top:569.60px;font-size:13.0px;letter-spacing:0.325px;color:#b0b0b0;text-shadow:-1px 0 #000,1px 0 #000,0 1px #000,0 -1px #000;">40 ms</span>
<span class="t" style="left:875.55px;top:569.60px;font-size:13.0px;letter-spacing:0.325px;color:#b0b0b0;text-shadow:-1px 0 #000,1px 0 #000,0 1px #000,0 -1px #000;">60 ms</span>
<span class="t" style="left:983.75px;top:569.60px;font-size:13.0px;letter-spacing:0.325px;color:#b0b0b0;text-shadow:-1px 0 #000,1px 0 #000,0 1px #000,0 -1px #000;">80 ms</span>
<span class="t" style="left:1088.14px;top:569.60px;font-size:13.0px;letter-spacing:0.338px;color:#b0b0b0;text-shadow:-1px 0 #000,1px 0 #000,0 1px #000,0 -1px #000;">100 ms</span>
<span class="t" style="left:1196.34px;top:569.60px;font-size:13.0px;letter-spacing:0.338px;color:#b0b0b0;text-shadow:-1px 0 #000,1px 0 #000,0 1px #000,0 -1px #000;">120 ms</span>
<span class="t" style="left:1304.54px;top:569.60px;font-size:13.0px;letter-spacing:0.338px;color:#b0b0b0;text-shadow:-1px 0 #000,1px 0 #000,0 1px #000,0 -1px #000;">140 ms</span>
<span class="t" style="left:1412.74px;top:569.60px;font-size:13.0px;letter-spacing:0.338px;color:#b0b0b0;text-shadow:-1px 0 #000,1px 0 #000,0 1px #000,0 -1px #000;">160 ms</span>
<span class="t" style="left:473.20px;top:121.40px;font-size:12px;letter-spacing:-0.300px;color:#e8dc10;transform:scaleX(0.9677);transform-origin:0 50%;">C 1</span>
<span class="t" style="left:473.20px;top:246.80px;font-size:12px;letter-spacing:-0.300px;color:#22c4cc;transform:scaleX(0.9677);transform-origin:0 50%;">C 2</span>
<span class="t" style="left:473.20px;top:375.60px;font-size:12px;letter-spacing:-0.300px;color:#f4eeee;transform:scaleX(0.9677);transform-origin:0 50%;">C 3</span>
<span class="t" style="left:473.20px;top:506.00px;font-size:12px;letter-spacing:-0.300px;color:#1c2c00;transform:scaleX(0.9677);transform-origin:0 50%;">C 4</span>
<span class="t" style="left:475.00px;top:646.60px;font-size:12px;letter-spacing:-0.300px;color:#c8a0f4;transform:scaleX(0.9376);transform-origin:0 50%;">B1</span>
<span class="t" style="left:512.30px;top:625.60px;font-size:18px;letter-spacing:-0.300px;color:#c490f0;transform:scaleX(0.9590);transform-origin:0 50%;">I2C</span>
<svg style="left:0;top:0" width="1920" height="110"><path d="M1502.3 64H1534.8Q1536 64 1536 65.2V97.6Z" fill="#4f4f4f"/><circle cx="1529.1" cy="70.5" r="4" fill="none" stroke="#a4a4a4" stroke-width="1.4"/><path d="M1525.8 73.6L1520 79.4" stroke="#a8a8a8" stroke-width="2.3" stroke-linecap="round"/></svg>
<div style="position:absolute;left:1546.2px;top:29.5px;width:207.8px;height:696.5px;background:#e6e6e6;"></div>
<div style="position:absolute;left:1549.5px;top:32px;width:201.5px;height:25px;background:#333231;"></div>
<span class="t" style="left:1562.70px;top:34.00px;font-size:17.5px;letter-spacing:0.199px;color:#e4e4e4;">Plot 1 - Histogra...</span>
<svg style="left:1726px;top:38px" width="14" height="14"><path d="M1.5 1.5L12.5 12.5M12.5 1.5L1.5 12.5" stroke="#b8b8b8" stroke-width="1.8" fill="none"/></svg>
<svg style="left:0;top:0" width="1920" height="730" viewBox="0 0 1920 730"><rect x="1549.5" y="57" width="201.5" height="665.8" fill="#000"/><path d="M1608 77.5h1M1676 77.5h1M1744 77.5h1M1553 95.5h1M1567 95.5h1M1580 95.5h1M1594 95.5h1M1608 95.5h1M1621 95.5h1M1635 95.5h1M1649 95.5h1M1662 95.5h1M1676 95.5h1M1690 95.5h1M1703 95.5h1M1717 95.5h1M1731 95.5h1M1744 95.5h1M1608 112.5h1M1676 112.5h1M1744 112.5h1M1608 130.5h1M1676 130.5h1M1744 130.5h1M1608 148.5h1M1676 148.5h1M1744 148.5h1M1608 166.5h1M1676 166.5h1M1744 166.5h1M1553 184.5h1M1567 184.5h1M1580 184.5h1M1594 184.5h1M1608 184.5h1M1621 184.5h1M1635 184.5h1M1649 184.5h1M1662 184.5h1M1676 184.5h1M1690 184.5h1M1703 184.5h1M1717 184.5h1M1731 184.5h1M1744 184.5h1M1608 202.5h1M1676 202.5h1M1744 202.5h1M1608 220.5h1M1676 220.5h1M1744 220.5h1M1608 238.5h1M1676 238.5h1M1744 238.5h1M1608 256.5h1M1676 256.5h1M1744 256.5h1M1553 274.5h1M1567 274.5h1M1580 274.5h1M1594 274.5h1M1608 274.5h1M1621 274.5h1M1635 274.5h1M1649 274.5h1M1662 274.5h1M1676 274.5h1M1690 274.5h1M1703 274.5h1M1717 274.5h1M1731 274.5h1M1744 274.5h1M1608 292.5h1M1676 292.5h1M1744 292.5h1M1608 310.5h1M1676 310.5h1M1744 310.5h1M1608 328.5h1M1676 328.5h1M1744 328.5h1M1608 346.5h1M1676 346.5h1M1744 346.5h1M1553 364.5h1M1567 364.5h1M1580 364.5h1M1594 364.5h1M1608 364.5h1M1621 364.5h1M1635 364.5h1M1649 364.5h1M1662 364.5h1M1676 364.5h1M1690 364.5h1M1703 364.5h1M1717 364.5h1M1731 364.5h1M1744 364.5h1M1608 382.5h1M1676 382.5h1M1744 382.5h1M1608 400.5h1M1676 400.5h1M1744 400.5h1M1608 418.5h1M1676 418.5h1M1744 418.5h1M1608 435.5h1M1676 435.5h1M1744 435.5h1M1553 453.5h1M1567 453.5h1M1580 453.5h1M1594 453.5h1M1608 453.5h1M1621 453.5h1M1635 453.5h1M1649 453.5h1M1662 453.5h1M1676 453.5h1M1690 453.5h1M1703 453.5h1M1717 453.5h1M1731 453.5h1M1744 453.5h1M1608 471.5h1M1676 471.5h1M1744 471.5h1M1608 489.5h1M1676 489.5h1M1744 489.5h1M1608 507.5h1M1676 507.5h1M1744 507.5h1M1608 525.5h1M1676 525.5h1M1744 525.5h1M1553 543.5h1M1567 543.5h1M1580 543.5h1M1594 543.5h1M1608 543.5h1M1621 543.5h1M1635 543.5h1M1649 543.5h1M1662 543.5h1M1676 543.5h1M1690 543.5h1M1703 543.5h1M1717 543.5h1M1731 543.5h1M1744 543.5h1M1608 561.5h1M1676 561.5h1M1744 561.5h1M1608 579.5h1M1676 579.5h1M1744 579.5h1M1608 597.5h1M1676 597.5h1M1744 597.5h1M1608 615.5h1M1676 615.5h1M1744 615.5h1M1553 633.5h1M1567 633.5h1M1580 633.5h1M1594 633.5h1M1608 633.5h1M1621 633.5h1M1635 633.5h1M1649 633.5h1M1662 633.5h1M1676 633.5h1M1690 633.5h1M1703 633.5h1M1717 633.5h1M1731 633.5h1M1744 633.5h1M1608 651.5h1M1676 651.5h1M1744 651.5h1M1608 669.5h1M1676 669.5h1M1744 669.5h1M1608 687.5h1M1676 687.5h1M1744 687.5h1M1608 705.5h1M1676 705.5h1M1744 705.5h1" stroke="#b4b4b4" stroke-width="1" fill="none" shape-rendering="crispEdges"/><defs><linearGradient id="hg" x1="0" y1="0" x2="0" y2="1"><stop offset="0" stop-color="#ee66ee"/><stop offset="0.35" stop-color="#cc58cc"/><stop offset="1" stop-color="#6c3a70"/></linearGradient><linearGradient id="hg2" x1="0" y1="0" x2="0" y2="1"><stop offset="0" stop-color="#e860e8"/><stop offset="0.25" stop-color="#c452c4"/><stop offset="1" stop-color="#703c74"/></linearGradient></defs><rect x="1567.0" y="712.8" width="1.05" height="10.0" fill="url(#hg2)"/><rect x="1568.0" y="676.9" width="1.05" height="45.9" fill="url(#hg)"/><rect x="1569.0" y="600.0" width="1.05" height="122.8" fill="url(#hg2)"/><rect x="1570.0" y="480.0" width="1.05" height="242.8" fill="url(#hg)"/><rect x="1571.0" y="300.0" width="1.05" height="422.8" fill="url(#hg2)"/><rect x="1572.0" y="155.0" width="1.05" height="567.8" fill="url(#hg)"/><rect x="1573.0" y="130.0" width="1.05" height="592.8" fill="url(#hg2)"/><rect x="1574.0" y="100.0" width="1.05" height="622.8" fill="url(#hg)"/><rect x="1575.0" y="89.5" width="1.05" height="633.3" fill="url(#hg2)"/><rect x="1576.0" y="96.3" width="1.05" height="626.5" fill="url(#hg)"/><rect x="1577.0" y="135.0" width="1.05" height="587.8" fill="url(#hg2)"/><rect x="1578.0" y="210.0" width="1.05" height="512.8" fill="url(#hg)"/><rect x="1579.0" y="280.0" width="1.05" height="442.8" fill="url(#hg2)"/><rect x="1580.0" y="330.0" width="1.05" height="392.8" fill="url(#hg)"/><rect x="1581.0" y="366.7" width="1.05" height="356.1" fill="url(#hg2)"/><rect x="1582.0" y="380.0" width="1.05" height="342.8" fill="url(#hg)"/><rect x="1583.0" y="413.3" width="1.05" height="309.5" fill="url(#hg2)"/><rect x="1584.0" y="441.2" width="1.05" height="281.6" fill="url(#hg)"/><rect x="1585.0" y="463.6" width="1.05" height="259.2" fill="url(#hg2)"/><rect x="1586.0" y="486.0" width="1.05" height="236.8" fill="url(#hg)"/><rect x="1587.0" y="489.0" width="1.05" height="233.8" fill="url(#hg2)"/><rect x="1588.0" y="492.0" width="1.05" height="230.8" fill="url(#hg)"/><rect x="1589.0" y="509.0" width="1.05" height="213.8" fill="url(#hg2)"/><rect x="1590.0" y="526.0" width="1.05" height="196.8" fill="url(#hg)"/><rect x="1591.0" y="543.0" width="1.05" height="179.8" fill="url(#hg2)"/><rect x="1592.0" y="563.6" width="1.05" height="159.2" fill="url(#hg)"/><rect x="1593.0" y="582.4" width="1.05" height="140.4" fill="url(#hg2)"/><rect x="1594.0" y="594.7" width="1.05" height="128.1" fill="url(#hg)"/><rect x="1595.0" y="606.9" width="1.05" height="115.9" fill="url(#hg2)"/><rect x="1596.0" y="616.0" width="1.05" height="106.8" fill="url(#hg)"/><rect x="1597.0" y="622.0" width="1.05" height="100.8" fill="url(#hg2)"/><rect x="1598.0" y="620.1" width="1.05" height="102.7" fill="url(#hg)"/><rect x="1599.0" y="640.6" width="1.05" height="82.2" fill="url(#hg2)"/><rect x="1600.0" y="630.9" width="1.05" height="91.9" fill="url(#hg)"/><rect x="1601.0" y="635.1" width="1.05" height="87.7" fill="url(#hg2)"/><rect x="1602.0" y="627.8" width="1.05" height="95.0" fill="url(#hg)"/><rect x="1603.0" y="626.9" width="1.05" height="95.9" fill="url(#hg2)"/><rect x="1604.0" y="635.3" width="1.05" height="87.5" fill="url(#hg)"/><rect x="1605.0" y="632.4" width="1.05" height="90.4" fill="url(#hg2)"/><rect x="1606.0" y="649.9" width="1.05" height="72.9" fill="url(#hg)"/><rect x="1607.0" y="631.9" width="1.05" height="90.9" fill="url(#hg2)"/><rect x="1608.0" y="630.4" width="1.05" height="92.4" fill="url(#hg)"/><rect x="1609.0" y="632.3" width="1.05" height="90.5" fill="url(#hg2)"/><rect x="1610.0" y="639.8" width="1.05" height="83.0" fill="url(#hg)"/><rect x="1611.0" y="643.5" width="1.05" height="79.3" fill="url(#hg2)"/><rect x="1612.0" y="640.6" width="1.05" height="82.2" fill="url(#hg)"/><rect x="1613.0" y="645.5" width="1.05" height="77.3" fill="url(#hg2)"/><rect x="1614.0" y="651.2" width="1.05" height="71.6" fill="url(#hg)"/><rect x="1615.0" y="643.5" width="1.05" height="79.3" fill="url(#hg2)"/><rect x="1616.0" y="655.1" width="1.05" height="67.7" fill="url(#hg)"/><rect x="1617.0" y="654.0" width="1.05" height="68.8" fill="url(#hg2)"/><rect x="1618.0" y="659.9" width="1.05" height="62.9" fill="url(#hg)"/><rect x="1619.0" y="670.5" width="1.05" height="52.3" fill="url(#hg2)"/><rect x="1620.0" y="667.2" width="1.05" height="55.6" fill="url(#hg)"/><rect x="1621.0" y="656.5" width="1.05" height="66.3" fill="url(#hg2)"/><rect x="1622.0" y="670.5" width="1.05" height="52.3" fill="url(#hg)"/><rect x="1623.0" y="661.4" width="1.05" height="61.4" fill="url(#hg2)"/><rect x="1624.0" y="661.5" width="1.05" height="61.3" fill="url(#hg)"/><rect x="1625.0" y="662.0" width="1.05" height="60.8" fill="url(#hg2)"/><rect x="1626.0" y="665.7" width="1.05" height="57.1" fill="url(#hg)"/><rect x="1627.0" y="667.2" width="1.05" height="55.6" fill="url(#hg2)"/><rect x="1628.0" y="666.4" width="1.05" height="56.4" fill="url(#hg)"/><rect x="1629.0" y="665.4" width="1.05" height="57.4" fill="url(#hg2)"/><rect x="1630.0" y="669.2" width="1.05" height="53.6" fill="url(#hg)"/><rect x="1631.0" y="656.3" width="1.05" height="66.5" fill="url(#hg2)"/><rect x="1632.0" y="656.5" width="1.05" height="66.3" fill="url(#hg)"/><rect x="1633.0" y="679.5" width="1.05" height="43.3" fill="url(#hg2)"/><rect x="1634.0" y="666.8" width="1.05" height="56.0" fill="url(#hg)"/><rect x="1635.0" y="659.3" width="1.05" height="63.5" fill="url(#hg2)"/><rect x="1636.0" y="665.4" width="1.05" height="57.4" fill="url(#hg)"/><rect x="1637.0" y="666.3" width="1.05" height="56.5" fill="url(#hg2)"/><rect x="1638.0" y="670.3" width="1.05" height="52.5" fill="url(#hg)"/><rect x="1639.0" y="671.5" width="1.05" height="51.3" fill="url(#hg2)"/><rect x="1640.0" y="666.7" width="1.05" height="56.1" fill="url(#hg)"/><rect x="1641.0" y="673.0" width="1.05" height="49.8" fill="url(#hg2)"/><rect x="1642.0" y="660.1" width="1.05" height="62.7" fill="url(#hg)"/><rect x="1643.0" y="691.5" width="1.05" height="31.3" fill="url(#hg2)"/><rect x="1644.0" y="678.3" width="1.05" height="44.5" fill="url(#hg)"/><rect x="1645.0" y="664.7" width="1.05" height="58.1" fill="url(#hg2)"/><rect x="1646.0" y="678.1" width="1.05" height="44.7" fill="url(#hg)"/><rect x="1647.0" y="672.8" width="1.05" height="50.0" fill="url(#hg2)"/><rect x="1648.0" y="672.4" width="1.05" height="50.4" fill="url(#hg)"/><rect x="1649.0" y="674.1" width="1.05" height="48.7" fill="url(#hg2)"/><rect x="1650.0" y="667.6" width="1.05" height="55.2" fill="url(#hg)"/><rect x="1651.0" y="673.0" width="1.05" height="49.8" fill="url(#hg2)"/><rect x="1652.0" y="668.1" width="1.05" height="54.7" fill="url(#hg)"/><rect x="1653.0" y="674.1" width="1.05" height="48.7" fill="url(#hg2)"/><rect x="1654.0" y="665.1" width="1.05" height="57.7" fill="url(#hg)"/><rect x="1655.0" y="669.8" width="1.05" height="53.0" fill="url(#hg2)"/><rect x="1656.0" y="676.0" width="1.05" height="46.8" fill="url(#hg)"/><rect x="1657.0" y="670.0" width="1.05" height="52.8" fill="url(#hg2)"/><rect x="1658.0" y="670.6" width="1.05" height="52.2" fill="url(#hg)"/><rect x="1659.0" y="671.3" width="1.05" height="51.5" fill="url(#hg2)"/><rect x="1660.0" y="668.3" width="1.05" height="54.5" fill="url(#hg)"/><rect x="1661.0" y="676.3" width="1.05" height="46.5" fill="url(#hg2)"/><rect x="1662.0" y="680.2" width="1.05" height="42.6" fill="url(#hg)"/><rect x="1663.0" y="677.5" width="1.05" height="45.3" fill="url(#hg2)"/><rect x="1664.0" y="683.4" width="1.05" height="39.4" fill="url(#hg)"/><rect x="1665.0" y="674.0" width="1.05" height="48.8" fill="url(#hg2)"/><rect x="1666.0" y="681.6" width="1.05" height="41.2" fill="url(#hg)"/><rect x="1667.0" y="679.1" width="1.05" height="43.7" fill="url(#hg2)"/><rect x="1668.0" y="679.3" width="1.05" height="43.5" fill="url(#hg)"/><rect x="1669.0" y="692.4" width="1.05" height="30.4" fill="url(#hg2)"/><rect x="1670.0" y="679.4" width="1.05" height="43.4" fill="url(#hg)"/><rect x="1671.0" y="698.1" width="1.05" height="24.7" fill="url(#hg2)"/><rect x="1672.0" y="674.2" width="1.05" height="48.6" fill="url(#hg)"/><rect x="1673.0" y="688.1" width="1.05" height="34.7" fill="url(#hg2)"/><rect x="1674.0" y="674.5" width="1.05" height="48.3" fill="url(#hg)"/><rect x="1675.0" y="677.2" width="1.05" height="45.6" fill="url(#hg2)"/><rect x="1676.0" y="673.3" width="1.05" height="49.5" fill="url(#hg)"/><rect x="1677.0" y="684.9" width="1.05" height="37.9" fill="url(#hg2)"/><rect x="1678.0" y="670.6" width="1.05" height="52.2" fill="url(#hg)"/><rect x="1679.0" y="674.3" width="1.05" height="48.5" fill="url(#hg2)"/><rect x="1680.0" y="662.2" width="1.05" height="60.6" fill="url(#hg)"/><rect x="1681.0" y="672.0" width="1.05" height="50.8" fill="url(#hg2)"/><rect x="1682.0" y="661.6" width="1.05" height="61.2" fill="url(#hg)"/><rect x="1683.0" y="666.2" width="1.05" height="56.6" fill="url(#hg2)"/><rect x="1684.0" y="662.3" width="1.05" height="60.5" fill="url(#hg)"/><rect x="1685.0" y="660.1" width="1.05" height="62.7" fill="url(#hg2)"/><rect x="1686.0" y="659.6" width="1.05" height="63.2" fill="url(#hg)"/><rect x="1687.0" y="658.1" width="1.05" height="64.7" fill="url(#hg2)"/><rect x="1688.0" y="655.7" width="1.05" height="67.1" fill="url(#hg)"/><rect x="1689.0" y="655.0" width="1.05" height="67.8" fill="url(#hg2)"/><rect x="1690.0" y="651.7" width="1.05" height="71.1" fill="url(#hg)"/><rect x="1691.0" y="654.2" width="1.05" height="68.6" fill="url(#hg2)"/><rect x="1692.0" y="654.3" width="1.05" height="68.5" fill="url(#hg)"/><rect x="1693.0" y="655.3" width="1.05" height="67.5" fill="url(#hg2)"/><rect x="1694.0" y="661.3" width="1.05" height="61.5" fill="url(#hg)"/><rect x="1695.0" y="652.5" width="1.05" height="70.3" fill="url(#hg2)"/><rect x="1696.0" y="650.4" width="1.05" height="72.4" fill="url(#hg)"/><rect x="1697.0" y="655.3" width="1.05" height="67.5" fill="url(#hg2)"/><rect x="1698.0" y="637.2" width="1.05" height="85.6" fill="url(#hg)"/><rect x="1699.0" y="640.2" width="1.05" height="82.6" fill="url(#hg2)"/><rect x="1700.0" y="624.7" width="1.05" height="98.1" fill="url(#hg)"/><rect x="1701.0" y="617.7" width="1.05" height="105.1" fill="url(#hg2)"/><rect x="1702.0" y="611.0" width="1.05" height="111.8" fill="url(#hg)"/><rect x="1703.0" y="626.8" width="1.05" height="96.0" fill="url(#hg2)"/><rect x="1704.0" y="611.5" width="1.05" height="111.3" fill="url(#hg)"/><rect x="1705.0" y="614.6" width="1.05" height="108.2" fill="url(#hg2)"/><rect x="1706.0" y="604.3" width="1.05" height="118.5" fill="url(#hg)"/><rect x="1707.0" y="606.4" width="1.05" height="116.4" fill="url(#hg2)"/><rect x="1708.0" y="597.2" width="1.05" height="125.6" fill="url(#hg)"/><rect x="1709.0" y="613.8" width="1.05" height="109.0" fill="url(#hg2)"/><rect x="1710.0" y="590.7" width="1.05" height="132.1" fill="url(#hg)"/><rect x="1711.0" y="602.0" width="1.05" height="120.8" fill="url(#hg2)"/><rect x="1712.0" y="623.1" width="1.05" height="99.7" fill="url(#hg)"/><rect x="1713.0" y="620.6" width="1.05" height="102.2" fill="url(#hg2)"/><rect x="1714.0" y="634.1" width="1.05" height="88.7" fill="url(#hg)"/><rect x="1715.0" y="660.8" width="1.05" height="62.0" fill="url(#hg2)"/><rect x="1716.0" y="676.8" width="1.05" height="46.0" fill="url(#hg)"/><rect x="1717.0" y="687.6" width="1.05" height="35.2" fill="url(#hg2)"/><rect x="1718.0" y="706.5" width="1.05" height="16.3" fill="url(#hg)"/><rect x="1719.0" y="694.2" width="1.05" height="28.6" fill="url(#hg2)"/><rect x="1720.0" y="717.8" width="1.05" height="5.0" fill="url(#hg)"/><rect x="1721.0" y="711.8" width="1.05" height="11.0" fill="url(#hg2)"/><rect x="1722.0" y="722.0" width="1.05" height="0.8" fill="url(#hg)"/><rect x="1723.0" y="719.9" width="1.05" height="2.9" fill="url(#hg2)"/><rect x="1724.0" y="722.0" width="1.05" height="0.8" fill="url(#hg)"/><rect x="1725.0" y="722.0" width="1.05" height="0.8" fill="url(#hg2)"/><path d="M1553.7 57v6.5M1553.7 722.8v-6.5M1567.3 57v6.5M1567.3 722.8v-6.5M1581.0 57v6.5M1581.0 722.8v-6.5M1594.6 57v6.5M1594.6 722.8v-6.5M1608.3 57v10M1608.3 722.8v-10M1622.0 57v6.5M1622.0 722.8v-6.5M1635.6 57v6.5M1635.6 722.8v-6.5M1649.3 57v6.5M1649.3 722.8v-6.5M1662.9 57v6.5M1662.9 722.8v-6.5M1676.6 57v10M1676.6 722.8v-10M1690.3 57v6.5M1690.3 722.8v-6.5M1703.9 57v6.5M1703.9 722.8v-6.5M1717.6 57v6.5M1717.6 722.8v-6.5M1731.2 57v6.5M1731.2 722.8v-6.5M1744.9 57v10M1744.9 722.8v-10M1549.5 77.1h7M1751 77.1h-7M1549.5 95.0h11M1751 95.0h-11M1549.5 112.9h7M1751 112.9h-7M1549.5 130.9h7M1751 130.9h-7M1549.5 148.8h7M1751 148.8h-7M1549.5 166.8h7M1751 166.8h-7M1549.5 184.7h11M1751 184.7h-11M1549.5 202.7h7M1751 202.7h-7M1549.5 220.6h7M1751 220.6h-7M1549.5 238.6h7M1751 238.6h-7M1549.5 256.5h7M1751 256.5h-7M1549.5 274.5h11M1751 274.5h-11M1549.5 292.4h7M1751 292.4h-7M1549.5 310.4h7M1751 310.4h-7M1549.5 328.3h7M1751 328.3h-7M1549.5 346.2h7M1751 346.2h-7M1549.5 364.2h11M1751 364.2h-11M1549.5 382.1h7M1751 382.1h-7M1549.5 400.1h7M1751 400.1h-7M1549.5 418.0h7M1751 418.0h-7M1549.5 436.0h7M1751 436.0h-7M1549.5 453.9h11M1751 453.9h-11M1549.5 471.9h7M1751 471.9h-7M1549.5 489.8h7M1751 489.8h-7M1549.5 507.8h7M1751 507.8h-7M1549.5 525.7h7M1751 525.7h-7M1549.5 543.7h11M1751 543.7h-11M1549.5 561.6h7M1751 561.6h-7M1549.5 579.5h7M1751 579.5h-7M1549.5 597.5h7M1751 597.5h-7M1549.5 615.4h7M1751 615.4h-7M1549.5 633.4h11M1751 633.4h-11M1549.5 651.3h7M1751 651.3h-7M1549.5 669.3h7M1751 669.3h-7M1549.5 687.2h7M1751 687.2h-7M1549.5 705.2h7M1751 705.2h-7" stroke="#d0d0d0" stroke-width="1.1" fill="none"/><path d="M1710.3 64H1742.8Q1744 64 1744 65.2V97.6Z" fill="#4f4f4f"/><circle cx="1737.1" cy="70.5" r="4" fill="none" stroke="#a4a4a4" stroke-width="1.4"/><path d="M1733.8 73.6L1728 79.4" stroke="#a8a8a8" stroke-width="2.3" stroke-linecap="round"/></svg>
<span class="t" style="left:1697.77px;top:85.20px;font-size:13.0px;letter-spacing:0.385px;color:#c0c0c0;text-shadow:0 0 2px #000,0 0 2px #000;">700 hits</span>
<span class="t" style="left:1697.77px;top:174.93px;font-size:13.0px;letter-spacing:0.385px;color:#c0c0c0;text-shadow:0 0 2px #000,0 0 2px #000;">600 hits</span>
<span class="t" style="left:1697.77px;top:264.66px;font-size:13.0px;letter-spacing:0.385px;color:#c0c0c0;text-shadow:0 0 2px #000,0 0 2px #000;">500 hits</span>
<span class="t" style="left:1697.77px;top:354.39px;font-size:13.0px;letter-spacing:0.385px;color:#c0c0c0;text-shadow:0 0 2px #000,0 0 2px #000;">400 hits</span>
<span class="t" style="left:1697.77px;top:444.12px;font-size:13.0px;letter-spacing:0.385px;color:#c0c0c0;text-shadow:0 0 2px #000,0 0 2px #000;">300 hits</span>
<span class="t" style="left:1697.77px;top:533.85px;font-size:13.0px;letter-spacing:0.385px;color:#c0c0c0;text-shadow:0 0 2px #000,0 0 2px #000;">200 hits</span>
<span class="t" style="left:1697.77px;top:623.58px;font-size:13.0px;letter-spacing:0.385px;color:#c0c0c0;text-shadow:0 0 2px #000,0 0 2px #000;">100 hits</span>
<span class="t" style="left:1588.14px;top:706.00px;font-size:13.0px;letter-spacing:0.257px;color:#c8c8c8;text-shadow:0 0 2px #000,1px 1px 1px #000,-1px -1px 1px #000;">150 ns</span>
<span class="t" style="left:1656.44px;top:706.00px;font-size:13.0px;letter-spacing:0.257px;color:#c8c8c8;text-shadow:0 0 2px #000,1px 1px 1px #000,-1px -1px 1px #000;">200 ns</span>
<svg style="left:0;top:0" width="1920" height="110"><path d="M1710.3 64H1742.8Q1744 64 1744 65.2V97.6Z" fill="#4f4f4f"/><circle cx="1737.1" cy="70.5" r="4" fill="none" stroke="#a4a4a4" stroke-width="1.4"/><path d="M1733.8 73.6L1728 79.4" stroke="#a8a8a8" stroke-width="2.3" stroke-linecap="round"/></svg>
<div style="position:absolute;left:1760.3px;top:501.3px;width:4px;height:4px;background:#bdbdbd;border-radius:2px;"></div>
<div style="position:absolute;left:1760.3px;top:510.20000000000005px;width:4px;height:4px;background:#bdbdbd;border-radius:2px;"></div>
<div style="position:absolute;left:1760.3px;top:519px;width:4px;height:4px;background:#bdbdbd;border-radius:2px;"></div>
<div style="position:absolute;left:461px;top:729px;width:1290px;height:24.5px;background:#333231;"></div>
<span class="t" style="left:474.50px;top:731.00px;font-size:17.5px;letter-spacing:0.131px;color:#e4e4e4;">Measurement Results</span>
<svg style="left:1726px;top:735px" width="14" height="14"><path d="M1.5 1.5L12.5 12.5M12.5 1.5L1.5 12.5" stroke="#b8b8b8" stroke-width="1.8" fill="none"/></svg>
<div style="position:absolute;left:462px;top:753.5px;width:1286px;height:28.5px;background:#a9a9a9;"></div>
<div style="position:absolute;left:1748px;top:753.5px;width:3px;height:239px;background:#e9e9e9;"></div>
<span class="t" style="left:465.00px;top:756.80px;font-size:16.5px;letter-spacing:0.060px;color:#f4f4f4;">Name</span>
<span class="t" style="left:565.00px;top:756.80px;font-size:16.5px;letter-spacing:-0.293px;color:#f4f4f4;">Meas</span>
<span class="t" style="left:736.00px;top:756.80px;font-size:16.5px;letter-spacing:0.019px;color:#f4f4f4;">Label</span>
<span class="t" style="left:907.00px;top:756.80px;font-size:16.5px;letter-spacing:-0.144px;color:#f4f4f4;">Src(s)</span>
<span class="t" style="left:1007.00px;top:756.80px;font-size:16.5px;letter-spacing:0.114px;color:#f4f4f4;">Mean'</span>
<span class="t" style="left:1115.00px;top:756.80px;font-size:16.5px;letter-spacing:0.251px;color:#f4f4f4;">Min'</span>
<span class="t" style="left:1223.00px;top:756.80px;font-size:16.5px;letter-spacing:0.203px;color:#f4f4f4;">Max'</span>
<span class="t" style="left:1331.00px;top:756.80px;font-size:16.5px;letter-spacing:0.204px;color:#f4f4f4;">Std Dev'</span>
<span class="t" style="left:1442.00px;top:756.80px;font-size:16.5px;letter-spacing:-0.294px;color:#f4f4f4;">Pop'</span>
<span class="t" style="left:1642.00px;top:756.80px;font-size:16.5px;letter-spacing:-0.101px;color:#f4f4f4;">Mean</span>
<div style="position:absolute;left:462px;top:782px;width:1286px;height:196px;background:#fff;"></div>
<span class="t" style="left:467.60px;top:785.30px;font-size:16.5px;letter-spacing:-0.103px;color:#000;">Meas 1</span>
<span class="t" style="left:567.60px;top:785.30px;font-size:16.5px;letter-spacing:-0.052px;color:#000;">Frequency</span>
<span class="t" style="left:738.60px;top:785.30px;font-size:16.5px;letter-spacing:-0.052px;color:#000;">Frequency</span>
<span class="t" style="left:909.60px;top:785.30px;font-size:16.5px;letter-spacing:-0.140px;color:#000;">Ch 4</span>
<span class="t" style="left:1009.60px;top:785.30px;font-size:16.5px;letter-spacing:0.163px;color:#000;">1.0002 kHz</span>
<span class="t" style="left:1117.60px;top:785.30px;font-size:16.5px;letter-spacing:0.163px;color:#000;">1.0001 kHz</span>
<span class="t" style="left:1225.60px;top:785.30px;font-size:16.5px;letter-spacing:0.163px;color:#000;">1.0002 kHz</span>
<span class="t" style="left:1333.60px;top:785.30px;font-size:16.5px;letter-spacing:0.206px;color:#000;">9.7771 mHz</span>
<span class="t" style="left:1444.60px;top:785.30px;font-size:16.5px;letter-spacing:0.367px;color:#000;">199</span>
<span class="t" style="left:1644.60px;top:785.30px;font-size:16.5px;letter-spacing:0.163px;color:#000;">1.0002 kHz</span>
<div style="position:absolute;left:462px;top:810px;width:1286px;height:28px;background:#d9d9d9;"></div>
<span class="t" style="left:467.60px;top:813.30px;font-size:16.5px;letter-spacing:-0.103px;color:#000;">Meas 2</span>
<span class="t" style="left:567.60px;top:813.30px;font-size:16.5px;letter-spacing:0.076px;color:#000;">Data Rate</span>
<span class="t" style="left:738.60px;top:813.30px;font-size:16.5px;letter-spacing:0.076px;color:#000;">Data Rate</span>
<span class="t" style="left:909.60px;top:813.30px;font-size:16.5px;letter-spacing:-0.140px;color:#000;">Ch 1</span>
<span class="t" style="left:1009.60px;top:813.30px;font-size:16.5px;letter-spacing:0.274px;color:#000;">403.81 kb/s</span>
<span class="t" style="left:1117.60px;top:813.30px;font-size:16.5px;letter-spacing:0.274px;color:#000;">268.34 kb/s</span>
<span class="t" style="left:1225.60px;top:813.30px;font-size:16.5px;letter-spacing:0.274px;color:#000;">536.60 kb/s</span>
<span class="t" style="left:1333.60px;top:813.30px;font-size:16.5px;letter-spacing:0.274px;color:#000;">19.813 kb/s</span>
<span class="t" style="left:1444.60px;top:813.30px;font-size:16.5px;letter-spacing:0.367px;color:#000;">80562</span>
<span class="t" style="left:1644.60px;top:813.30px;font-size:16.5px;letter-spacing:0.274px;color:#000;">403.75 kb/s</span>
<span class="t" style="left:467.60px;top:841.30px;font-size:16.5px;letter-spacing:-0.103px;color:#000;">Meas 4</span>
<span class="t" style="left:567.60px;top:841.30px;font-size:16.5px;letter-spacing:0.362px;color:#000;">Unit Interval</span>
<span class="t" style="left:738.60px;top:841.30px;font-size:16.5px;letter-spacing:0.362px;color:#000;">Unit Interval</span>
<span class="t" style="left:909.60px;top:841.30px;font-size:16.5px;letter-spacing:-0.140px;color:#000;">Ch 1</span>
<span class="t" style="left:1009.60px;top:841.30px;font-size:16.5px;letter-spacing:0.200px;color:#000;">2.4825 µs</span>
<span class="t" style="left:1117.60px;top:841.30px;font-size:16.5px;letter-spacing:0.200px;color:#000;">1.8636 µs</span>
<span class="t" style="left:1225.60px;top:841.30px;font-size:16.5px;letter-spacing:0.200px;color:#000;">3.7266 µs</span>
<span class="t" style="left:1333.60px;top:841.30px;font-size:16.5px;letter-spacing:0.233px;color:#000;">126.70 ns</span>
<span class="t" style="left:1444.60px;top:841.30px;font-size:16.5px;letter-spacing:0.367px;color:#000;">80562</span>
<span class="t" style="left:1644.60px;top:841.30px;font-size:16.5px;letter-spacing:0.200px;color:#000;">2.4829 µs</span>
<div style="position:absolute;left:462px;top:866px;width:1286px;height:28px;background:#d9d9d9;"></div>
<span class="t" style="left:467.60px;top:869.30px;font-size:16.5px;letter-spacing:-0.103px;color:#000;">Meas 5</span>
<span class="t" style="left:567.60px;top:869.30px;font-size:16.5px;letter-spacing:0.362px;color:#000;">Unit Interval</span>
<span class="t" style="left:738.60px;top:869.30px;font-size:16.5px;letter-spacing:0.362px;color:#000;">Unit Interval</span>
<span class="t" style="left:909.60px;top:869.30px;font-size:16.5px;letter-spacing:-0.140px;color:#000;">Ch 2</span>
<span class="t" style="left:1009.60px;top:869.30px;font-size:16.5px;letter-spacing:0.200px;color:#000;">2.8229 µs</span>
<span class="t" style="left:1117.60px;top:869.30px;font-size:16.5px;letter-spacing:0.233px;color:#000;">858.04 ns</span>
<span class="t" style="left:1225.60px;top:869.30px;font-size:16.5px;letter-spacing:0.200px;color:#000;">5.2259 µs</span>
<span class="t" style="left:1333.60px;top:869.30px;font-size:16.5px;letter-spacing:0.233px;color:#000;">227.94 ns</span>
<span class="t" style="left:1444.60px;top:869.30px;font-size:16.5px;letter-spacing:0.367px;color:#000;">70840</span>
<span class="t" style="left:1644.60px;top:869.30px;font-size:16.5px;letter-spacing:0.200px;color:#000;">2.8238 µs</span>
<span class="t" style="left:467.60px;top:897.30px;font-size:16.5px;letter-spacing:-0.103px;color:#000;">Meas 6</span>
<span class="t" style="left:567.60px;top:897.30px;font-size:16.5px;letter-spacing:-0.026px;color:#000;">Rise Time</span>
<span class="t" style="left:738.60px;top:897.30px;font-size:16.5px;letter-spacing:-0.026px;color:#000;">Rise Time</span>
<span class="t" style="left:909.60px;top:897.30px;font-size:16.5px;letter-spacing:-0.140px;color:#000;">Ch 4</span>
<span class="t" style="left:1009.60px;top:897.30px;font-size:16.5px;letter-spacing:0.233px;color:#000;">154.36 ns</span>
<span class="t" style="left:1117.60px;top:897.30px;font-size:16.5px;letter-spacing:0.233px;color:#000;">121.37 ns</span>
<span class="t" style="left:1225.60px;top:897.30px;font-size:16.5px;letter-spacing:0.233px;color:#000;">229.94 ns</span>
<span class="t" style="left:1333.60px;top:897.30px;font-size:16.5px;letter-spacing:0.233px;color:#000;">34.483 ns</span>
<span class="t" style="left:1444.60px;top:897.30px;font-size:16.5px;letter-spacing:0.367px;color:#000;">200</span>
<span class="t" style="left:1644.60px;top:897.30px;font-size:16.5px;letter-spacing:0.233px;color:#000;">155.90 ns</span>
<div style="position:absolute;left:462px;top:922px;width:1286px;height:28px;background:#d9d9d9;"></div>
<span class="t" style="left:467.60px;top:925.30px;font-size:16.5px;letter-spacing:-0.103px;color:#000;">Meas 7</span>
<span class="t" style="left:567.60px;top:925.30px;font-size:16.5px;letter-spacing:0.002px;color:#000;">Positive Pulse Width</span>
<span class="t" style="left:738.60px;top:925.30px;font-size:16.5px;letter-spacing:0.002px;color:#000;">Positive Pulse Width</span>
<span class="t" style="left:909.60px;top:925.30px;font-size:16.5px;letter-spacing:-0.140px;color:#000;">Ch 4</span>
<span class="t" style="left:1009.60px;top:925.30px;font-size:16.5px;letter-spacing:0.200px;color:#000;">499.92 µs</span>
<span class="t" style="left:1117.60px;top:925.30px;font-size:16.5px;letter-spacing:0.200px;color:#000;">499.85 µs</span>
<span class="t" style="left:1225.60px;top:925.30px;font-size:16.5px;letter-spacing:0.200px;color:#000;">499.99 µs</span>
<span class="t" style="left:1333.60px;top:925.30px;font-size:16.5px;letter-spacing:0.233px;color:#000;">50.845 ns</span>
<span class="t" style="left:1444.60px;top:925.30px;font-size:16.5px;letter-spacing:0.367px;color:#000;">199</span>
<span class="t" style="left:1644.60px;top:925.30px;font-size:16.5px;letter-spacing:0.200px;color:#000;">499.92 µs</span>
<span class="t" style="left:467.60px;top:953.30px;font-size:16.5px;letter-spacing:-0.103px;color:#000;">Meas 8</span>
<span class="t" style="left:567.60px;top:953.30px;font-size:16.5px;letter-spacing:-0.052px;color:#000;">Frequency</span>
<span class="t" style="left:738.60px;top:953.30px;font-size:16.5px;letter-spacing:-0.052px;color:#000;">Frequency</span>
<span class="t" style="left:909.60px;top:953.30px;font-size:16.5px;letter-spacing:-0.140px;color:#000;">Ch 4</span>
<span class="t" style="left:1009.60px;top:953.30px;font-size:16.5px;letter-spacing:0.163px;color:#000;">1.0002 kHz</span>
<span class="t" style="left:1117.60px;top:953.30px;font-size:16.5px;letter-spacing:0.163px;color:#000;">1.0001 kHz</span>
<span class="t" style="left:1225.60px;top:953.30px;font-size:16.5px;letter-spacing:0.163px;color:#000;">1.0002 kHz</span>
<span class="t" style="left:1333.60px;top:953.30px;font-size:16.5px;letter-spacing:0.206px;color:#000;">9.7771 mHz</span>
<span class="t" style="left:1444.60px;top:953.30px;font-size:16.5px;letter-spacing:0.367px;color:#000;">199</span>
<span class="t" style="left:1644.60px;top:953.30px;font-size:16.5px;letter-spacing:0.163px;color:#000;">1.0002 kHz</span>
<div style="position:absolute;left:562px;top:753.5px;width:1px;height:28.5px;background:#c6c6c6;"></div>
<div style="position:absolute;left:562px;top:782px;width:1px;height:196px;background:#cfcfcf;"></div>
<div style="position:absolute;left:733px;top:753.5px;width:1px;height:28.5px;background:#c6c6c6;"></div>
<div style="position:absolute;left:733px;top:782px;width:1px;height:196px;background:#cfcfcf;"></div>
<div style="position:absolute;left:904px;top:753.5px;width:1px;height:28.5px;background:#c6c6c6;"></div>
<div style="position:absolute;left:904px;top:782px;width:1px;height:196px;background:#cfcfcf;"></div>
<div style="position:absolute;left:1004px;top:753.5px;width:1px;height:28.5px;background:#c6c6c6;"></div>
<div style="position:absolute;left:1004px;top:782px;width:1px;height:196px;background:#cfcfcf;"></div>
<div style="position:absolute;left:1112px;top:753.5px;width:1px;height:28.5px;background:#c6c6c6;"></div>
<div style="position:absolute;left:1112px;top:782px;width:1px;height:196px;background:#cfcfcf;"></div>
<div style="position:absolute;left:1220px;top:753.5px;width:1px;height:28.5px;background:#c6c6c6;"></div>
<div style="position:absolute;left:1220px;top:782px;width:1px;height:196px;background:#cfcfcf;"></div>
<div style="position:absolute;left:1328px;top:753.5px;width:1px;height:28.5px;background:#c6c6c6;"></div>
<div style="position:absolute;left:1328px;top:782px;width:1px;height:196px;background:#cfcfcf;"></div>
<div style="position:absolute;left:1439px;top:753.5px;width:1px;height:28.5px;background:#c6c6c6;"></div>
<div style="position:absolute;left:1439px;top:782px;width:1px;height:196px;background:#cfcfcf;"></div>
<div style="position:absolute;left:1539px;top:753.5px;width:1px;height:28.5px;background:#c6c6c6;"></div>
<div style="position:absolute;left:1539px;top:782px;width:1px;height:196px;background:#cfcfcf;"></div>
<div style="position:absolute;left:1639px;top:753.5px;width:1px;height:28.5px;background:#c6c6c6;"></div>
<div style="position:absolute;left:1639px;top:782px;width:1px;height:196px;background:#cfcfcf;"></div>
<div style="position:absolute;left:1748px;top:753.5px;width:1px;height:28.5px;background:#c6c6c6;"></div>
<div style="position:absolute;left:1748px;top:782px;width:1px;height:196px;background:#cfcfcf;"></div>
<div style="position:absolute;left:462px;top:978px;width:1289px;height:3.5px;background:#9c9c9c;"></div>
<div style="position:absolute;left:462px;top:981.5px;width:1289px;height:11px;background:#e9e9e9;"></div>
<div style="position:absolute;left:462px;top:985.5px;width:892px;height:4px;background:#8a8a8a;"></div>
<div style="position:absolute;left:1769px;top:29px;width:152px;height:967px;background:#2d2d2d;border-left:1px solid #5c5c5c;border-top:1px solid #5c5c5c;border-bottom:1px solid #5c5c5c;box-sizing:border-box;"></div>
<svg style="left:0px;top:0px" width="1920" height="30" viewBox="0 0 1920 30"><g font-family="Liberation Sans, sans-serif" font-weight="bold" font-size="30" fill="#fff" stroke="#fff" stroke-width="0.5"><text x="1785.3" y="25.8">T</text><text x="1797.2" y="25.8">e</text><text x="1839.2" y="25.8" textLength="64.4" lengthAdjust="spacingAndGlyphs">ronix</text></g><path d="M1815.4 4H1821V22L1815.4 25.8Z" fill="#fff"/><path d="M1820.4 25.8H1830.2L1825.7 17.2Z" fill="#fff"/><path d="M1814.8 25.8H1820.5L1831 9.4H1825.2Z" fill="#1cbce4"/><path d="M1831.7 25.8V10.4L1835.9 4.2V10H1838.9V13.8H1835.9V25.8Z" fill="#fff"/></svg>
<span class="t" style="left:1802.97px;top:29.20px;font-size:14px;letter-spacing:1.336px;color:#ececec;font-weight:bold;">Add New...</span>
<div style="position:absolute;left:1778px;top:54.2px;width:63px;height:36.5px;background:;background:linear-gradient(#474848,#303030 35%,#2b2b2b 75%,#1a1a1a);border:1px solid #857b74;border-radius:6px;box-sizing:border-box;"></div>
<span class="t" style="left:1784.36px;top:62.20px;font-size:16px;letter-spacing:-0.300px;color:#ececec;transform:scaleX(0.9275);transform-origin:0 50%;">Cursors</span>
<div style="position:absolute;left:1850px;top:54.2px;width:63px;height:36.5px;background:;background:linear-gradient(#474848,#303030 35%,#2b2b2b 75%,#1a1a1a);border:1px solid #857b74;border-radius:6px;box-sizing:border-box;"></div>
<span class="t" style="left:1856.94px;top:62.20px;font-size:16px;letter-spacing:-0.115px;color:#ececec;">Callout</span>
<div style="position:absolute;left:1778px;top:100px;width:63px;height:36.5px;background:;background:linear-gradient(#474848,#303030 35%,#2b2b2b 75%,#1a1a1a);border:1px solid #857b74;border-radius:6px;box-sizing:border-box;"></div>
<span class="t" style="left:1780.36px;top:108.00px;font-size:16px;letter-spacing:-0.300px;color:#ececec;transform:scaleX(0.9642);transform-origin:0 50%;">Measure</span>
<div style="position:absolute;left:1850px;top:100px;width:63px;height:36.5px;background:;background:linear-gradient(#474848,#303030 35%,#2b2b2b 75%,#1a1a1a);border:1px solid #857b74;border-radius:6px;box-sizing:border-box;"></div>
<span class="t" style="left:1858.56px;top:108.00px;font-size:16px;letter-spacing:-0.300px;color:#ececec;transform:scaleX(0.9326);transform-origin:0 50%;">Search</span>
<div style="position:absolute;left:1778px;top:146px;width:63px;height:36.5px;background:;background:linear-gradient(#474848,#303030 35%,#2b2b2b 75%,#1a1a1a);border:1px solid #857b74;border-radius:6px;box-sizing:border-box;"></div>
<span class="t" style="left:1785.36px;top:146.50px;font-size:16px;letter-spacing:-0.300px;color:#ececec;transform:scaleX(0.9366);transform-origin:0 50%;">Results</span>
<span class="t" style="left:1791.10px;top:162.50px;font-size:16px;letter-spacing:-0.300px;color:#ececec;transform:scaleX(0.9932);transform-origin:0 50%;">Table</span>
<div style="position:absolute;left:1850px;top:146px;width:63px;height:36.5px;background:;background:linear-gradient(#474848,#303030 35%,#2b2b2b 75%,#1a1a1a);border:1px solid #857b74;border-radius:6px;box-sizing:border-box;"></div>
<span class="t" style="left:1867.63px;top:154.00px;font-size:16px;letter-spacing:0.057px;color:#ececec;">Plot</span>
<div style="position:absolute;left:1773px;top:189px;width:143px;height:1px;background:#5e5852;"></div>
<div style="position:absolute;left:1778px;top:196.2px;width:63px;height:36.5px;background:;background:linear-gradient(#474848,#303030 35%,#2b2b2b 75%,#1a1a1a);border:1px solid #857b74;border-radius:6px;box-sizing:border-box;"></div>
<div style="position:absolute;left:1850px;top:196.2px;width:63px;height:36.5px;background:;background:linear-gradient(#474848,#303030 35%,#2b2b2b 75%,#1a1a1a);border:1px solid #857b74;border-radius:6px;box-sizing:border-box;"></div>
<span class="t" style="left:1856.73px;top:204.20px;font-size:16px;letter-spacing:-0.041px;color:#ececec;">More...</span>
<div style="position:absolute;left:1773px;top:241px;width:143px;height:1px;background:#5e5852;"></div>
<svg style="left:1795px;top:200px" width="32" height="30" viewBox="0 0 32 30"><rect x="3" y="3" width="22" height="19" fill="none" stroke="#c8c8c8" stroke-width="1.7" stroke-dasharray="3.4 2.4"/><circle cx="16" cy="10.5" r="4.6" fill="none" stroke="#c8c8c8" stroke-width="1.6"/><path d="M12.6 14L7.5 18.6" stroke="#c8c8c8" stroke-width="2.4" stroke-linecap="round"/><path d="M20.5 17.5L28.5 22L25 22.8L27.2 26.6L25.6 27.4L23.6 23.6L21.2 26Z" fill="#c8c8c8"/></svg>
<div style="position:absolute;left:1773px;top:255px;width:144px;height:63px;background:#c9c9c9;border-radius:4px;"></div>
<div style="position:absolute;left:1773px;top:255px;width:144px;height:18.6px;background:#57585a;border-radius:4px 4px 0 0;"></div>
<span class="t" style="left:1778.50px;top:254.30px;font-size:15px;letter-spacing:0.056px;color:#ececec;">DVM</span>
<div style="position:absolute;left:1889px;top:258.4px;width:22.8px;height:12.2px;background:#ea3c60;border-radius:6px;border:1px solid #2e2e2e;box-sizing:border-box;"></div>
<span class="t" style="left:1897.34px;top:254.40px;font-size:11px;letter-spacing:0.245px;color:#fff;">3</span>
<span class="t" style="left:1778.50px;top:274.00px;font-size:14.5px;letter-spacing:-0.300px;color:#1c1c1c;transform:scaleX(0.8848);transform-origin:0 50%;">DC</span>
<span class="t" style="left:1778.50px;top:295.00px;font-size:20px;letter-spacing:-0.216px;color:#000;font-weight:bold;">964.2 mV</span>
<div style="position:absolute;left:1773px;top:326px;width:144px;height:57px;background:#c9c9c9;border-radius:4px;"></div>
<div style="position:absolute;left:1773px;top:326px;width:144px;height:18.6px;background:#57585a;border-radius:4px 4px 0 0;"></div>
<span class="t" style="left:1778.50px;top:325.30px;font-size:15px;letter-spacing:-0.300px;color:#ececec;transform:scaleX(0.9918);transform-origin:0 50%;">Meas 1</span>
<div style="position:absolute;left:1889px;top:329.4px;width:22.8px;height:12.2px;background:#7cc62c;border-radius:6px;border:1px solid #2e2e2e;box-sizing:border-box;"></div>
<span class="t" style="left:1897.34px;top:325.40px;font-size:11px;letter-spacing:0.245px;color:#000;">4</span>
<span class="t" style="left:1778.50px;top:345.20px;font-size:14.5px;letter-spacing:-0.300px;color:#1c1c1c;transform:scaleX(0.9680);transform-origin:0 50%;">Frequency</span>
<span class="t" style="left:1778.50px;top:364.00px;font-size:14.5px;letter-spacing:0.087px;color:#1c1c1c;">µ': 1.000 kHz</span>
<div style="position:absolute;left:1773px;top:391px;width:144px;height:57px;background:#c9c9c9;border-radius:4px;"></div>
<div style="position:absolute;left:1773px;top:391px;width:144px;height:18.6px;background:#57585a;border-radius:4px 4px 0 0;"></div>
<span class="t" style="left:1778.50px;top:390.30px;font-size:15px;letter-spacing:-0.300px;color:#ececec;transform:scaleX(0.9918);transform-origin:0 50%;">Meas 2</span>
<div style="position:absolute;left:1889px;top:394.4px;width:22.8px;height:12.2px;background:#f2ea2c;border-radius:6px;border:1px solid #2e2e2e;box-sizing:border-box;"></div>
<span class="t" style="left:1897.34px;top:390.40px;font-size:11px;letter-spacing:0.245px;color:#000;">1</span>
<span class="t" style="left:1778.50px;top:410.20px;font-size:14.5px;letter-spacing:-0.300px;color:#1c1c1c;transform:scaleX(0.9811);transform-origin:0 50%;">Data Rate</span>
<span class="t" style="left:1778.50px;top:429.00px;font-size:14.5px;letter-spacing:0.087px;color:#1c1c1c;">µ': 403.8 kb/s</span>
<div style="position:absolute;left:1773px;top:456px;width:144px;height:57px;background:#c9c9c9;border-radius:4px;"></div>
<div style="position:absolute;left:1773px;top:456px;width:144px;height:18.6px;background:#57585a;border-radius:4px 4px 0 0;"></div>
<span class="t" style="left:1778.50px;top:455.30px;font-size:15px;letter-spacing:-0.300px;color:#ececec;transform:scaleX(0.9918);transform-origin:0 50%;">Meas 4</span>
<div style="position:absolute;left:1889px;top:459.4px;width:22.8px;height:12.2px;background:#f2ea2c;border-radius:6px;border:1px solid #2e2e2e;box-sizing:border-box;"></div>
<span class="t" style="left:1897.34px;top:455.40px;font-size:11px;letter-spacing:0.245px;color:#000;">1</span>
<span class="t" style="left:1778.50px;top:475.20px;font-size:14.5px;letter-spacing:-0.051px;color:#1c1c1c;">Unit Interval</span>
<span class="t" style="left:1778.50px;top:494.00px;font-size:14.5px;letter-spacing:0.050px;color:#1c1c1c;">µ': 2.483 µs</span>
<div style="position:absolute;left:1773px;top:521px;width:144px;height:57px;background:#c9c9c9;border-radius:4px;"></div>
<div style="position:absolute;left:1773px;top:521px;width:144px;height:18.6px;background:#57585a;border-radius:4px 4px 0 0;"></div>
<span class="t" style="left:1778.50px;top:520.30px;font-size:15px;letter-spacing:-0.300px;color:#ececec;transform:scaleX(0.9918);transform-origin:0 50%;">Meas 5</span>
<div style="position:absolute;left:1889px;top:524.4px;width:22.8px;height:12.2px;background:#22c6d2;border-radius:6px;border:1px solid #2e2e2e;box-sizing:border-box;"></div>
<span class="t" style="left:1897.34px;top:520.40px;font-size:11px;letter-spacing:0.245px;color:#000;">2</span>
<span class="t" style="left:1778.50px;top:540.20px;font-size:14.5px;letter-spacing:-0.051px;color:#1c1c1c;">Unit Interval</span>
<span class="t" style="left:1778.50px;top:559.00px;font-size:14.5px;letter-spacing:0.050px;color:#1c1c1c;">µ': 2.823 µs</span>
<div style="position:absolute;left:1773px;top:586px;width:144px;height:57px;background:#c9c9c9;border-radius:4px;"></div>
<div style="position:absolute;left:1773px;top:586px;width:144px;height:18.6px;background:#57585a;border-radius:4px 4px 0 0;"></div>
<span class="t" style="left:1778.50px;top:585.30px;font-size:15px;letter-spacing:-0.300px;color:#ececec;transform:scaleX(0.9918);transform-origin:0 50%;">Meas 6</span>
<div style="position:absolute;left:1889px;top:589.4px;width:22.8px;height:12.2px;background:#7cc62c;border-radius:6px;border:1px solid #2e2e2e;box-sizing:border-box;"></div>
<span class="t" style="left:1897.34px;top:585.40px;font-size:11px;letter-spacing:0.245px;color:#000;">4</span>
<span class="t" style="left:1778.50px;top:605.20px;font-size:14.5px;letter-spacing:-0.300px;color:#1c1c1c;transform:scaleX(0.9634);transform-origin:0 50%;">Rise Time</span>
<span class="t" style="left:1778.50px;top:624.00px;font-size:14.5px;letter-spacing:0.074px;color:#1c1c1c;">µ': 154.4 ns</span>
<div style="position:absolute;left:1773px;top:651px;width:144px;height:57px;background:#c9c9c9;border-radius:4px;"></div>
<div style="position:absolute;left:1773px;top:651px;width:144px;height:18.6px;background:#57585a;border-radius:4px 4px 0 0;"></div>
<span class="t" style="left:1778.50px;top:650.30px;font-size:15px;letter-spacing:-0.300px;color:#ececec;transform:scaleX(0.9918);transform-origin:0 50%;">Meas 7</span>
<div style="position:absolute;left:1889px;top:654.4px;width:22.8px;height:12.2px;background:#7cc62c;border-radius:6px;border:1px solid #2e2e2e;box-sizing:border-box;"></div>
<span class="t" style="left:1897.34px;top:650.40px;font-size:11px;letter-spacing:0.245px;color:#000;">4</span>
<span class="t" style="left:1778.50px;top:670.20px;font-size:14.5px;letter-spacing:-0.278px;color:#1c1c1c;">Positive Pulse Width</span>
<span class="t" style="left:1778.50px;top:689.00px;font-size:14.5px;letter-spacing:0.050px;color:#1c1c1c;">µ': 499.9 µs</span>
<div style="position:absolute;left:1773px;top:716px;width:144px;height:57px;background:#c9c9c9;border-radius:4px;"></div>
<div style="position:absolute;left:1773px;top:716px;width:144px;height:18.6px;background:#000;border-radius:4px 4px 0 0;"></div>
<span class="t" style="left:1778.50px;top:715.30px;font-size:15px;letter-spacing:-0.300px;color:#8cd22c;transform:scaleX(0.9918);transform-origin:0 50%;">Meas 8</span>
<div style="position:absolute;left:1889px;top:719.4px;width:22.8px;height:12.2px;background:#7cc62c;border-radius:6px;border:1px solid #2e2e2e;box-sizing:border-box;"></div>
<span class="t" style="left:1897.34px;top:715.40px;font-size:11px;letter-spacing:0.245px;color:#000;">4</span>
<span class="t" style="left:1778.50px;top:735.20px;font-size:14.5px;letter-spacing:-0.300px;color:#1c1c1c;transform:scaleX(0.9680);transform-origin:0 50%;">Frequency</span>
<span class="t" style="left:1778.50px;top:754.00px;font-size:14.5px;letter-spacing:0.087px;color:#1c1c1c;">µ': 1.000 kHz</span>
<div style="position:absolute;left:3px;top:1001px;width:90px;height:75.5px;background:#c9c9c9;border-radius:4px;"></div>
<div style="position:absolute;left:3px;top:1001px;width:90px;height:18.6px;background:#4d491f;border-radius:4px 4px 0 0;"></div>
<span class="t" style="left:8.75px;top:1000.20px;font-size:15px;letter-spacing:-0.300px;color:#f0e62c;transform:scaleX(0.9431);transform-origin:0 50%;">Ch 1</span>
<div style="position:absolute;left:3px;top:1019.6px;width:90px;height:1px;background:#b2b2b2;"></div>
<span class="t" style="left:8.75px;top:1020.00px;font-size:14.5px;letter-spacing:-0.190px;color:#1c1c1c;">1 V/div</span>
<span class="t" style="left:8.75px;top:1057.60px;font-size:14.5px;letter-spacing:-0.300px;color:#1c1c1c;transform:scaleX(0.9787);transform-origin:0 50%;">1 GHz</span>
<svg style="left:8px;top:1039px" width="22" height="16" viewBox="0 0 22 16"><path d="M2.3 8Q2.3 2 8.6 2Q13.8 2 13.8 8" fill="none" stroke="#2a2a2a" stroke-width="1.1"/><ellipse cx="8.6" cy="5" rx="2.6" ry="2.9" fill="none" stroke="#2a2a2a" stroke-width="1.1"/><rect x="1" y="7.6" width="2.6" height="5.6" rx="1.3" fill="#dcdcdc" stroke="#2a2a2a" stroke-width="0.9"/><rect x="11.6" y="7.6" width="4.2" height="6.2" rx="0.6" fill="#f2f2f2" stroke="#2a2a2a" stroke-width="0.9"/></svg>
<svg style="left:74px;top:1058px" width="18" height="14" viewBox="0 0 18 14"><text x="0.5" y="8.5" font-family="Liberation Sans, sans-serif" font-weight="bold" font-size="9.5" fill="#000">B</text><text x="6.6" y="11.6" font-family="Liberation Sans, sans-serif" font-weight="bold" font-size="8" fill="#000">w</text></svg>
<div style="position:absolute;left:98px;top:1001px;width:90px;height:75.5px;background:#c9c9c9;border-radius:4px;"></div>
<div style="position:absolute;left:98px;top:1001px;width:90px;height:18.6px;background:#1c4144;border-radius:4px 4px 0 0;"></div>
<span class="t" style="left:103.75px;top:1000.20px;font-size:15px;letter-spacing:-0.300px;color:#28c8d2;transform:scaleX(0.9431);transform-origin:0 50%;">Ch 2</span>
<div style="position:absolute;left:98px;top:1019.6px;width:90px;height:1px;background:#b2b2b2;"></div>
<span class="t" style="left:103.75px;top:1020.00px;font-size:14.5px;letter-spacing:-0.004px;color:#1c1c1c;">780 mV/div</span>
<span class="t" style="left:103.75px;top:1057.60px;font-size:14.5px;letter-spacing:-0.300px;color:#1c1c1c;transform:scaleX(0.9787);transform-origin:0 50%;">1 GHz</span>
<svg style="left:103px;top:1039px" width="22" height="16" viewBox="0 0 22 16"><path d="M2.3 8Q2.3 2 8.6 2Q13.8 2 13.8 8" fill="none" stroke="#2a2a2a" stroke-width="1.1"/><ellipse cx="8.6" cy="5" rx="2.6" ry="2.9" fill="none" stroke="#2a2a2a" stroke-width="1.1"/><rect x="1" y="7.6" width="2.6" height="5.6" rx="1.3" fill="#dcdcdc" stroke="#2a2a2a" stroke-width="0.9"/><rect x="11.6" y="7.6" width="4.2" height="6.2" rx="0.6" fill="#f2f2f2" stroke="#2a2a2a" stroke-width="0.9"/></svg>
<svg style="left:169px;top:1058px" width="18" height="14" viewBox="0 0 18 14"><text x="0.5" y="8.5" font-family="Liberation Sans, sans-serif" font-weight="bold" font-size="9.5" fill="#000">B</text><text x="6.6" y="11.6" font-family="Liberation Sans, sans-serif" font-weight="bold" font-size="8" fill="#000">w</text></svg>
<div style="position:absolute;left:193px;top:1001px;width:90px;height:75.5px;background:#c9c9c9;border-radius:4px;"></div>
<div style="position:absolute;left:193px;top:1001px;width:90px;height:18.6px;background:#48252b;border-radius:4px 4px 0 0;"></div>
<span class="t" style="left:198.75px;top:1000.20px;font-size:15px;letter-spacing:-0.300px;color:#f4eaea;transform:scaleX(0.9431);transform-origin:0 50%;">Ch 3</span>
<div style="position:absolute;left:193px;top:1019.6px;width:90px;height:1px;background:#b2b2b2;"></div>
<span class="t" style="left:198.75px;top:1020.00px;font-size:14.5px;letter-spacing:-0.004px;color:#1c1c1c;">200 mV/div</span>
<span class="t" style="left:198.75px;top:1057.60px;font-size:14.5px;letter-spacing:-0.003px;color:#1c1c1c;">500 MHz</span>
<svg style="left:198px;top:1039px" width="22" height="16" viewBox="0 0 22 16"><path d="M2.3 8Q2.3 2 8.6 2Q13.8 2 13.8 8" fill="none" stroke="#2a2a2a" stroke-width="1.1"/><ellipse cx="8.6" cy="5" rx="2.6" ry="2.9" fill="none" stroke="#2a2a2a" stroke-width="1.1"/><rect x="1" y="7.6" width="2.6" height="5.6" rx="1.3" fill="#dcdcdc" stroke="#2a2a2a" stroke-width="0.9"/><rect x="11.6" y="7.6" width="4.2" height="6.2" rx="0.6" fill="#f2f2f2" stroke="#2a2a2a" stroke-width="0.9"/></svg>
<svg style="left:264px;top:1058px" width="18" height="14" viewBox="0 0 18 14"><text x="0.5" y="8.5" font-family="Liberation Sans, sans-serif" font-weight="bold" font-size="9.5" fill="#000">B</text><text x="6.6" y="11.6" font-family="Liberation Sans, sans-serif" font-weight="bold" font-size="8" fill="#000">w</text></svg>
<div style="position:absolute;left:288px;top:1001px;width:90px;height:75.5px;background:#c9c9c9;border-radius:4px;"></div>
<div style="position:absolute;left:288px;top:1001px;width:90px;height:18.6px;background:#8cd02c;border-radius:4px 4px 0 0;"></div>
<span class="t" style="left:293.75px;top:1000.20px;font-size:15px;letter-spacing:-0.300px;color:#000;transform:scaleX(0.9431);transform-origin:0 50%;">Ch 4</span>
<div style="position:absolute;left:288px;top:1019.6px;width:90px;height:1px;background:#b2b2b2;"></div>
<span class="t" style="left:293.75px;top:1020.00px;font-size:14.5px;letter-spacing:-0.004px;color:#1c1c1c;">500 mV/div</span>
<span class="t" style="left:293.75px;top:1057.60px;font-size:14.5px;letter-spacing:-0.300px;color:#1c1c1c;transform:scaleX(0.9787);transform-origin:0 50%;">1 GHz</span>
<svg style="left:293px;top:1039px" width="22" height="16" viewBox="0 0 22 16"><path d="M2.3 8Q2.3 2 8.6 2Q13.8 2 13.8 8" fill="none" stroke="#2a2a2a" stroke-width="1.1"/><ellipse cx="8.6" cy="5" rx="2.6" ry="2.9" fill="none" stroke="#2a2a2a" stroke-width="1.1"/><rect x="1" y="7.6" width="2.6" height="5.6" rx="1.3" fill="#dcdcdc" stroke="#2a2a2a" stroke-width="0.9"/><rect x="11.6" y="7.6" width="4.2" height="6.2" rx="0.6" fill="#f2f2f2" stroke="#2a2a2a" stroke-width="0.9"/></svg>
<svg style="left:359px;top:1058px" width="18" height="14" viewBox="0 0 18 14"><text x="0.5" y="8.5" font-family="Liberation Sans, sans-serif" font-weight="bold" font-size="9.5" fill="#000">B</text><text x="6.6" y="11.6" font-family="Liberation Sans, sans-serif" font-weight="bold" font-size="8" fill="#000">w</text></svg>
<div style="position:absolute;left:383px;top:1001px;width:90px;height:75.5px;background:#c9c9c9;border-radius:4px;"></div>
<div style="position:absolute;left:383px;top:1001px;width:90px;height:18.6px;background:#3a2d40;border-radius:4px 4px 0 0;"></div>
<span class="t" style="left:388.75px;top:1000.20px;font-size:15px;letter-spacing:-0.300px;color:#b472cc;transform:scaleX(0.9496);transform-origin:0 50%;">Bus 1</span>
<div style="position:absolute;left:383px;top:1019.6px;width:90px;height:1px;background:#b2b2b2;"></div>
<span class="t" style="left:388.75px;top:1020.00px;font-size:14.5px;letter-spacing:-0.300px;color:#1c1c1c;transform:scaleX(0.9232);transform-origin:0 50%;">I2C</span>
<div style="position:absolute;left:872px;top:999px;width:40px;height:78px;background:;background:linear-gradient(#434444,#2e2e2e 22%,#2e2e2e 86%,#333 94%,#1e1e1e);border:1px solid #766e68;border-radius:5.5px;box-sizing:border-box;"></div>
<div style="position:absolute;left:876px;top:1007px;width:32px;height:2px;background:#ff9a28;border-radius:1px;"></div>
<span class="t" style="left:886.02px;top:1032.30px;font-size:21.5px;letter-spacing:0.000px;color:#ececec;">5</span>
<div style="position:absolute;left:917px;top:999px;width:40px;height:78px;background:;background:linear-gradient(#434444,#2e2e2e 22%,#2e2e2e 86%,#333 94%,#1e1e1e);border:1px solid #766e68;border-radius:5.5px;box-sizing:border-box;"></div>
<div style="position:absolute;left:921px;top:1007px;width:32px;height:2px;background:#2a2ad8;border-radius:1px;"></div>
<span class="t" style="left:931.02px;top:1032.30px;font-size:21.5px;letter-spacing:0.000px;color:#ececec;">6</span>
<div style="position:absolute;left:962px;top:999px;width:40px;height:78px;background:;background:linear-gradient(#434444,#2e2e2e 22%,#2e2e2e 86%,#333 94%,#1e1e1e);border:1px solid #766e68;border-radius:5.5px;box-sizing:border-box;"></div>
<div style="position:absolute;left:966px;top:1007px;width:32px;height:2px;background:#ff4aa8;border-radius:1px;"></div>
<span class="t" style="left:976.02px;top:1032.30px;font-size:21.5px;letter-spacing:0.000px;color:#ececec;">7</span>
<div style="position:absolute;left:1007px;top:999px;width:40px;height:78px;background:;background:linear-gradient(#434444,#2e2e2e 22%,#2e2e2e 86%,#333 94%,#1e1e1e);border:1px solid #766e68;border-radius:5.5px;box-sizing:border-box;"></div>
<div style="position:absolute;left:1011px;top:1007px;width:32px;height:2px;background:#00e08a;border-radius:1px;"></div>
<span class="t" style="left:1021.02px;top:1032.30px;font-size:21.5px;letter-spacing:0.000px;color:#ececec;">8</span>
<div style="position:absolute;left:1057px;top:1000px;width:1px;height:76px;background:#5e5852;"></div>
<div style="position:absolute;left:1068px;top:999px;width:40px;height:78px;background:;background:linear-gradient(#434444,#2e2e2e 22%,#2e2e2e 86%,#333 94%,#1e1e1e);border:1px solid #766e68;border-radius:5.5px;box-sizing:border-box;"></div>
<div style="position:absolute;left:1072px;top:1007px;width:32px;height:2px;background:#ff8c20;border-radius:1px;"></div>
<span class="t" style="left:1074.48px;top:1016.90px;font-size:16px;letter-spacing:-0.300px;color:#ececec;transform:scaleX(0.9703);transform-origin:0 50%;">Add</span>
<span class="t" style="left:1073.49px;top:1033.20px;font-size:16px;letter-spacing:-0.300px;color:#ececec;transform:scaleX(0.9242);transform-origin:0 50%;">New</span>
<span class="t" style="left:1071.36px;top:1049.40px;font-size:16px;letter-spacing:-0.300px;color:#ececec;transform:scaleX(0.9601);transform-origin:0 50%;">Math</span>
<div style="position:absolute;left:1113px;top:999px;width:40px;height:78px;background:;background:linear-gradient(#434444,#2e2e2e 22%,#2e2e2e 86%,#333 94%,#1e1e1e);border:1px solid #766e68;border-radius:5.5px;box-sizing:border-box;"></div>
<div style="position:absolute;left:1117px;top:1007px;width:32px;height:2px;background:#c2c6da;border-radius:1px;"></div>
<span class="t" style="left:1119.48px;top:1016.90px;font-size:16px;letter-spacing:-0.300px;color:#ececec;transform:scaleX(0.9703);transform-origin:0 50%;">Add</span>
<span class="t" style="left:1118.49px;top:1033.20px;font-size:16px;letter-spacing:-0.300px;color:#ececec;transform:scaleX(0.9242);transform-origin:0 50%;">New</span>
<span class="t" style="left:1122.87px;top:1049.40px;font-size:16px;letter-spacing:-0.300px;color:#ececec;transform:scaleX(0.8334);transform-origin:0 50%;">Ref</span>
<div style="position:absolute;left:1158px;top:999px;width:40px;height:78px;background:;background:linear-gradient(#434444,#2e2e2e 22%,#2e2e2e 86%,#333 94%,#1e1e1e);border:1px solid #766e68;border-radius:5.5px;box-sizing:border-box;"></div>
<div style="position:absolute;left:1162px;top:1007px;width:32px;height:2px;background:#c264f0;border-radius:1px;"></div>
<span class="t" style="left:1164.48px;top:1016.90px;font-size:16px;letter-spacing:-0.300px;color:#ececec;transform:scaleX(0.9703);transform-origin:0 50%;">Add</span>
<span class="t" style="left:1163.49px;top:1033.20px;font-size:16px;letter-spacing:-0.300px;color:#ececec;transform:scaleX(0.9242);transform-origin:0 50%;">New</span>
<span class="t" style="left:1167.00px;top:1049.40px;font-size:16px;letter-spacing:-0.300px;color:#ececec;transform:scaleX(0.8155);transform-origin:0 50%;">Bus</span>
<div style="position:absolute;left:1208.5px;top:1000px;width:1px;height:76px;background:#5e5852;"></div>
<div style="position:absolute;left:1219px;top:999px;width:40px;height:78px;background:;background:linear-gradient(#434444,#2e2e2e 22%,#2e2e2e 86%,#333 94%,#1e1e1e);border:1px solid #766e68;border-radius:5.5px;box-sizing:border-box;"></div>
<div style="position:absolute;left:1223px;top:1007px;width:32px;height:2px;background:#505050;border-radius:1px;"></div>
<span class="t" style="left:1225.63px;top:1033.40px;font-size:16px;letter-spacing:-0.300px;color:#ececec;transform:scaleX(0.8284);transform-origin:0 50%;">AFG</span>
<div style="position:absolute;left:1269.5px;top:1000px;width:1px;height:76px;background:#5e5852;"></div>
<div style="position:absolute;left:1280px;top:1001px;width:200px;height:75.5px;background:#c9c9c9;border-radius:4px;border:1px solid #141414;box-sizing:border-box;"></div>
<div style="position:absolute;left:1281px;top:1002px;width:198px;height:18px;background:#57585a;border-radius:3px 3px 0 0;"></div>
<span class="t" style="left:1286.20px;top:1000.70px;font-size:15px;letter-spacing:0.597px;color:#ececec;">Horizontal</span>
<span class="t" style="left:1285.20px;top:1019.80px;font-size:14.5px;letter-spacing:-0.117px;color:#1c1c1c;">20 ms/div</span>
<span class="t" style="left:1391.20px;top:1019.80px;font-size:14.5px;letter-spacing:-0.092px;color:#1c1c1c;">200 ms</span>
<span class="t" style="left:1285.20px;top:1038.70px;font-size:14.5px;letter-spacing:-0.300px;color:#1c1c1c;transform:scaleX(0.9757);transform-origin:0 50%;">SR: 6.25 MS/s</span>
<span class="t" style="left:1391.20px;top:1038.70px;font-size:14.5px;letter-spacing:0.105px;color:#1c1c1c;">160 ns/pt</span>
<span class="t" style="left:1285.20px;top:1057.60px;font-size:14.5px;letter-spacing:-0.174px;color:#1c1c1c;">RL: 1.25 Mpts</span>
<span class="t" style="left:1406.00px;top:1057.60px;font-size:14.5px;letter-spacing:-0.007px;color:#1c1c1c;">10%</span>
<svg style="left:1390px;top:1059px" width="12" height="16" viewBox="0 0 12 16"><path d="M1.5 1.5H9.5V10H7.3L5.5 13.5L3.7 10H1.5Z" fill="#1a1208" stroke="#f08c1e" stroke-width="1.4"/><path d="M3.6 3.8H7.4M5.5 3.8V8.4" stroke="#fff" stroke-width="1.3" fill="none"/></svg>
<div style="position:absolute;left:1485.5px;top:1001px;width:159.5px;height:75.5px;background:#c9c9c9;border-radius:4px;border:1px solid #141414;box-sizing:border-box;"></div>
<div style="position:absolute;left:1486.5px;top:1002px;width:157.5px;height:18px;background:#57585a;border-radius:3px 3px 0 0;"></div>
<span class="t" style="left:1491.70px;top:1000.70px;font-size:15px;letter-spacing:0.292px;color:#ececec;">Trigger</span>
<div style="position:absolute;left:1490px;top:1023px;width:30px;height:15.6px;background:#a264ba;border-radius:5px;border:1px solid #1e1e1e;box-sizing:border-box;"></div>
<span class="t" style="left:1496.86px;top:1020.80px;font-size:14.5px;letter-spacing:-0.300px;color:#000;transform:scaleX(0.9337);transform-origin:0 50%;">B1</span>
<span class="t" style="left:1530.00px;top:1019.80px;font-size:14.5px;letter-spacing:-0.300px;color:#1c1c1c;transform:scaleX(0.9232);transform-origin:0 50%;">I2C</span>
<span class="t" style="left:1490.30px;top:1038.00px;font-size:14.5px;letter-spacing:-0.300px;color:#1c1c1c;transform:scaleX(0.9747);transform-origin:0 50%;">Address</span>
<div style="position:absolute;left:1650px;top:1001px;width:150px;height:75.5px;background:#c9c9c9;border-radius:4px;border:1px solid #141414;box-sizing:border-box;"></div>
<div style="position:absolute;left:1651px;top:1002px;width:148px;height:18px;background:#57585a;border-radius:3px 3px 0 0;"></div>
<span class="t" style="left:1656.20px;top:1000.70px;font-size:15px;letter-spacing:0.405px;color:#ececec;">Acquisition</span>
<span class="t" style="left:1655.20px;top:1019.80px;font-size:14.5px;letter-spacing:0.129px;color:#1c1c1c;">Auto,</span>
<span class="t" style="left:1736.50px;top:1019.80px;font-size:14.5px;letter-spacing:-0.300px;color:#1c1c1c;transform:scaleX(0.9902);transform-origin:0 50%;">Analyze</span>
<span class="t" style="left:1655.20px;top:1038.70px;font-size:14.5px;letter-spacing:-0.196px;color:#1c1c1c;">Sample: 12 bits</span>
<span class="t" style="left:1655.20px;top:1057.60px;font-size:14.5px;letter-spacing:-0.045px;color:#1c1c1c;">225 Acqs</span>
<div style="position:absolute;left:1811.5px;top:1000px;width:1px;height:76px;background:#5e5852;"></div>
<div style="position:absolute;left:1822px;top:999px;width:90.5px;height:36.5px;background:#12d412;border-radius:6px;border:1px solid #0e9a0e;box-sizing:border-box;"></div>
<span class="t" style="left:1834.84px;top:1006.00px;font-size:13.5px;letter-spacing:0.276px;color:#fff;font-weight:bold;">Triggered</span>
</body></html>
